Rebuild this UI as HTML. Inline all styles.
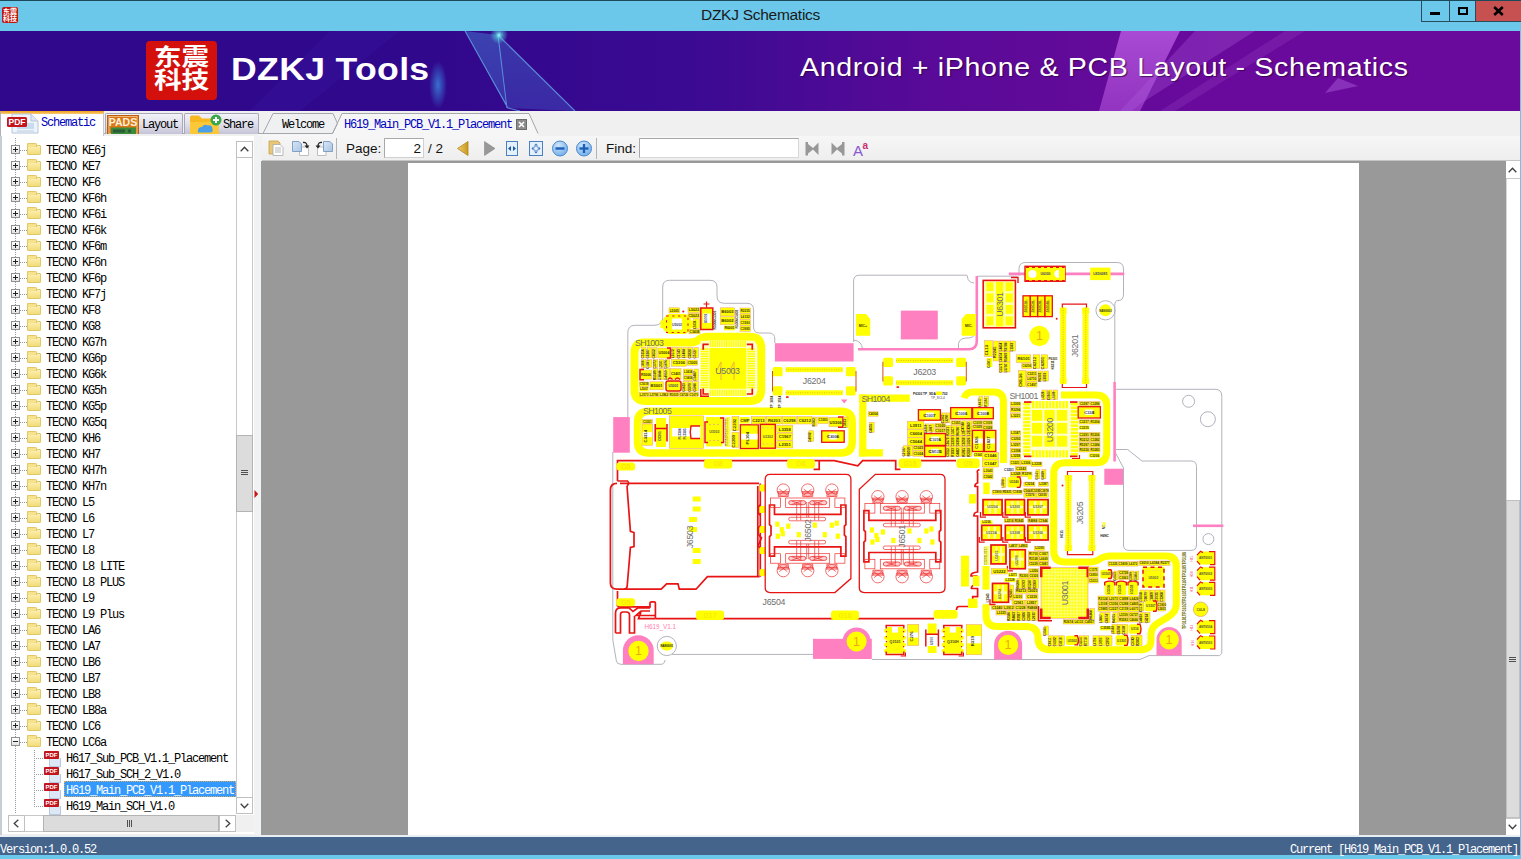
<!DOCTYPE html>
<html lang="en"><head><meta charset="utf-8"><title>DZKJ Schematics</title>
<style>
*{box-sizing:border-box;margin:0;padding:0}
html,body{width:1521px;height:859px;overflow:hidden;background:#f0f0f0}
body{font-family:"Liberation Sans",sans-serif;font-size:12px;color:#000}
#app{position:absolute;left:0;top:0;width:1521px;height:859px;overflow:hidden;background:#f0f0f0}
.abs{position:absolute}
/* title bar */
#titlebar{position:absolute;left:0;top:0;width:1521px;height:31px;background:#6bc8ea;border-top:1px solid #1d4a5a}
#titlebar .ttl{position:absolute;left:0;width:1521px;top:5px;text-align:center;font-size:15.5px;color:#1a1a1a;letter-spacing:-0.28px}
#appicon{position:absolute;left:2px;top:6px;width:16px;height:16px;background:#c0140c;border-radius:2px;color:#fff;font-family:"Liberation Sans","Noto Sans CJK SC",sans-serif;font-size:7px;line-height:7px;font-weight:bold;text-align:center;padding-top:1px;overflow:hidden}
#wctl{position:absolute;left:1421px;top:0;width:100px;border-right:none !important;height:21px;border:1px solid #2b4a5a;border-top:none;display:flex}
#wctl div{height:20px;position:relative}
#wctl .mn{width:28px;border-right:1px solid #2b4a5a}
#wctl .mx{width:27px;border-right:1px solid #2b4a5a}
#wctl .cl{width:45px;background:#c75050}
/* banner */
#banner{position:absolute;left:0;top:31px;width:1521px;height:80px;overflow:hidden;background:linear-gradient(90deg,#30088c 0%,#30088c 28%,#3a0a92 45%,#5a0a98 62%,#6a0a9c 80%,#6a0a9c 100%)}
/* tabs */
#tabrow{position:absolute;left:0;top:111px;width:1521px;height:25px;background:#f0f0f0}
.mono{font-family:"Liberation Mono",monospace;font-size:12px;letter-spacing:-1.2px;white-space:pre}
/* tree */
#tree{position:absolute;left:2px;top:0;width:235px;height:859px;pointer-events:none}
#treebg{position:absolute;left:2px;top:136px;width:252px;height:698px;background:#fff}
.row{position:absolute;left:0;height:16px;width:236px;white-space:nowrap}
.row .lbl{position:absolute;left:44px;top:1px;height:16px;line-height:16px;font-family:"Liberation Mono",monospace;font-size:12px;letter-spacing:-1.2px;white-space:pre;color:#000}
.row .lbl.f{left:62px;padding:0 1px 0 2px}
.row .lbl.sel{background:#3399ff;color:#fff;width:172px;top:-1px;height:16px;line-height:20px;outline:1px dotted #d8a860;outline-offset:-1px}
.pm{position:absolute;left:9px;top:3px;width:9px;height:9px;border:1px solid #919191;background:linear-gradient(#fff,#e4e4e4)}
.pm i{position:absolute;left:1px;top:3px;width:5px;height:1px;background:#222}
.pm i.pl:after{content:"";position:absolute;left:2px;top:-2px;width:1px;height:5px;background:#222}
.fold{position:absolute;left:25px;top:3px;width:14px;height:10px;background:linear-gradient(#fbf0b0,#f3dc78);border:1px solid #e0c868;border-radius:1px}
.fold:before{content:"";position:absolute;left:-1px;top:-3px;width:8px;height:3px;background:#f6e28c;border:1px solid #e0c868;border-bottom:none;border-radius:1px 2px 0 0}
.vline{position:absolute;width:1px;background-image:linear-gradient(#999 50%,transparent 50%);background-size:1px 2px}
#viewer{position:absolute;left:261px;top:161px;width:1245px;height:674px;background:#999;overflow:hidden}
#page{position:absolute;left:147px;top:2px;width:951px;height:672px;background:#fff}
.pdfi{position:absolute;left:42px;top:0;width:18px;height:16px}
.pdfi b{position:absolute;left:0;top:1px;width:15px;height:8px;background:#c4141c;color:#fff;font:bold 6px/8px "Liberation Sans",sans-serif;text-align:center;border-radius:1px}
.pdfi:before{content:"";position:absolute;left:5px;top:8px;width:10px;height:8px;background:#dce8f6;border:1px solid #b8c8e0;border-top:none}
.row .hl{position:absolute;top:8px;height:1px;background-image:linear-gradient(90deg,#999 50%,transparent 50%);background-size:2px 1px}

</style></head>
<body>
<div id="app">
<div id="titlebar">
<div id="appicon">东震<br>科技</div>
<div class="ttl">DZKJ Schematics</div>
<div id="wctl"><div class="mn"><span class="abs" style="left:8px;top:11px;width:10px;height:3px;background:#000"></span></div><div class="mx"><span class="abs" style="left:8px;top:6px;width:10px;height:8px;border:2px solid #000;border-top-width:2px"></span></div><div class="cl"><svg class="abs" style="left:17px;top:5px" width="11" height="10" viewBox="0 0 11 10"><path d="M1.2 1 L9.8 9 M9.8 1 L1.2 9" stroke="#000" stroke-width="2.6" fill="none"/></svg></div></div>
</div>
<div class="abs" style="left:1519.5px;top:31px;width:1.5px;height:828px;background:#6bc8ea;z-index:9"></div>

<div id="banner">
<svg class="abs" style="left:0;top:0" width="1521" height="80" viewBox="0 31 1521 80">
<defs>
<linearGradient id="sh1" x1="0" y1="0" x2="0" y2="1"><stop offset="0" stop-color="#4aa0e8" stop-opacity=".38"/><stop offset="1" stop-color="#4a80e0" stop-opacity=".34"/></linearGradient>
<linearGradient id="sh2" x1="0" y1="0" x2="0" y2="1"><stop offset="0" stop-color="#c060e8" stop-opacity=".75"/><stop offset="1" stop-color="#b050d8" stop-opacity=".6"/></linearGradient>
<radialGradient id="glow"><stop offset="0" stop-color="#9ff" stop-opacity="1"/><stop offset=".4" stop-color="#5cd" stop-opacity=".6"/><stop offset="1" stop-color="#5cd" stop-opacity="0"/></radialGradient>
<radialGradient id="glow2"><stop offset="0" stop-color="#3a8ae0" stop-opacity=".8"/><stop offset="1" stop-color="#3a8ae0" stop-opacity="0"/></radialGradient>
</defs>
<polygon points="330,31 400,31 300,111 250,111" fill="#3a20b0" opacity=".22"/>
<polygon points="465,31 498,35 507,108 " fill="url(#sh1)"/>
<polygon points="498,35 575,111 508,108" fill="url(#sh1)" opacity=".8"/>
<path d="M465 31 L508 108 L520 111 M498 35 L507 108 M498 35 L575 111" stroke="#6ab8f0" stroke-width="1.1" fill="none" opacity=".7"/>
<ellipse cx="438" cy="85" rx="9" ry="24" fill="url(#glow2)"/>
<circle cx="499" cy="35" r="9" fill="url(#glow)"/>
<polygon points="1121,31 1180,31 1140,111 1099,111" fill="url(#sh2)"/>
<polygon points="1195,31 1255,31 1140,104 1132,111 1120,111" fill="#b060e0" opacity=".3"/>
<polygon points="1285,31 1305,31 1175,111 1160,111" fill="#b060e0" opacity=".18"/>
<polygon points="1325,93 1358,86 1338,78" fill="#b060e0" opacity=".45"/>
</svg>
<div class="abs" style="left:146px;top:10px;width:71px;height:59px;background:#d4100c;border-radius:4px"></div>
<div class="abs" style="left:146px;top:15px;width:71px;color:#fff;font-family:'Liberation Sans','Noto Sans CJK SC',sans-serif;font-weight:bold;font-size:23px;line-height:23px;text-align:center;transform:scaleX(1.2);transform-origin:35.5px 0">东震<br>科技</div>
<div class="abs" id="dzkj" style="left:231px;top:20px;font-size:31.5px;font-weight:bold;color:#fff;line-height:36px;white-space:nowrap;letter-spacing:.3px;transform:scaleX(1.13);transform-origin:0 0">DZKJ Tools</div>
<div class="abs" id="slog" style="left:800px;top:21px;font-size:26px;color:#fff;line-height:30px;white-space:nowrap;letter-spacing:.6px;transform:scaleX(1.1);transform-origin:0 0;text-shadow:1px 1px 1px rgba(40,0,60,.7)">Android + iPhone &amp; PCB Layout - Schematics</div>
</div>

<div id="tabrow">
<div class="abs" style="left:0;top:22px;width:264px;height:1px;background:#a8a8b4"></div>
<!-- Schematic (active) -->
<div class="abs" style="left:0;top:0;width:104px;height:25px;background:#fff;border-left:1px solid #b0b0b8;border-right:1px solid #c8c8d0"></div>
<div class="abs" style="left:1px;top:0;width:103px;height:3px;background:linear-gradient(#f0a020,#f8c870)"></div>
<svg class="abs" style="left:5px;top:2px" width="36" height="22" viewBox="0 0 36 22">
<path d="M7 1 H26 L33 8 V20 H7 Z" fill="#eef4fb" stroke="#b8c4d8" stroke-width="1"/>
<path d="M26 1 V8 H33" fill="#dde6f2" stroke="#b8c4d8" stroke-width="1"/>
<rect x="12" y="10" width="17" height="6" fill="#c8dcf0"/><rect x="12" y="17" width="17" height="2" fill="#d4e0f0"/>
<rect x="2" y="4" width="20" height="10" rx="1.5" fill="#c4141c"/>
<text x="12" y="12.3" font-family="Liberation Sans,sans-serif" font-weight="bold" font-size="8.5" fill="#fff" text-anchor="middle">PDF</text>
</svg>
<div class="abs mono" style="left:41px;top:5px;color:#0000c0;line-height:14px">Schematic</div>
<!-- Layout -->
<div class="abs" style="left:105px;top:2px;width:78px;height:21px;background:linear-gradient(#f2f2f8,#e0e0ec 50%,#c4c4d8);border:1px solid #a8a8b8;border-bottom:none;border-radius:2px 2px 0 0"></div>
<svg class="abs" style="left:107px;top:4px" width="33" height="19" viewBox="0 0 33 19">
<rect x=".5" y=".5" width="31" height="18.5" fill="#d87818" stroke="#b86010"/>
<rect x="2" y="1.5" width="28" height="17" fill="none" stroke="#f8c890" stroke-width=".8"/>
<rect x="4" y="12.5" width="25" height="6.5" fill="#3a8a3a"/><rect x="6" y="14.5" width="12" height="3" fill="#2a5a3a"/><rect x="21" y="14.5" width="3" height="3" fill="#2a5a3a"/>
<text x="16" y="11" font-family="Liberation Sans,sans-serif" font-weight="bold" font-size="10.5" fill="#fff0d8" text-anchor="middle">PADS</text>
</svg>
<div class="abs mono" style="left:142px;top:7px;line-height:14px">Layout</div>
<!-- Share -->
<div class="abs" style="left:184px;top:2px;width:75px;height:21px;background:linear-gradient(#f2f2f8,#e0e0ec 50%,#c4c4d8);border:1px solid #a8a8b8;border-bottom:none;border-radius:2px 2px 0 0"></div>
<svg class="abs" style="left:189px;top:3px" width="34" height="20" viewBox="0 0 34 20">
<path d="M1 3 Q1 1.5 2.5 1.5 H10 L13 4.5 H28 Q29.5 4.500 29.500 6 V20 H1 Z" fill="#f8b820"/>
<path d="M1 8 H29.500 V20 H1 Z" fill="#fcc838"/>
<path d="M9 18.500 Q8 13 13 13 Q15 9.500 19 11.500 Q23 10.500 23.500 15 Q24.500 18.500 21 18.500 Z" fill="#4aa0e8"/>
<circle cx="27" cy="6" r="5.500" fill="#3aa848"/><path d="M27 3 V9 M24 6 H30" stroke="#fff" stroke-width="2"/>
</svg>
<div class="abs mono" style="left:223px;top:7px;line-height:14px">Share</div>
<!-- right tabs -->
<svg class="abs" style="left:258px;top:0" width="300" height="25" viewBox="258 111 300 25">
<polygon points="342,113.500 529,113.500 538,133.500 538,136 258,136 258,133.500 332.500,133.500" fill="#f6f6f6"/>
<polygon points="263,133.500 273,113.500 333,113.500 337.500,123.500 332.500,133.500" fill="#eef0f2" stroke="#a4a8ac" stroke-width="1"/>
<path d="M332.500 133.500 L342 113.500 H529 L538 133.500" fill="none" stroke="#a4a8ac" stroke-width="1"/>
<path d="M258 133.500 H263" stroke="#a4a8ac"/>
<rect x="516.500" y="119.500" width="10" height="10" fill="#8c8c8c" stroke="#6c6c6c"/>
<path d="M519 122 L524 127 M524 122 L519 127" stroke="#fff" stroke-width="1.500"/>
</svg>
<div class="abs mono" style="left:282px;top:7px;line-height:14px">Welcome</div>
<div class="abs mono" style="left:344px;top:7px;line-height:14px;color:#0000c0">H619_Main_PCB_V1.1_Placement</div>
</div>

<div id="treebg"></div>
<div class="abs" style="left:0;top:136px;width:2px;height:699px;background:#c8ccd4"></div>
<div class="abs" style="left:254px;top:136px;width:7px;height:699px;background:#f0f2f4"></div>
<!-- vertical scrollbar -->
<div class="abs" style="left:236px;top:141px;width:17px;height:673px;background:#fff;border-left:1px solid #c8c8c8;border-right:1px solid #c8c8c8"></div>
<div class="abs" style="left:236px;top:141px;width:17px;height:17px;background:#fff;border:1px solid #c0c0c0"></div>
<svg class="abs" style="left:240px;top:146px" width="9" height="6"><path d="M.7 5.300 L4.500 1.200 L8.300 5.300" fill="none" stroke="#404040" stroke-width="1.300"/></svg>
<div class="abs" style="left:236px;top:797px;width:17px;height:17px;background:#fff;border:1px solid #c0c0c0"></div>
<svg class="abs" style="left:240px;top:803px" width="9" height="6"><path d="M.7 .7 L4.500 4.800 L8.300 .7" fill="none" stroke="#404040" stroke-width="1.300"/></svg>
<div class="abs" style="left:236px;top:435px;width:17px;height:77px;background:#dcdcdc;border:1px solid #b4b4b4"></div>
<div class="abs" style="left:241px;top:470px;width:7px;height:1px;background:#505050;box-shadow:0 2px 0 #505050,0 4px 0 #505050"></div>
<!-- horizontal scrollbar -->
<div class="abs" style="left:8px;top:815px;width:228px;height:17px;background:#fff;border:1px solid #c8c8c8"></div>
<div class="abs" style="left:8px;top:815px;width:17px;height:17px;background:#fff;border:1px solid #c0c0c0"></div>
<svg class="abs" style="left:13px;top:819px" width="6" height="9"><path d="M5.300 .7 L1.200 4.500 L5.300 8.300" fill="none" stroke="#404040" stroke-width="1.300"/></svg>
<div class="abs" style="left:219px;top:815px;width:17px;height:17px;background:#fff;border:1px solid #c0c0c0"></div>
<svg class="abs" style="left:225px;top:819px" width="6" height="9"><path d="M.7 .7 L4.800 4.500 L.7 8.300" fill="none" stroke="#404040" stroke-width="1.300"/></svg>
<div class="abs" style="left:43px;top:815px;width:176px;height:17px;background:#dcdcdc;border:1px solid #b4b4b4"></div>
<div class="abs" style="left:127px;top:820px;width:1px;height:7px;background:#505050;box-shadow:2px 0 0 #505050,4px 0 0 #505050"></div>
<div class="abs" style="left:236px;top:815px;width:18px;height:17px;background:#f0f0f0"></div>
<!-- splitter arrow -->
<svg class="abs" style="left:254px;top:489px" width="5" height="10"><path d="M.500 1 L4.200 5 L.500 9 Z" fill="#c81414"/></svg>

<div id="tree">
<div class="vline" style="left:13px;top:138px;height:676px"></div>
<div class="vline" style="left:32px;top:750px;height:57px"></div>
<div class="row" style="top:142px"><span class="hl" style="left:18px;width:7px"></span><span class="pm"><i class=pl></i></span><span class="fold"></span><span class="lbl">TECNO KE6j</span></div>
<div class="row" style="top:158px"><span class="hl" style="left:18px;width:7px"></span><span class="pm"><i class=pl></i></span><span class="fold"></span><span class="lbl">TECNO KE7</span></div>
<div class="row" style="top:174px"><span class="hl" style="left:18px;width:7px"></span><span class="pm"><i class=pl></i></span><span class="fold"></span><span class="lbl">TECNO KF6</span></div>
<div class="row" style="top:190px"><span class="hl" style="left:18px;width:7px"></span><span class="pm"><i class=pl></i></span><span class="fold"></span><span class="lbl">TECNO KF6h</span></div>
<div class="row" style="top:206px"><span class="hl" style="left:18px;width:7px"></span><span class="pm"><i class=pl></i></span><span class="fold"></span><span class="lbl">TECNO KF6i</span></div>
<div class="row" style="top:222px"><span class="hl" style="left:18px;width:7px"></span><span class="pm"><i class=pl></i></span><span class="fold"></span><span class="lbl">TECNO KF6k</span></div>
<div class="row" style="top:238px"><span class="hl" style="left:18px;width:7px"></span><span class="pm"><i class=pl></i></span><span class="fold"></span><span class="lbl">TECNO KF6m</span></div>
<div class="row" style="top:254px"><span class="hl" style="left:18px;width:7px"></span><span class="pm"><i class=pl></i></span><span class="fold"></span><span class="lbl">TECNO KF6n</span></div>
<div class="row" style="top:270px"><span class="hl" style="left:18px;width:7px"></span><span class="pm"><i class=pl></i></span><span class="fold"></span><span class="lbl">TECNO KF6p</span></div>
<div class="row" style="top:286px"><span class="hl" style="left:18px;width:7px"></span><span class="pm"><i class=pl></i></span><span class="fold"></span><span class="lbl">TECNO KF7j</span></div>
<div class="row" style="top:302px"><span class="hl" style="left:18px;width:7px"></span><span class="pm"><i class=pl></i></span><span class="fold"></span><span class="lbl">TECNO KF8</span></div>
<div class="row" style="top:318px"><span class="hl" style="left:18px;width:7px"></span><span class="pm"><i class=pl></i></span><span class="fold"></span><span class="lbl">TECNO KG8</span></div>
<div class="row" style="top:334px"><span class="hl" style="left:18px;width:7px"></span><span class="pm"><i class=pl></i></span><span class="fold"></span><span class="lbl">TECNO KG7h</span></div>
<div class="row" style="top:350px"><span class="hl" style="left:18px;width:7px"></span><span class="pm"><i class=pl></i></span><span class="fold"></span><span class="lbl">TECNO KG6p</span></div>
<div class="row" style="top:366px"><span class="hl" style="left:18px;width:7px"></span><span class="pm"><i class=pl></i></span><span class="fold"></span><span class="lbl">TECNO KG6k</span></div>
<div class="row" style="top:382px"><span class="hl" style="left:18px;width:7px"></span><span class="pm"><i class=pl></i></span><span class="fold"></span><span class="lbl">TECNO KG5h</span></div>
<div class="row" style="top:398px"><span class="hl" style="left:18px;width:7px"></span><span class="pm"><i class=pl></i></span><span class="fold"></span><span class="lbl">TECNO KG5p</span></div>
<div class="row" style="top:414px"><span class="hl" style="left:18px;width:7px"></span><span class="pm"><i class=pl></i></span><span class="fold"></span><span class="lbl">TECNO KG5q</span></div>
<div class="row" style="top:430px"><span class="hl" style="left:18px;width:7px"></span><span class="pm"><i class=pl></i></span><span class="fold"></span><span class="lbl">TECNO KH6</span></div>
<div class="row" style="top:446px"><span class="hl" style="left:18px;width:7px"></span><span class="pm"><i class=pl></i></span><span class="fold"></span><span class="lbl">TECNO KH7</span></div>
<div class="row" style="top:462px"><span class="hl" style="left:18px;width:7px"></span><span class="pm"><i class=pl></i></span><span class="fold"></span><span class="lbl">TECNO KH7h</span></div>
<div class="row" style="top:478px"><span class="hl" style="left:18px;width:7px"></span><span class="pm"><i class=pl></i></span><span class="fold"></span><span class="lbl">TECNO KH7n</span></div>
<div class="row" style="top:494px"><span class="hl" style="left:18px;width:7px"></span><span class="pm"><i class=pl></i></span><span class="fold"></span><span class="lbl">TECNO L5</span></div>
<div class="row" style="top:510px"><span class="hl" style="left:18px;width:7px"></span><span class="pm"><i class=pl></i></span><span class="fold"></span><span class="lbl">TECNO L6</span></div>
<div class="row" style="top:526px"><span class="hl" style="left:18px;width:7px"></span><span class="pm"><i class=pl></i></span><span class="fold"></span><span class="lbl">TECNO L7</span></div>
<div class="row" style="top:542px"><span class="hl" style="left:18px;width:7px"></span><span class="pm"><i class=pl></i></span><span class="fold"></span><span class="lbl">TECNO L8</span></div>
<div class="row" style="top:558px"><span class="hl" style="left:18px;width:7px"></span><span class="pm"><i class=pl></i></span><span class="fold"></span><span class="lbl">TECNO L8 LITE</span></div>
<div class="row" style="top:574px"><span class="hl" style="left:18px;width:7px"></span><span class="pm"><i class=pl></i></span><span class="fold"></span><span class="lbl">TECNO L8 PLUS</span></div>
<div class="row" style="top:590px"><span class="hl" style="left:18px;width:7px"></span><span class="pm"><i class=pl></i></span><span class="fold"></span><span class="lbl">TECNO L9</span></div>
<div class="row" style="top:606px"><span class="hl" style="left:18px;width:7px"></span><span class="pm"><i class=pl></i></span><span class="fold"></span><span class="lbl">TECNO L9 Plus</span></div>
<div class="row" style="top:622px"><span class="hl" style="left:18px;width:7px"></span><span class="pm"><i class=pl></i></span><span class="fold"></span><span class="lbl">TECNO LA6</span></div>
<div class="row" style="top:638px"><span class="hl" style="left:18px;width:7px"></span><span class="pm"><i class=pl></i></span><span class="fold"></span><span class="lbl">TECNO LA7</span></div>
<div class="row" style="top:654px"><span class="hl" style="left:18px;width:7px"></span><span class="pm"><i class=pl></i></span><span class="fold"></span><span class="lbl">TECNO LB6</span></div>
<div class="row" style="top:670px"><span class="hl" style="left:18px;width:7px"></span><span class="pm"><i class=pl></i></span><span class="fold"></span><span class="lbl">TECNO LB7</span></div>
<div class="row" style="top:686px"><span class="hl" style="left:18px;width:7px"></span><span class="pm"><i class=pl></i></span><span class="fold"></span><span class="lbl">TECNO LB8</span></div>
<div class="row" style="top:702px"><span class="hl" style="left:18px;width:7px"></span><span class="pm"><i class=pl></i></span><span class="fold"></span><span class="lbl">TECNO LB8a</span></div>
<div class="row" style="top:718px"><span class="hl" style="left:18px;width:7px"></span><span class="pm"><i class=pl></i></span><span class="fold"></span><span class="lbl">TECNO LC6</span></div>
<div class="row" style="top:734px"><span class="hl" style="left:18px;width:7px"></span><span class="pm"><i class=mi></i></span><span class="fold"></span><span class="lbl">TECNO LC6a</span></div>
<div class="row" style="top:750px"><span class="hl" style="left:32px;width:11px"></span><span class="pdfi"><b>PDF</b></span><span class="lbl f">H617_Sub_PCB_V1.1_Placement</span></div>
<div class="row" style="top:766px"><span class="hl" style="left:32px;width:11px"></span><span class="pdfi"><b>PDF</b></span><span class="lbl f">H617_Sub_SCH_2_V1.0</span></div>
<div class="row" style="top:782px"><span class="hl" style="left:32px;width:11px"></span><span class="pdfi"><b>PDF</b></span><span class="lbl f sel">H619_Main_PCB_V1.1_Placement</span></div>
<div class="row" style="top:798px"><span class="hl" style="left:32px;width:11px"></span><span class="pdfi"><b>PDF</b></span><span class="lbl f">H619_Main_SCH_V1.0</span></div>
</div>
<div id="toolbar" class="abs" style="left:262px;top:136px;width:1259px;height:25px;background:linear-gradient(#f6f6f6,#eeeeee)">
<div class="abs" style="left:0;top:24px;width:1258px;height:1px;background:#c4c4c4"></div>
<svg class="abs" style="left:0;top:0" width="620" height="24" viewBox="262 136 620 24">
<defs>
<linearGradient id="pg1" x1="0" y1="0" x2="1" y2="1"><stop offset="0" stop-color="#d8e6f6"/><stop offset="1" stop-color="#a8c4e4"/></linearGradient>
<linearGradient id="gold" x1="0" y1="0" x2="1" y2="0"><stop offset="0" stop-color="#f0d070"/><stop offset="1" stop-color="#c89820"/></linearGradient>
<radialGradient id="bl" cx=".4" cy=".3" r=".8"><stop offset="0" stop-color="#cfe6fb"/><stop offset="1" stop-color="#6aa8e8"/></radialGradient>
</defs>
<!-- icon1 -->
<path d="M269 141 H278 L280 143 V154 H269 Z" fill="#e8c878" stroke="#c8a050" stroke-width=".8"/>
<path d="M273 144.500 H280 L283 147.500 V155.500 H273 Z" fill="#fff" stroke="#a8a8a8" stroke-width=".8"/>
<path d="M275 148 H281 M275 150 H281 M275 152 H281" stroke="#a0a8b0" stroke-width=".8"/>
<!-- icon2 -->
<path d="M299.500 147 H308.500 V155.500 H299.500 Z" fill="#fff" stroke="#b8b8b8" stroke-width=".9"/>
<path d="M292.500 141.500 H299 L301.500 144 V151.500 H292.500 Z" fill="url(#pg1)" stroke="#7898c0" stroke-width=".9"/>
<path d="M303 142.500 Q307 142 307 146" fill="none" stroke="#222" stroke-width="1.300"/><path d="M304.500 145.500 H309.500 L307 148.500 Z" fill="#222"/>
<!-- icon3 -->
<path d="M317.500 147 H326 V155.500 H317.500 Z" fill="#fff" stroke="#b8b8b8" stroke-width=".9"/>
<path d="M323.500 141.500 H330 L332.500 144 V151.500 H323.500 Z" fill="url(#pg1)" stroke="#7898c0" stroke-width=".9"/>
<path d="M322 142.500 Q318 142 318 146" fill="none" stroke="#222" stroke-width="1.300"/><path d="M315.500 145.500 H320.500 L318 148.500 Z" fill="#222"/>
<path d="M336.500 138 V159" stroke="#b4b4b4" stroke-width="1"/>
<!-- page box -->
<rect x="384.500" y="138.500" width="39" height="19" fill="#fff" stroke="#d0d0d0" stroke-width="1"/>
<path d="M384.500 157.500 V138.500 H423.500" fill="none" stroke="#a8a8a8" stroke-width="1"/>
<!-- arrows -->
<path d="M468 141.500 V155.500 L457.500 148.500 Z" fill="url(#gold)" stroke="#b08818" stroke-width=".8"/>
<path d="M484.500 141.500 V155.500 L495 148.500 Z" fill="#989898" stroke="#888" stroke-width=".6"/>
<!-- fit width -->
<rect x="506.500" y="141.500" width="11" height="14" fill="#e4f0fc" stroke="#4a80c0" stroke-width="1"/>
<path d="M508 148.500 L511 146 V151 Z M516 148.500 L513 146 V151 Z" fill="#1a58a8"/>
<!-- fit page -->
<rect x="529.500" y="141.500" width="13" height="14" fill="#e4f0fc" stroke="#4a80c0" stroke-width="1"/>
<path d="M536 143.500 L538 145.500 H534 Z M536 153.500 L538 151.500 H534 Z M531.500 148.500 L533.500 146.500 V150.500 Z M540.500 148.500 L538.500 146.500 V150.500 Z" fill="#3a70b8"/>
<circle cx="536" cy="148.500" r="2.300" fill="none" stroke="#5a88c8" stroke-width=".8"/>
<!-- zoom out/in -->
<circle cx="560" cy="148.500" r="7.500" fill="url(#bl)" stroke="#4a88d0" stroke-width="1"/>
<rect x="555.500" y="147.300" width="9" height="2.400" fill="#1a60b8"/>
<circle cx="584" cy="148.500" r="7.500" fill="url(#bl)" stroke="#4a88d0" stroke-width="1"/>
<rect x="579.500" y="147.300" width="9" height="2.400" fill="#1a60b8"/><rect x="582.800" y="144" width="2.400" height="9" fill="#1a60b8"/>
<path d="M596.500 138 V159" stroke="#b4b4b4" stroke-width="1"/>
<!-- find box -->
<rect x="639.500" y="138.500" width="159" height="19" fill="#fff" stroke="#d8d8d8" stroke-width="1"/>
<path d="M639.500 157.500 V138.500 H798.500" fill="none" stroke="#a8a8a8" stroke-width="1"/>
<!-- find prev/next -->
<path d="M805.500 142 H808 V144 L813 148 L818.500 142.500 V155 L813 149.500 L808 153.500 V155.500 H805.500 Z" fill="#989898"/>
<path d="M844.500 142 H842 V144 L837 148 L831.500 142.500 V155 L837 149.500 L842 153.500 V155.500 H844.500 Z" fill="#989898"/>
<!-- Aa -->
<text x="853" y="156" font-family="Liberation Sans,sans-serif" font-size="15" fill="#8a58d0">A</text>
<text x="862.500" y="148.500" font-family="Liberation Sans,sans-serif" font-size="10" font-weight="bold" fill="#c83070">a</text>
</svg>
<div class="abs" style="left:84px;top:4px;font-size:13.500px;line-height:17px;color:#111">Page:</div>
<div class="abs" style="left:140px;top:4px;width:19px;text-align:right;font-size:13.500px;line-height:17px;color:#111">2</div>
<div class="abs" style="left:166px;top:4px;font-size:13.500px;line-height:17px;color:#111;white-space:pre">/ 2</div>
<div class="abs" style="left:344px;top:4px;font-size:13.500px;line-height:17px;color:#111">Find:</div>
</div>

<div id="viewer">
<div id="page">
<svg style="position:absolute;left:0;top:0" width="951" height="672" viewBox="408 163 951 672" font-family="Liberation Sans,sans-serif">
<defs><pattern id="bga" x="1042.500" y="569" width="3.140" height="3.200" patternUnits="userSpaceOnUse"><rect width="3.140" height="3.200" fill="#ffffa0"/><rect x=".4" y=".4" width="2.300" height="2.400" fill="#ffff00"/></pattern></defs>
<path d="M612.8 452 V640 L616.400 661 Q617 664.300 621 664.300 H661 Q664.500 664.300 665 660" fill="none" stroke="#b2b2bc" stroke-width="1"/>
<path d="M627.800 418 V333 Q627.800 325.300 635 325.300 H654 Q662.700 325.300 662.700 317 V287 Q662.700 280.300 669.500 280.300 H710 Q717 280.300 717 287 V296 Q717 303.300 724.500 303.300 H747 Q753.600 303.300 753.600 310 V327 Q753.600 333 759.500 333 H769 Q774.800 333 774.800 339 V343" fill="none" stroke="#b2b2bc" stroke-width="1"/>
<path d="M672 654.400 H813" fill="none" stroke="#b2b2bc" stroke-width="1"/>
<path d="M872 659.500 H1140 L1149 655.600 H1219.500 L1221.800 653.500 V396 Q1221.800 389.300 1215 389.300 H1116" fill="none" stroke="#b2b2bc" stroke-width="1"/>
<path d="M1019 276 V269 Q1019 262.500 1025.500 262.500 H1117 Q1123.500 262.500 1123.500 269 V294 Q1123.500 300.600 1118 300.600 Q1114.800 300.600 1114.800 305 V382" fill="none" stroke="#b2b2bc" stroke-width="1"/>
<path d="M977.500 276.200 H1017.500" fill="none" stroke="#b2b2bc" stroke-width="1"/>
<path d="M853.600 342 V281 Q853.600 275.200 859.500 275.200 H966 Q967.500 275.200 967.500 277 Q968 282.500 974 283 " fill="none" stroke="#b2b2bc" stroke-width="1"/>
<path d="M853.600 340 Q862 341 862.500 349 " fill="none" stroke="#b2b2bc" stroke-width="1"/>
<path d="M958.500 348 Q957 338.500 966 338 Q974 338.500 975.500 333" fill="none" stroke="#b2b2bc" stroke-width="1"/>
<path d="M1116 449.500 H1127.600 L1142 461 H1191 Q1196.500 461 1196.500 466.500 V545 Q1196.500 550.400 1191 550.400 H1129 Q1123.500 550.400 1123.500 545 V468 L1115 452" fill="none" stroke="#b2b2bc" stroke-width="1"/>
<circle cx="1188.6" cy="401.3" r="6" fill="none" stroke="#b2b2bc" stroke-width="1"/>
<circle cx="1207.9" cy="419.2" r="7.5" fill="none" stroke="#b2b2bc" stroke-width="1"/>
<circle cx="1208.4" cy="539.1" r="5.5" fill="none" stroke="#b2b2bc" stroke-width="1"/>
<circle cx="1105.5" cy="310.3" r="9.6" fill="none" stroke="#b2b2bc" stroke-width="1"/>
<circle cx="666.8" cy="646" r="9.6" fill="none" stroke="#b2b2bc" stroke-width="1"/>
<rect x="774.9" y="343.2" width="78.7" height="18.3" fill="#ff80c0"/>
<rect x="613.2" y="417.1" width="16.6" height="35.6" fill="#ff80c0"/>
<rect x="900.8" y="310.6" width="37" height="28.8" fill="#ff80c0"/>
<rect x="1104.3" y="468.7" width="18.7" height="16.1" fill="#ff80c0"/>
<rect x="813" y="638.8" width="58.8" height="20.1" fill="#ff80c0"/>
<path d="M858 349.200 H969 Q976.800 349.200 976.800 341 V276" fill="none" stroke="#ff80c0" stroke-width="2.6"/>
<path d="M1008.800 273.900 H1124.300" fill="none" stroke="#ff80c0" stroke-width="2.6"/>
<path d="M1114.600 382 V461.500" fill="none" stroke="#ff80c0" stroke-width="2.6"/>
<path d="M1193 525.800 H1223.400" fill="none" stroke="#ff80c0" stroke-width="2.6"/>
<path d="M841 399.500 H847.500 L844.200 403.500 Z" fill="#ff80c0" stroke="none" stroke-width="1.2"/>
<path d="M622.9 664.3 V650.5 A15.4 15.4 0 0 1 653.7 650.5 V664.3 Z" fill="#ff80c0" stroke="none" stroke-width="1.2"/>
<path d="M842.6 658.9 V641.5 A14 14 0 0 1 870.6 641.5 V658.9 Z" fill="#ff80c0" stroke="none" stroke-width="1.2"/>
<path d="M994.1 659.5 V644.7 A14 14 0 0 1 1022.1 644.7 V659.5 Z" fill="#ff80c0" stroke="none" stroke-width="1.2"/>
<path d="M1156.5 655.6 V639.6 A12.6 12.6 0 0 1 1181.7 639.6 V655.6 Z" fill="#ff80c0" stroke="none" stroke-width="1.2"/>
<path d="M644 342.500 H690 Q696 342.500 699 339.500 Q702 336.700 708 336.700 H750 Q761.200 336.700 761.200 348 V390 Q761.200 401 750 401 H646 Q634.500 401 634.500 390 V353 Q634.500 342.500 644 342.500 Z" fill="none" stroke="#ffff00" stroke-width="8" stroke-linejoin="round" stroke-linecap="butt"/>
<path d="M649 411.200 H841 Q852.200 411.200 852.200 422 V442 Q852.200 453 841 453 H649 Q637.600 453 637.600 442 V422 Q637.600 411.200 649 411.200 Z" fill="none" stroke="#ffff00" stroke-width="7.5" stroke-linejoin="round"/>
<rect x="859.2" y="394.5" width="50.5" height="7.3" fill="#ffff00"/>
<rect x="859.2" y="394.5" width="7.2" height="62" fill="#ffff00"/>
<rect x="859.2" y="449.2" width="23.7" height="7.3" fill="#ffff00"/>
<path d="M964 398 Q966 392 973 392 H994 Q1003.500 392 1003.500 402 V463" fill="none" stroke="#ffff00" stroke-width="7" stroke-linejoin="round"/>
<path d="M1061 395 H1096 Q1106.700 395 1106.700 405 V452 Q1106.700 462.800 1096 462.800 H1065 Q1053.700 462.800 1053.700 474 V551 Q1053.700 562 1065 562 H1089 Q1096 562 1100 559 Q1104 556 1111 556 H1166 Q1176.300 556 1176.300 566 V604 Q1176.300 612 1168 617 L1158 623 Q1151 627 1151 635 V640 Q1151 649.700 1141 649.700 H1050 Q1038 649.700 1038 638 Q1038 626.400 1026 626.400 H997 Q986 626.400 986 615 V604.300" fill="none" stroke="#ffff00" stroke-width="7" stroke-linejoin="round"/>
<path d="M986 589.600 V566" fill="none" stroke="#ffff00" stroke-width="7" stroke-linejoin="round"/>
<rect x="772.8" y="367" width="9.8" height="9.3" fill="#ffff00" rx="1.5"/>
<rect x="845.9" y="367" width="9.8" height="9.3" fill="#ffff00" rx="1.5"/>
<rect x="772.8" y="386.2" width="9.8" height="9.3" fill="#ffff00" rx="1.5"/>
<rect x="845.9" y="386.2" width="9.8" height="9.3" fill="#ffff00" rx="1.5"/>
<rect x="785.6" y="367.3" width="57.3" height="4.8" fill="#ffff00" fill-opacity=".85"/>
<rect x="785.6" y="390.4" width="57.3" height="4.8" fill="#ffff00" fill-opacity=".85"/>
<rect x="786" y="367.3" width="1.7" height="4.8" fill="#ffff00"/>
<rect x="786" y="390.4" width="1.7" height="4.8" fill="#ffff00"/>
<rect x="788.3" y="367.3" width="1.7" height="4.8" fill="#ffff00"/>
<rect x="788.3" y="390.4" width="1.7" height="4.8" fill="#ffff00"/>
<rect x="790.7" y="367.3" width="1.7" height="4.8" fill="#ffff00"/>
<rect x="790.7" y="390.4" width="1.7" height="4.8" fill="#ffff00"/>
<rect x="793.1" y="367.3" width="1.7" height="4.8" fill="#ffff00"/>
<rect x="793.1" y="390.4" width="1.7" height="4.8" fill="#ffff00"/>
<rect x="795.5" y="367.3" width="1.7" height="4.8" fill="#ffff00"/>
<rect x="795.5" y="390.4" width="1.7" height="4.8" fill="#ffff00"/>
<rect x="797.9" y="367.3" width="1.7" height="4.8" fill="#ffff00"/>
<rect x="797.9" y="390.4" width="1.7" height="4.8" fill="#ffff00"/>
<rect x="800.3" y="367.3" width="1.7" height="4.8" fill="#ffff00"/>
<rect x="800.3" y="390.4" width="1.7" height="4.8" fill="#ffff00"/>
<rect x="802.7" y="367.3" width="1.7" height="4.8" fill="#ffff00"/>
<rect x="802.7" y="390.4" width="1.7" height="4.8" fill="#ffff00"/>
<rect x="805.1" y="367.3" width="1.7" height="4.8" fill="#ffff00"/>
<rect x="805.1" y="390.4" width="1.7" height="4.8" fill="#ffff00"/>
<rect x="807.4" y="367.3" width="1.7" height="4.8" fill="#ffff00"/>
<rect x="807.4" y="390.4" width="1.7" height="4.8" fill="#ffff00"/>
<rect x="809.8" y="367.3" width="1.7" height="4.8" fill="#ffff00"/>
<rect x="809.8" y="390.4" width="1.7" height="4.8" fill="#ffff00"/>
<rect x="812.2" y="367.3" width="1.7" height="4.8" fill="#ffff00"/>
<rect x="812.2" y="390.4" width="1.7" height="4.8" fill="#ffff00"/>
<rect x="814.6" y="367.3" width="1.7" height="4.8" fill="#ffff00"/>
<rect x="814.6" y="390.4" width="1.7" height="4.8" fill="#ffff00"/>
<rect x="817" y="367.3" width="1.7" height="4.8" fill="#ffff00"/>
<rect x="817" y="390.4" width="1.7" height="4.8" fill="#ffff00"/>
<rect x="819.4" y="367.3" width="1.7" height="4.8" fill="#ffff00"/>
<rect x="819.4" y="390.4" width="1.7" height="4.8" fill="#ffff00"/>
<rect x="821.8" y="367.3" width="1.7" height="4.8" fill="#ffff00"/>
<rect x="821.8" y="390.4" width="1.7" height="4.8" fill="#ffff00"/>
<rect x="824.2" y="367.3" width="1.7" height="4.8" fill="#ffff00"/>
<rect x="824.2" y="390.4" width="1.7" height="4.8" fill="#ffff00"/>
<rect x="826.5" y="367.3" width="1.7" height="4.8" fill="#ffff00"/>
<rect x="826.5" y="390.4" width="1.7" height="4.8" fill="#ffff00"/>
<rect x="828.9" y="367.3" width="1.7" height="4.8" fill="#ffff00"/>
<rect x="828.9" y="390.4" width="1.7" height="4.8" fill="#ffff00"/>
<rect x="831.3" y="367.3" width="1.7" height="4.8" fill="#ffff00"/>
<rect x="831.3" y="390.4" width="1.7" height="4.8" fill="#ffff00"/>
<rect x="833.7" y="367.3" width="1.7" height="4.8" fill="#ffff00"/>
<rect x="833.7" y="390.4" width="1.7" height="4.8" fill="#ffff00"/>
<rect x="836.1" y="367.3" width="1.7" height="4.8" fill="#ffff00"/>
<rect x="836.1" y="390.4" width="1.7" height="4.8" fill="#ffff00"/>
<rect x="838.5" y="367.3" width="1.7" height="4.8" fill="#ffff00"/>
<rect x="838.5" y="390.4" width="1.7" height="4.8" fill="#ffff00"/>
<rect x="840.9" y="367.3" width="1.7" height="4.8" fill="#ffff00"/>
<rect x="840.9" y="390.4" width="1.7" height="4.8" fill="#ffff00"/>
<path d="M785.6 369.7 H842.9 M785.6 392.8 H842.9" fill="none" stroke="#d8a000" stroke-width="0.6" stroke-dasharray="1 1.400"/>
<path d="M772.5 371 V391.5 M856 371 V391.5" fill="none" stroke="#d05020" stroke-width="1"/>
<text x="814.2" y="384.4" font-size="8.8" fill="#6e6e6e" text-anchor="middle" letter-spacing="-.25">J6204</text>
<rect x="883.2" y="357.8" width="9.8" height="9.3" fill="#ffff00" rx="1.5"/>
<rect x="956.2" y="357.8" width="9.8" height="9.3" fill="#ffff00" rx="1.5"/>
<rect x="883.2" y="376.2" width="9.8" height="9.3" fill="#ffff00" rx="1.5"/>
<rect x="956.2" y="376.2" width="9.8" height="9.3" fill="#ffff00" rx="1.5"/>
<rect x="896" y="358.1" width="57.2" height="4.8" fill="#ffff00" fill-opacity=".85"/>
<rect x="896" y="380.4" width="57.2" height="4.8" fill="#ffff00" fill-opacity=".85"/>
<rect x="896.4" y="358.1" width="1.8" height="4.8" fill="#ffff00"/>
<rect x="896.4" y="380.4" width="1.8" height="4.8" fill="#ffff00"/>
<rect x="899" y="358.1" width="1.8" height="4.8" fill="#ffff00"/>
<rect x="899" y="380.4" width="1.8" height="4.8" fill="#ffff00"/>
<rect x="901.6" y="358.1" width="1.8" height="4.8" fill="#ffff00"/>
<rect x="901.6" y="380.4" width="1.8" height="4.8" fill="#ffff00"/>
<rect x="904.2" y="358.1" width="1.8" height="4.8" fill="#ffff00"/>
<rect x="904.2" y="380.4" width="1.8" height="4.8" fill="#ffff00"/>
<rect x="906.8" y="358.1" width="1.8" height="4.8" fill="#ffff00"/>
<rect x="906.8" y="380.4" width="1.8" height="4.8" fill="#ffff00"/>
<rect x="909.4" y="358.1" width="1.8" height="4.8" fill="#ffff00"/>
<rect x="909.4" y="380.4" width="1.8" height="4.8" fill="#ffff00"/>
<rect x="912" y="358.1" width="1.8" height="4.8" fill="#ffff00"/>
<rect x="912" y="380.4" width="1.8" height="4.8" fill="#ffff00"/>
<rect x="914.6" y="358.1" width="1.8" height="4.8" fill="#ffff00"/>
<rect x="914.6" y="380.4" width="1.8" height="4.8" fill="#ffff00"/>
<rect x="917.2" y="358.1" width="1.8" height="4.8" fill="#ffff00"/>
<rect x="917.2" y="380.4" width="1.8" height="4.8" fill="#ffff00"/>
<rect x="919.8" y="358.1" width="1.8" height="4.8" fill="#ffff00"/>
<rect x="919.8" y="380.4" width="1.8" height="4.8" fill="#ffff00"/>
<rect x="922.4" y="358.1" width="1.8" height="4.8" fill="#ffff00"/>
<rect x="922.4" y="380.4" width="1.8" height="4.8" fill="#ffff00"/>
<rect x="925" y="358.1" width="1.8" height="4.8" fill="#ffff00"/>
<rect x="925" y="380.4" width="1.8" height="4.8" fill="#ffff00"/>
<rect x="927.6" y="358.1" width="1.8" height="4.8" fill="#ffff00"/>
<rect x="927.6" y="380.4" width="1.8" height="4.8" fill="#ffff00"/>
<rect x="930.2" y="358.1" width="1.8" height="4.8" fill="#ffff00"/>
<rect x="930.2" y="380.4" width="1.8" height="4.8" fill="#ffff00"/>
<rect x="932.8" y="358.1" width="1.8" height="4.8" fill="#ffff00"/>
<rect x="932.8" y="380.4" width="1.8" height="4.8" fill="#ffff00"/>
<rect x="935.4" y="358.1" width="1.8" height="4.8" fill="#ffff00"/>
<rect x="935.4" y="380.4" width="1.8" height="4.8" fill="#ffff00"/>
<rect x="938" y="358.1" width="1.8" height="4.8" fill="#ffff00"/>
<rect x="938" y="380.4" width="1.8" height="4.8" fill="#ffff00"/>
<rect x="940.6" y="358.1" width="1.8" height="4.8" fill="#ffff00"/>
<rect x="940.6" y="380.4" width="1.8" height="4.8" fill="#ffff00"/>
<rect x="943.2" y="358.1" width="1.8" height="4.8" fill="#ffff00"/>
<rect x="943.2" y="380.4" width="1.8" height="4.8" fill="#ffff00"/>
<rect x="945.8" y="358.1" width="1.8" height="4.8" fill="#ffff00"/>
<rect x="945.8" y="380.4" width="1.8" height="4.8" fill="#ffff00"/>
<rect x="948.4" y="358.1" width="1.8" height="4.8" fill="#ffff00"/>
<rect x="948.4" y="380.4" width="1.8" height="4.8" fill="#ffff00"/>
<rect x="951" y="358.1" width="1.8" height="4.8" fill="#ffff00"/>
<rect x="951" y="380.4" width="1.8" height="4.8" fill="#ffff00"/>
<path d="M896 360.5 H953.2 M896 382.8 H953.2" fill="none" stroke="#d8a000" stroke-width="0.6" stroke-dasharray="1 1.400"/>
<path d="M882.9 361.8 V381.5 M966.3 361.8 V381.5" fill="none" stroke="#d05020" stroke-width="1"/>
<text x="924.6" y="374.8" font-size="8.8" fill="#6e6e6e" text-anchor="middle" letter-spacing="-.25">J6203</text>
<path d="M1062.3 312.2 V304.2 H1086.5 V312.2 M1062.3 379.5 V387.5 H1086.5 V379.5" fill="none" stroke="#e81414" stroke-width="1.2"/>
<path d="M1062.3 312.2 V379.5 M1086.5 312.2 V379.5" fill="none" stroke="#e89078" stroke-width="0.8"/>
<rect x="1060.3" y="307.7" width="5.8" height="76.3" fill="#ffff00" fill-opacity=".85"/>
<rect x="1059.7" y="307.7" width="7" height="6.5" fill="#ffff00" rx="1"/>
<rect x="1059.7" y="377.5" width="7" height="6.5" fill="#ffff00" rx="1"/>
<rect x="1082.7" y="307.7" width="5.8" height="76.3" fill="#ffff00" fill-opacity=".85"/>
<rect x="1082.1" y="307.7" width="7" height="6.5" fill="#ffff00" rx="1"/>
<rect x="1082.1" y="377.5" width="7" height="6.5" fill="#ffff00" rx="1"/>
<rect x="1060.3" y="315" width="5.8" height="1.5" fill="#ffff00"/>
<rect x="1082.7" y="315" width="5.8" height="1.5" fill="#ffff00"/>
<rect x="1060.3" y="317.1" width="5.8" height="1.5" fill="#ffff00"/>
<rect x="1082.7" y="317.1" width="5.8" height="1.5" fill="#ffff00"/>
<rect x="1060.3" y="319.2" width="5.8" height="1.5" fill="#ffff00"/>
<rect x="1082.7" y="319.2" width="5.8" height="1.5" fill="#ffff00"/>
<rect x="1060.3" y="321.2" width="5.8" height="1.5" fill="#ffff00"/>
<rect x="1082.7" y="321.2" width="5.8" height="1.5" fill="#ffff00"/>
<rect x="1060.3" y="323.3" width="5.8" height="1.5" fill="#ffff00"/>
<rect x="1082.7" y="323.3" width="5.8" height="1.5" fill="#ffff00"/>
<rect x="1060.3" y="325.4" width="5.8" height="1.5" fill="#ffff00"/>
<rect x="1082.7" y="325.4" width="5.8" height="1.5" fill="#ffff00"/>
<rect x="1060.3" y="327.5" width="5.8" height="1.5" fill="#ffff00"/>
<rect x="1082.7" y="327.5" width="5.8" height="1.5" fill="#ffff00"/>
<rect x="1060.3" y="329.5" width="5.8" height="1.5" fill="#ffff00"/>
<rect x="1082.7" y="329.5" width="5.8" height="1.5" fill="#ffff00"/>
<rect x="1060.3" y="331.6" width="5.8" height="1.5" fill="#ffff00"/>
<rect x="1082.7" y="331.6" width="5.8" height="1.5" fill="#ffff00"/>
<rect x="1060.3" y="333.7" width="5.8" height="1.5" fill="#ffff00"/>
<rect x="1082.7" y="333.7" width="5.8" height="1.5" fill="#ffff00"/>
<rect x="1060.3" y="335.8" width="5.8" height="1.5" fill="#ffff00"/>
<rect x="1082.7" y="335.8" width="5.8" height="1.5" fill="#ffff00"/>
<rect x="1060.3" y="337.9" width="5.8" height="1.5" fill="#ffff00"/>
<rect x="1082.7" y="337.9" width="5.8" height="1.5" fill="#ffff00"/>
<rect x="1060.3" y="339.9" width="5.8" height="1.5" fill="#ffff00"/>
<rect x="1082.7" y="339.9" width="5.8" height="1.5" fill="#ffff00"/>
<rect x="1060.3" y="342" width="5.8" height="1.5" fill="#ffff00"/>
<rect x="1082.7" y="342" width="5.8" height="1.5" fill="#ffff00"/>
<rect x="1060.3" y="344.1" width="5.8" height="1.5" fill="#ffff00"/>
<rect x="1082.7" y="344.1" width="5.8" height="1.5" fill="#ffff00"/>
<rect x="1060.3" y="346.2" width="5.8" height="1.5" fill="#ffff00"/>
<rect x="1082.7" y="346.2" width="5.8" height="1.5" fill="#ffff00"/>
<rect x="1060.3" y="348.2" width="5.8" height="1.5" fill="#ffff00"/>
<rect x="1082.7" y="348.2" width="5.8" height="1.5" fill="#ffff00"/>
<rect x="1060.3" y="350.3" width="5.8" height="1.5" fill="#ffff00"/>
<rect x="1082.7" y="350.3" width="5.8" height="1.5" fill="#ffff00"/>
<rect x="1060.3" y="352.4" width="5.8" height="1.5" fill="#ffff00"/>
<rect x="1082.7" y="352.4" width="5.8" height="1.5" fill="#ffff00"/>
<rect x="1060.3" y="354.5" width="5.8" height="1.5" fill="#ffff00"/>
<rect x="1082.7" y="354.5" width="5.8" height="1.5" fill="#ffff00"/>
<rect x="1060.3" y="356.5" width="5.8" height="1.5" fill="#ffff00"/>
<rect x="1082.7" y="356.5" width="5.8" height="1.5" fill="#ffff00"/>
<rect x="1060.3" y="358.6" width="5.8" height="1.5" fill="#ffff00"/>
<rect x="1082.7" y="358.6" width="5.8" height="1.5" fill="#ffff00"/>
<rect x="1060.3" y="360.7" width="5.8" height="1.5" fill="#ffff00"/>
<rect x="1082.7" y="360.7" width="5.8" height="1.5" fill="#ffff00"/>
<rect x="1060.3" y="362.8" width="5.8" height="1.5" fill="#ffff00"/>
<rect x="1082.7" y="362.8" width="5.8" height="1.5" fill="#ffff00"/>
<rect x="1060.3" y="364.9" width="5.8" height="1.5" fill="#ffff00"/>
<rect x="1082.7" y="364.9" width="5.8" height="1.5" fill="#ffff00"/>
<rect x="1060.3" y="366.9" width="5.8" height="1.5" fill="#ffff00"/>
<rect x="1082.7" y="366.9" width="5.8" height="1.5" fill="#ffff00"/>
<rect x="1060.3" y="369" width="5.8" height="1.5" fill="#ffff00"/>
<rect x="1082.7" y="369" width="5.8" height="1.5" fill="#ffff00"/>
<rect x="1060.3" y="371.1" width="5.8" height="1.5" fill="#ffff00"/>
<rect x="1082.7" y="371.1" width="5.8" height="1.5" fill="#ffff00"/>
<rect x="1060.3" y="373.2" width="5.8" height="1.5" fill="#ffff00"/>
<rect x="1082.7" y="373.2" width="5.8" height="1.5" fill="#ffff00"/>
<rect x="1060.3" y="375.2" width="5.8" height="1.5" fill="#ffff00"/>
<rect x="1082.7" y="375.2" width="5.8" height="1.5" fill="#ffff00"/>
<path d="M1063.2 307.7 V384 M1085.6 307.7 V384" fill="none" stroke="#d8a000" stroke-width="0.6" stroke-dasharray="1 1.400"/>
<text x="1077.6" y="345.9" font-size="8.8" fill="#6e6e6e" text-anchor="middle" transform="rotate(-90 1077.6 345.9)" letter-spacing="-.25">J6201</text>
<path d="M1067.5 479.5 V471.5 H1092.8 V479.5 M1067.5 546.6 V554.6 H1092.8 V546.6" fill="none" stroke="#e81414" stroke-width="1.2"/>
<path d="M1067.5 479.5 V546.6 M1092.8 479.5 V546.6" fill="none" stroke="#e89078" stroke-width="0.8"/>
<rect x="1065.5" y="475" width="5.8" height="76.1" fill="#ffff00" fill-opacity=".85"/>
<rect x="1064.9" y="475" width="7" height="6.5" fill="#ffff00" rx="1"/>
<rect x="1064.9" y="544.6" width="7" height="6.5" fill="#ffff00" rx="1"/>
<rect x="1089" y="475" width="5.8" height="76.1" fill="#ffff00" fill-opacity=".85"/>
<rect x="1088.4" y="475" width="7" height="6.5" fill="#ffff00" rx="1"/>
<rect x="1088.4" y="544.6" width="7" height="6.5" fill="#ffff00" rx="1"/>
<rect x="1065.5" y="482.3" width="5.8" height="1.4" fill="#ffff00"/>
<rect x="1089" y="482.3" width="5.8" height="1.4" fill="#ffff00"/>
<rect x="1065.5" y="484.2" width="5.8" height="1.4" fill="#ffff00"/>
<rect x="1089" y="484.2" width="5.8" height="1.4" fill="#ffff00"/>
<rect x="1065.5" y="486.2" width="5.8" height="1.4" fill="#ffff00"/>
<rect x="1089" y="486.2" width="5.8" height="1.4" fill="#ffff00"/>
<rect x="1065.5" y="488.1" width="5.8" height="1.4" fill="#ffff00"/>
<rect x="1089" y="488.1" width="5.8" height="1.4" fill="#ffff00"/>
<rect x="1065.5" y="490.1" width="5.8" height="1.4" fill="#ffff00"/>
<rect x="1089" y="490.1" width="5.8" height="1.4" fill="#ffff00"/>
<rect x="1065.5" y="492" width="5.8" height="1.4" fill="#ffff00"/>
<rect x="1089" y="492" width="5.8" height="1.4" fill="#ffff00"/>
<rect x="1065.5" y="493.9" width="5.8" height="1.4" fill="#ffff00"/>
<rect x="1089" y="493.9" width="5.8" height="1.4" fill="#ffff00"/>
<rect x="1065.5" y="495.9" width="5.8" height="1.4" fill="#ffff00"/>
<rect x="1089" y="495.9" width="5.8" height="1.4" fill="#ffff00"/>
<rect x="1065.5" y="497.8" width="5.8" height="1.4" fill="#ffff00"/>
<rect x="1089" y="497.8" width="5.8" height="1.4" fill="#ffff00"/>
<rect x="1065.5" y="499.8" width="5.8" height="1.4" fill="#ffff00"/>
<rect x="1089" y="499.8" width="5.8" height="1.4" fill="#ffff00"/>
<rect x="1065.5" y="501.7" width="5.8" height="1.4" fill="#ffff00"/>
<rect x="1089" y="501.7" width="5.8" height="1.4" fill="#ffff00"/>
<rect x="1065.5" y="503.6" width="5.8" height="1.4" fill="#ffff00"/>
<rect x="1089" y="503.6" width="5.8" height="1.4" fill="#ffff00"/>
<rect x="1065.5" y="505.6" width="5.8" height="1.4" fill="#ffff00"/>
<rect x="1089" y="505.6" width="5.8" height="1.4" fill="#ffff00"/>
<rect x="1065.5" y="507.5" width="5.8" height="1.4" fill="#ffff00"/>
<rect x="1089" y="507.5" width="5.8" height="1.4" fill="#ffff00"/>
<rect x="1065.5" y="509.5" width="5.8" height="1.4" fill="#ffff00"/>
<rect x="1089" y="509.5" width="5.8" height="1.4" fill="#ffff00"/>
<rect x="1065.5" y="511.4" width="5.8" height="1.4" fill="#ffff00"/>
<rect x="1089" y="511.4" width="5.8" height="1.4" fill="#ffff00"/>
<rect x="1065.5" y="513.3" width="5.8" height="1.4" fill="#ffff00"/>
<rect x="1089" y="513.3" width="5.8" height="1.4" fill="#ffff00"/>
<rect x="1065.5" y="515.3" width="5.8" height="1.4" fill="#ffff00"/>
<rect x="1089" y="515.3" width="5.8" height="1.4" fill="#ffff00"/>
<rect x="1065.5" y="517.2" width="5.8" height="1.4" fill="#ffff00"/>
<rect x="1089" y="517.2" width="5.8" height="1.4" fill="#ffff00"/>
<rect x="1065.5" y="519.2" width="5.8" height="1.4" fill="#ffff00"/>
<rect x="1089" y="519.2" width="5.8" height="1.4" fill="#ffff00"/>
<rect x="1065.5" y="521.1" width="5.8" height="1.4" fill="#ffff00"/>
<rect x="1089" y="521.1" width="5.8" height="1.4" fill="#ffff00"/>
<rect x="1065.5" y="523" width="5.8" height="1.4" fill="#ffff00"/>
<rect x="1089" y="523" width="5.8" height="1.4" fill="#ffff00"/>
<rect x="1065.5" y="525" width="5.8" height="1.4" fill="#ffff00"/>
<rect x="1089" y="525" width="5.8" height="1.4" fill="#ffff00"/>
<rect x="1065.5" y="526.9" width="5.8" height="1.4" fill="#ffff00"/>
<rect x="1089" y="526.9" width="5.8" height="1.4" fill="#ffff00"/>
<rect x="1065.5" y="528.9" width="5.8" height="1.4" fill="#ffff00"/>
<rect x="1089" y="528.9" width="5.8" height="1.4" fill="#ffff00"/>
<rect x="1065.5" y="530.8" width="5.8" height="1.4" fill="#ffff00"/>
<rect x="1089" y="530.8" width="5.8" height="1.4" fill="#ffff00"/>
<rect x="1065.5" y="532.7" width="5.8" height="1.4" fill="#ffff00"/>
<rect x="1089" y="532.7" width="5.8" height="1.4" fill="#ffff00"/>
<rect x="1065.5" y="534.7" width="5.8" height="1.4" fill="#ffff00"/>
<rect x="1089" y="534.7" width="5.8" height="1.4" fill="#ffff00"/>
<rect x="1065.5" y="536.6" width="5.8" height="1.4" fill="#ffff00"/>
<rect x="1089" y="536.6" width="5.8" height="1.4" fill="#ffff00"/>
<rect x="1065.5" y="538.6" width="5.8" height="1.4" fill="#ffff00"/>
<rect x="1089" y="538.6" width="5.8" height="1.4" fill="#ffff00"/>
<rect x="1065.5" y="540.5" width="5.8" height="1.4" fill="#ffff00"/>
<rect x="1089" y="540.5" width="5.8" height="1.4" fill="#ffff00"/>
<rect x="1065.5" y="542.5" width="5.8" height="1.4" fill="#ffff00"/>
<rect x="1089" y="542.5" width="5.8" height="1.4" fill="#ffff00"/>
<path d="M1068.4 475 V551.1 M1091.9 475 V551.1" fill="none" stroke="#d8a000" stroke-width="0.6" stroke-dasharray="1 1.400"/>
<text x="1083.4" y="513" font-size="8.8" fill="#6e6e6e" text-anchor="middle" transform="rotate(-90 1083.4 513)" letter-spacing="-.25">J6205</text>
<rect x="786" y="396.300" width="2.600" height="1.600" fill="#e81414"/><rect x="896.500" y="386.300" width="2.600" height="1.600" fill="#e81414"/><circle cx="1056.700" cy="318.800" r="1" fill="#e81414"/><circle cx="1062.500" cy="485.500" r="1" fill="#e81414"/>
<path d="M617.500 481 V460.700 H819.200 V469.400 H813.600 M819.200 460.700 H834.200 L857.800 465.900 L862.600 460.700 H895.700 V469.400 H900.400 M921 460.700 H956 " fill="none" stroke="#e81414" stroke-width="1.7"/>
<path d="M979.500 469.500 Q976.500 470.500 977.600 473 V483 Q974.500 484 975 486.500 H977.600 V512 Q973.500 512.500 974 516 H977.600 V572 Q970.500 572.500 971 576 H977.600 M977.600 584 Q971 585 971.500 588.500 H977.600 V596.600 H972.700 V606.500 H959 Q956.500 606.500 956.500 610" fill="none" stroke="#e81414" stroke-width="1.7"/>
<path d="M655.200 618.600 H934" fill="none" stroke="#e81414" stroke-width="1.7"/>
<path d="M617.500 481 H627.500 Q630 483.400 627 486 M617 483.400 Q610.400 483.400 610.400 490 V583 Q610.400 589.200 617 589.200 H661.200 L666.600 583.800 H678 L679.300 589.200 H696 L707.400 576.700 H759.600" fill="none" stroke="#e81414" stroke-width="1.7"/>
<path d="M620 483.400 H759 M760.300 483.400 V576.700 M757.800 486 V576" fill="none" stroke="#e81414" stroke-width="1.7"/>
<path d="M627 486 L630.400 531.300 L634 532.500 V546.500 L630.400 547.500 L627.200 586 Q627 589 624 589.200" fill="none" stroke="#e81414" stroke-width="1.7"/>
<path d="M760.300 505 L758 507 V513 L760.300 515 M760.300 526 L758 528 V534 L761.500 538 L758 546 L760.300 548" fill="none" stroke="#e81414" stroke-width="1.7"/>
<path d="M617.500 591 V606.500 M617.500 606.800 H650 V603 Q650 601.800 652 601.800 H654 Q655.400 601.800 655.400 603 V618.600" fill="none" stroke="#e81414" stroke-width="1.7"/>
<path d="M615.500 633 V613 Q615.500 607.800 621 607.800 H629 L633 611.500 L638 607.800 H650 M650 611 H641 L636 615.500 H655 M655 618.600 H638.500 L641 612 M615.500 633 H620.500 V614.500 Q620.500 612 623 612 H626.500 Q629.500 612 629.500 615 V633 H634.500 V616" fill="none" stroke="#e81414" stroke-width="1.7"/>
<rect x="692.7" y="496.5" width="8" height="5" fill="#ffff00"/>
<rect x="692.7" y="506.5" width="8" height="5" fill="#ffff00"/>
<rect x="689" y="517" width="8" height="5" fill="#ffff00"/>
<rect x="689" y="527" width="8" height="5" fill="#ffff00"/>
<rect x="692.7" y="548" width="8" height="5" fill="#ffff00"/>
<rect x="692.7" y="559" width="8" height="5" fill="#ffff00"/>
<rect x="759.5" y="484.5" width="6" height="7" fill="#ffff00" rx="1.5"/>
<rect x="759.5" y="506" width="6" height="7" fill="#ffff00" rx="1.5"/>
<rect x="759.5" y="526" width="6" height="7" fill="#ffff00" rx="1.5"/>
<rect x="759.5" y="547" width="6" height="7" fill="#ffff00" rx="1.5"/>
<rect x="759.5" y="569" width="6" height="7" fill="#ffff00" rx="1.5"/>
<path d="M770.2 474.3 H845.9 Q850.9 474.3 850.9 479.3 V578.6 L834.9 592.6 H770.2 Q765.2 592.6 765.2 587.6 V479.3 Q765.2 474.3 770.2 474.3 Z" fill="none" stroke="#e81414" stroke-width="1.3"/>
<circle cx="783.3" cy="490.1" r="6.2" fill="none" stroke="#ee3030" stroke-width="0.7"/>
<rect x="778.5" y="491.8" width="9.6" height="4.6" fill="#ff9090" fill-opacity=".55"/>
<path d="M777.3 491.6 H789.3 M777.8 493.1 H788.8 M779.3 489.1 L787.3 495.1 M787.3 489.1 L779.3 495.1 M778.3 491.6 V496.6 H788.3 V491.6" fill="none" stroke="#ee3030" stroke-width="0.7"/>
<circle cx="783.3" cy="570.6" r="6.2" fill="none" stroke="#ee3030" stroke-width="0.7"/>
<rect x="778.5" y="564.3" width="9.6" height="4.6" fill="#ff9090" fill-opacity=".55"/>
<path d="M777.3 569.1 H789.3 M777.8 567.6 H788.8 M779.3 571.6 L787.3 565.6 M787.3 571.6 L779.3 565.6 M778.3 569.1 V564.1 H788.3 V569.1" fill="none" stroke="#ee3030" stroke-width="0.7"/>
<circle cx="807.7" cy="490.1" r="6.2" fill="none" stroke="#ee3030" stroke-width="0.7"/>
<rect x="802.9" y="491.8" width="9.6" height="4.6" fill="#ff9090" fill-opacity=".55"/>
<path d="M801.7 491.6 H813.7 M802.2 493.1 H813.2 M803.7 489.1 L811.7 495.1 M811.7 489.1 L803.7 495.1 M802.7 491.6 V496.6 H812.7 V491.6" fill="none" stroke="#ee3030" stroke-width="0.7"/>
<circle cx="807.7" cy="570.6" r="6.2" fill="none" stroke="#ee3030" stroke-width="0.7"/>
<rect x="802.9" y="564.3" width="9.6" height="4.6" fill="#ff9090" fill-opacity=".55"/>
<path d="M801.7 569.1 H813.7 M802.2 567.6 H813.2 M803.7 571.6 L811.7 565.6 M811.7 571.6 L803.7 565.6 M802.7 569.1 V564.1 H812.7 V569.1" fill="none" stroke="#ee3030" stroke-width="0.7"/>
<circle cx="831.9" cy="490.1" r="6.2" fill="none" stroke="#ee3030" stroke-width="0.7"/>
<rect x="827.1" y="491.8" width="9.6" height="4.6" fill="#ff9090" fill-opacity=".55"/>
<path d="M825.9 491.6 H837.9 M826.4 493.1 H837.4 M827.9 489.1 L835.9 495.1 M835.9 489.1 L827.9 495.1 M826.9 491.6 V496.6 H836.9 V491.6" fill="none" stroke="#ee3030" stroke-width="0.7"/>
<circle cx="831.9" cy="570.6" r="6.2" fill="none" stroke="#ee3030" stroke-width="0.7"/>
<rect x="827.1" y="564.3" width="9.6" height="4.6" fill="#ff9090" fill-opacity=".55"/>
<path d="M825.9 569.1 H837.9 M826.4 567.6 H837.4 M827.9 571.6 L835.9 565.6 M835.9 571.6 L827.9 565.6 M826.9 569.1 V564.1 H836.9 V569.1" fill="none" stroke="#ee3030" stroke-width="0.7"/>
<path d="M769.5 505 H774.5 V514.3 H840.9 V505 H845.9 V524.6 l-1.5 1.5 v9 l1.5 1.5 V556.2 H840.9 V546.9 H774.5 V556.2 H769.5 V536.6 l1.5 -1.5 v-9 l-1.5 -1.5 Z" fill="none" stroke="#e81414" stroke-width="1.7"/>
<rect x="770.5" y="498" width="10" height="9.5" fill="none" stroke="#ee3030" stroke-width="0.7"/>
<rect x="834.9" y="498" width="10" height="9.5" fill="none" stroke="#ee3030" stroke-width="0.7"/>
<rect x="785.7" y="498" width="44" height="9.5" fill="none" stroke="#ee3030" stroke-width="0.7"/>
<rect x="788.7" y="500.7" width="17" height="4" fill="#ffd0d0" stroke="#ee3030" stroke-width="0.8" rx="2"/>
<path d="M791.7 501 l10 3.500 M791.7 504.5 l10 -3.500" fill="none" stroke="#ee3030" stroke-width="0.7"/>
<rect x="809.7" y="500.7" width="17" height="4" fill="#ffd0d0" stroke="#ee3030" stroke-width="0.8" rx="2"/>
<path d="M812.7 501 l10 3.500 M812.7 504.5 l10 -3.500" fill="none" stroke="#ee3030" stroke-width="0.7"/>
<rect x="770.5" y="553.7" width="10" height="9.5" fill="none" stroke="#ee3030" stroke-width="0.7"/>
<rect x="834.9" y="553.7" width="10" height="9.5" fill="none" stroke="#ee3030" stroke-width="0.7"/>
<rect x="785.7" y="553.7" width="44" height="9.5" fill="none" stroke="#ee3030" stroke-width="0.7"/>
<rect x="788.7" y="556.4" width="17" height="4" fill="#ffd0d0" stroke="#ee3030" stroke-width="0.8" rx="2"/>
<path d="M791.7 556.7 l10 3.500 M791.7 560.2 l10 -3.500" fill="none" stroke="#ee3030" stroke-width="0.7"/>
<rect x="809.7" y="556.4" width="17" height="4" fill="#ffd0d0" stroke="#ee3030" stroke-width="0.8" rx="2"/>
<path d="M812.7 556.7 l10 3.500 M812.7 560.2 l10 -3.500" fill="none" stroke="#ee3030" stroke-width="0.7"/>
<rect x="788.7" y="517.3" width="37" height="3.5" fill="none" stroke="#ee3030" stroke-width="0.7" rx="1.7"/>
<rect x="788.7" y="540.4" width="37" height="3.5" fill="none" stroke="#ee3030" stroke-width="0.7" rx="1.7"/>
<path d="M796.7 502 V520.3 M800.7 502 V520.3 M814.7 502 V520.3 M818.7 502 V520.3 M806.7 502 V517.3 M808.7 502 V517.3" fill="none" stroke="#ee3030" stroke-width="0.7"/>
<path d="M796.7 559.2 V540.9 M800.7 559.2 V540.9 M814.7 559.2 V540.9 M818.7 559.2 V540.9 M806.7 559.2 V543.9 M808.7 559.2 V543.9" fill="none" stroke="#ee3030" stroke-width="0.7"/>
<rect x="775.2" y="521.6" width="4.2" height="5.2" fill="#ffff00"/>
<rect x="786.2" y="523.6" width="4.2" height="5.2" fill="#ffff00"/>
<rect x="780.7" y="531.1" width="4.2" height="5.2" fill="#ffff00"/>
<rect x="775.7" y="533.6" width="4.2" height="5.2" fill="#ffff00"/>
<rect x="796.7" y="532.1" width="4.2" height="5.2" fill="#ffff00"/>
<rect x="812.7" y="522.6" width="4.2" height="5.2" fill="#ffff00"/>
<rect x="822.7" y="532.1" width="4.2" height="5.2" fill="#ffff00"/>
<rect x="829.7" y="522.6" width="4.2" height="5.2" fill="#ffff00"/>
<rect x="834.7" y="520.6" width="4.2" height="5.2" fill="#ffff00"/>
<rect x="835.7" y="533.6" width="4.2" height="5.2" fill="#ffff00"/>
<rect x="779.7" y="527.1" width="4.2" height="5.2" fill="#ffff00"/>
<text x="810.9" y="530.6" font-size="8.8" fill="#6e6e6e" text-anchor="middle" transform="rotate(-90 810.9 530.6)" letter-spacing="-.3">J6502</text>
<path d="M875.3 474.3 H940 Q945 474.3 945 479.3 V587.6 Q945 592.6 940 592.6 H864.3 Q859.3 592.6 859.3 587.6 V489.3 Z" fill="none" stroke="#e81414" stroke-width="1.3"/>
<circle cx="877.9" cy="496.7" r="6.2" fill="none" stroke="#ee3030" stroke-width="0.7"/>
<rect x="873.1" y="498.4" width="9.6" height="4.6" fill="#ff9090" fill-opacity=".55"/>
<path d="M871.9 498.2 H883.9 M872.4 499.7 H883.4 M873.9 495.7 L881.9 501.7 M881.9 495.7 L873.9 501.7 M872.9 498.2 V503.2 H882.9 V498.2" fill="none" stroke="#ee3030" stroke-width="0.7"/>
<circle cx="877.9" cy="576.7" r="6.2" fill="none" stroke="#ee3030" stroke-width="0.7"/>
<rect x="873.1" y="570.4" width="9.6" height="4.6" fill="#ff9090" fill-opacity=".55"/>
<path d="M871.9 575.2 H883.9 M872.4 573.7 H883.4 M873.9 577.7 L881.9 571.7 M881.9 577.7 L873.9 571.7 M872.9 575.2 V570.2 H882.9 V575.2" fill="none" stroke="#ee3030" stroke-width="0.7"/>
<circle cx="902.1" cy="496.7" r="6.2" fill="none" stroke="#ee3030" stroke-width="0.7"/>
<rect x="897.3" y="498.4" width="9.6" height="4.6" fill="#ff9090" fill-opacity=".55"/>
<path d="M896.1 498.2 H908.1 M896.6 499.7 H907.6 M898.1 495.7 L906.1 501.7 M906.1 495.7 L898.1 501.7 M897.1 498.2 V503.2 H907.1 V498.2" fill="none" stroke="#ee3030" stroke-width="0.7"/>
<circle cx="902.1" cy="576.7" r="6.2" fill="none" stroke="#ee3030" stroke-width="0.7"/>
<rect x="897.3" y="570.4" width="9.6" height="4.6" fill="#ff9090" fill-opacity=".55"/>
<path d="M896.1 575.2 H908.1 M896.6 573.7 H907.6 M898.1 577.7 L906.1 571.7 M906.1 577.7 L898.1 571.7 M897.1 575.2 V570.2 H907.1 V575.2" fill="none" stroke="#ee3030" stroke-width="0.7"/>
<circle cx="926.3" cy="496.7" r="6.2" fill="none" stroke="#ee3030" stroke-width="0.7"/>
<rect x="921.5" y="498.4" width="9.6" height="4.6" fill="#ff9090" fill-opacity=".55"/>
<path d="M920.3 498.2 H932.3 M920.8 499.7 H931.8 M922.3 495.7 L930.3 501.7 M930.3 495.7 L922.3 501.7 M921.3 498.2 V503.2 H931.3 V498.2" fill="none" stroke="#ee3030" stroke-width="0.7"/>
<circle cx="926.3" cy="576.7" r="6.2" fill="none" stroke="#ee3030" stroke-width="0.7"/>
<rect x="921.5" y="570.4" width="9.6" height="4.6" fill="#ff9090" fill-opacity=".55"/>
<path d="M920.3 575.2 H932.3 M920.8 573.7 H931.8 M922.3 577.7 L930.3 571.7 M930.3 577.7 L922.3 571.7 M921.3 575.2 V570.2 H931.3 V575.2" fill="none" stroke="#ee3030" stroke-width="0.7"/>
<path d="M863.9 510.6 H868.9 V520.3 H935.8 V510.6 H940.8 V530.2 l-1.5 1.5 v9 l1.5 1.5 V561.8 H935.8 V552.5 H868.9 V561.8 H863.9 V542.2 l1.5 -1.5 v-9 l-1.5 -1.5 Z" fill="none" stroke="#e81414" stroke-width="1.7"/>
<rect x="864.9" y="503.6" width="10" height="9.5" fill="none" stroke="#ee3030" stroke-width="0.7"/>
<rect x="929.8" y="503.6" width="10" height="9.5" fill="none" stroke="#ee3030" stroke-width="0.7"/>
<rect x="880.3" y="503.6" width="44" height="9.5" fill="none" stroke="#ee3030" stroke-width="0.7"/>
<rect x="883.3" y="506.3" width="17" height="4" fill="#ffd0d0" stroke="#ee3030" stroke-width="0.8" rx="2"/>
<path d="M886.3 506.6 l10 3.500 M886.3 510.1 l10 -3.500" fill="none" stroke="#ee3030" stroke-width="0.7"/>
<rect x="904.3" y="506.3" width="17" height="4" fill="#ffd0d0" stroke="#ee3030" stroke-width="0.8" rx="2"/>
<path d="M907.3 506.6 l10 3.500 M907.3 510.1 l10 -3.500" fill="none" stroke="#ee3030" stroke-width="0.7"/>
<rect x="864.9" y="559.3" width="10" height="9.5" fill="none" stroke="#ee3030" stroke-width="0.7"/>
<rect x="929.8" y="559.3" width="10" height="9.5" fill="none" stroke="#ee3030" stroke-width="0.7"/>
<rect x="880.3" y="559.3" width="44" height="9.5" fill="none" stroke="#ee3030" stroke-width="0.7"/>
<rect x="883.3" y="562" width="17" height="4" fill="#ffd0d0" stroke="#ee3030" stroke-width="0.8" rx="2"/>
<path d="M886.3 562.3 l10 3.500 M886.3 565.8 l10 -3.500" fill="none" stroke="#ee3030" stroke-width="0.7"/>
<rect x="904.3" y="562" width="17" height="4" fill="#ffd0d0" stroke="#ee3030" stroke-width="0.8" rx="2"/>
<path d="M907.3 562.3 l10 3.500 M907.3 565.8 l10 -3.500" fill="none" stroke="#ee3030" stroke-width="0.7"/>
<rect x="883.3" y="523.3" width="37" height="3.5" fill="none" stroke="#ee3030" stroke-width="0.7" rx="1.7"/>
<rect x="883.3" y="546" width="37" height="3.5" fill="none" stroke="#ee3030" stroke-width="0.7" rx="1.7"/>
<path d="M891.3 507.6 V526.3 M895.3 507.6 V526.3 M909.3 507.6 V526.3 M913.3 507.6 V526.3 M901.3 507.6 V523.3 M903.3 507.6 V523.3" fill="none" stroke="#ee3030" stroke-width="0.7"/>
<path d="M891.3 564.8 V546.5 M895.3 564.8 V546.5 M909.3 564.8 V546.5 M913.3 564.8 V546.5 M901.3 564.8 V549.5 M903.3 564.8 V549.5" fill="none" stroke="#ee3030" stroke-width="0.7"/>
<rect x="869.8" y="527.4" width="4.2" height="5.2" fill="#ffff00"/>
<rect x="880.8" y="529.4" width="4.2" height="5.2" fill="#ffff00"/>
<rect x="875.3" y="536.9" width="4.2" height="5.2" fill="#ffff00"/>
<rect x="870.3" y="539.4" width="4.2" height="5.2" fill="#ffff00"/>
<rect x="891.3" y="537.9" width="4.2" height="5.2" fill="#ffff00"/>
<rect x="907.3" y="528.4" width="4.2" height="5.2" fill="#ffff00"/>
<rect x="917.3" y="537.9" width="4.2" height="5.2" fill="#ffff00"/>
<rect x="924.3" y="528.4" width="4.2" height="5.2" fill="#ffff00"/>
<rect x="929.3" y="526.4" width="4.2" height="5.2" fill="#ffff00"/>
<rect x="930.3" y="539.4" width="4.2" height="5.2" fill="#ffff00"/>
<rect x="874.3" y="532.9" width="4.2" height="5.2" fill="#ffff00"/>
<text x="905.5" y="536.4" font-size="8.8" fill="#6e6e6e" text-anchor="middle" transform="rotate(-90 905.5 536.4)" letter-spacing="-.3">J6501</text>
<rect x="669" y="307.8" width="10.4" height="5.2" fill="#ffff00" stroke="#eea070" stroke-width="0.5"/>
<text x="674.2" y="311.6" font-size="3.2" fill="#3a3200" text-anchor="middle" font-weight="bold">L5005</text>
<circle cx="683.3" cy="311.5" r="1.1" fill="#e81414"/>
<path d="M668 314 H686 L691 319 V329 L686 334 H668 L663 329 V319 Z" fill="#ffff00" stroke="none" stroke-width="1.2"/>
<rect x="660.5" y="320.5" width="33" height="7.5" fill="#ffff00"/>
<rect x="672" y="318.5" width="10" height="11" fill="#fff"/>
<path d="M666.500 316 H688 V332.500 H666.500 Z" fill="none" stroke="#e81414" stroke-width="1.1" stroke-dasharray="2.200 3.600"/>
<text x="677" y="325.6" font-size="3.4" fill="#446" text-anchor="middle" font-weight="bold">U5002</text>
<rect x="688" y="307.6" width="11.5" height="5" fill="#ffff00" stroke="#eea070" stroke-width="0.5"/>
<text x="693.8" y="311.4" font-size="3.6" fill="#3a3200" text-anchor="middle" font-weight="bold">L5023</text>
<rect x="688" y="313.4" width="11.5" height="4.6" fill="#ffff00" stroke="#eea070" stroke-width="0.5"/>
<text x="693.8" y="317" font-size="3.6" fill="#3a3200" text-anchor="middle" font-weight="bold">C5023</text>
<rect x="693.5" y="318.8" width="6" height="9.7" fill="#ffff00" stroke="#eea070" stroke-width="0.5"/>
<text x="696.5" y="324.7" font-size="3" fill="#3a3200" text-anchor="middle" transform="rotate(-90 696.5 324.7)" font-weight="bold">L3434</text>
<rect x="689" y="329.3" width="11" height="4.5" fill="#ffff00" stroke="#eea070" stroke-width="0.5"/>
<text x="694.5" y="332.8" font-size="3.4" fill="#3a3200" text-anchor="middle" font-weight="bold">C3438</text>
<rect x="700.8" y="308" width="12" height="21.5" fill="#ffff00" stroke="#e81414" stroke-width="1.5"/>
<rect x="703" y="313.5" width="7.6" height="9.5" fill="#fff"/>
<text x="707" y="318.5" font-size="3.3" fill="#446" text-anchor="middle" transform="rotate(-90 707 318.5)" font-weight="bold">U5001</text>
<path d="M703.500 304 H709.500 M706.500 301.500 V307.500" fill="none" stroke="#e81414" stroke-width="1.2"/>
<text x="716.3" y="320" font-size="3.2" fill="#3a3200" text-anchor="middle" transform="rotate(-90 716.3 320)" font-weight="bold">R5006C5301</text>
<rect x="720.4" y="307.8" width="14" height="8.2" fill="#ffff00" stroke="#eea070" stroke-width="0.5"/>
<text x="727.4" y="313.4" font-size="4.2" fill="#3a3200" text-anchor="middle" font-weight="bold">B6003</text>
<rect x="720.4" y="316.8" width="14" height="7.8" fill="#ffff00" stroke="#eea070" stroke-width="0.5"/>
<text x="727.4" y="322.2" font-size="4.2" fill="#3a3200" text-anchor="middle" font-weight="bold">B6002</text>
<rect x="724" y="325.6" width="11" height="4.7" fill="#ffff00"/>
<text x="729.5" y="329.2" font-size="3.4" fill="#3a3200" text-anchor="middle" font-weight="bold">R6001</text>
<text x="737.6" y="319" font-size="3.2" fill="#3a3200" text-anchor="middle" transform="rotate(-90 737.6 319)" font-weight="bold">R5006C5003</text>
<rect x="740" y="308" width="10.4" height="5.4" fill="#ffff00" stroke="#eea070" stroke-width="0.5"/>
<text x="745.2" y="311.8" font-size="3.2" fill="#3a3200" text-anchor="middle" font-weight="bold">R2235</text>
<rect x="740" y="314" width="10.4" height="5.4" fill="#ffff00" stroke="#eea070" stroke-width="0.5"/>
<text x="745.2" y="317.8" font-size="3.2" fill="#3a3200" text-anchor="middle" font-weight="bold">L6332</text>
<rect x="740" y="319.9" width="10.4" height="5.4" fill="#ffff00" stroke="#eea070" stroke-width="0.5"/>
<text x="745.2" y="323.8" font-size="3.2" fill="#3a3200" text-anchor="middle" font-weight="bold">C1593</text>
<rect x="740" y="325.9" width="10.4" height="5.4" fill="#ffff00" stroke="#eea070" stroke-width="0.5"/>
<text x="745.2" y="329.8" font-size="3.2" fill="#3a3200" text-anchor="middle" font-weight="bold">C3995</text>
<rect x="641.6" y="347.6" width="4.4" height="10.2" fill="#ffff00" stroke="#eea070" stroke-width="0.5"/>
<text x="643.8" y="353.8" font-size="3.2" fill="#3a3200" text-anchor="middle" transform="rotate(-90 643.8 353.8)" font-weight="bold">C5156</text>
<rect x="647.3" y="347.6" width="4.3" height="10.2" fill="#ffff00" stroke="#eea070" stroke-width="0.5"/>
<text x="649.5" y="353.8" font-size="3.2" fill="#3a3200" text-anchor="middle" transform="rotate(-90 649.5 353.8)" font-weight="bold">C1307</text>
<rect x="652.8" y="347.6" width="4.2" height="10.2" fill="#ffff00" stroke="#eea070" stroke-width="0.5"/>
<text x="654.9" y="353.8" font-size="3.2" fill="#3a3200" text-anchor="middle" transform="rotate(-90 654.9 353.8)" font-weight="bold">C4552</text>
<rect x="658" y="348" width="12" height="10" fill="#ffff00" stroke="#eea070" stroke-width="0.5"/>
<text x="664" y="354.3" font-size="3.7" fill="#3a3200" text-anchor="middle" font-weight="bold">U5004</text>
<path d="M667 348 H670.500 V358 H667" fill="none" stroke="#e81414" stroke-width="1.5"/>
<rect x="672" y="347.6" width="4.4" height="10.2" fill="#ffff00" stroke="#eea070" stroke-width="0.5"/>
<text x="674.2" y="353.8" font-size="3.2" fill="#3a3200" text-anchor="middle" transform="rotate(-90 674.2 353.8)" font-weight="bold">L1572</text>
<rect x="677.5" y="347.6" width="4.4" height="10.2" fill="#ffff00" stroke="#eea070" stroke-width="0.5"/>
<text x="679.7" y="353.8" font-size="3.2" fill="#3a3200" text-anchor="middle" transform="rotate(-90 679.7 353.8)" font-weight="bold">C1743</text>
<rect x="683" y="347.6" width="4.3" height="10.2" fill="#ffff00" stroke="#eea070" stroke-width="0.5"/>
<text x="685.1" y="353.8" font-size="3.2" fill="#3a3200" text-anchor="middle" transform="rotate(-90 685.1 353.8)" font-weight="bold">L1484</text>
<rect x="688.5" y="347.6" width="4.3" height="10.2" fill="#ffff00" stroke="#eea070" stroke-width="0.5"/>
<text x="690.6" y="353.8" font-size="3.2" fill="#3a3200" text-anchor="middle" transform="rotate(-90 690.6 353.8)" font-weight="bold">C2828</text>
<rect x="694" y="347.6" width="4.3" height="10.2" fill="#ffff00" stroke="#eea070" stroke-width="0.5"/>
<text x="696.1" y="353.8" font-size="3.2" fill="#3a3200" text-anchor="middle" transform="rotate(-90 696.1 353.8)" font-weight="bold">C5727</text>
<rect x="641.6" y="359.7" width="4.4" height="7.6" fill="#ffff00" stroke="#eea070" stroke-width="0.5"/>
<text x="643.8" y="364.5" font-size="2.9" fill="#3a3200" text-anchor="middle" transform="rotate(-90 643.8 364.5)" font-weight="bold">L1406</text>
<rect x="647.2" y="359.7" width="4.3" height="7.6" fill="#ffff00" stroke="#eea070" stroke-width="0.5"/>
<text x="649.4" y="364.5" font-size="2.9" fill="#3a3200" text-anchor="middle" transform="rotate(-90 649.4 364.5)" font-weight="bold">C1381</text>
<rect x="653.4" y="359.7" width="4.4" height="7.6" fill="#ffff00" stroke="#eea070" stroke-width="0.5"/>
<text x="655.6" y="364.5" font-size="2.9" fill="#3a3200" text-anchor="middle" transform="rotate(-90 655.6 364.5)" font-weight="bold">C3372</text>
<rect x="659.3" y="359.7" width="4.4" height="7.6" fill="#ffff00" stroke="#eea070" stroke-width="0.5"/>
<text x="661.5" y="364.5" font-size="2.9" fill="#3a3200" text-anchor="middle" transform="rotate(-90 661.5 364.5)" font-weight="bold">L2181</text>
<rect x="665.2" y="359.7" width="4.4" height="7.6" fill="#ffff00" stroke="#eea070" stroke-width="0.5"/>
<text x="667.4" y="364.5" font-size="2.9" fill="#3a3200" text-anchor="middle" transform="rotate(-90 667.4 364.5)" font-weight="bold">C5676</text>
<rect x="671.5" y="359.2" width="14.8" height="7" fill="#ffff00" stroke="#eea070" stroke-width="0.5"/>
<text x="678.9" y="364.2" font-size="4.2" fill="#3a3200" text-anchor="middle" font-weight="bold">C5306</text>
<rect x="687.3" y="360" width="10.2" height="5.2" fill="#ffff00" stroke="#eea070" stroke-width="0.5"/>
<text x="692.4" y="363.7" font-size="3.2" fill="#3a3200" text-anchor="middle" font-weight="bold">C5005</text>
<rect x="640.5" y="370" width="11" height="9.2" fill="#ffff00" stroke="#eea070" stroke-width="0.5"/>
<text x="646" y="375.8" font-size="3.4" fill="#3a3200" text-anchor="middle" font-weight="bold">R5006</text>
<path d="M644 369.500 H640 V379.700 H644" fill="none" stroke="#e81414" stroke-width="1.5"/>
<rect x="653.4" y="368.7" width="4.4" height="10.8" fill="#ffff00" stroke="#eea070" stroke-width="0.5"/>
<text x="655.6" y="375.3" font-size="3.3" fill="#3a3200" text-anchor="middle" transform="rotate(-90 655.6 375.3)" font-weight="bold">R5589</text>
<rect x="659.3" y="368.7" width="4.4" height="10.8" fill="#ffff00" stroke="#eea070" stroke-width="0.5"/>
<text x="661.5" y="375.3" font-size="3.3" fill="#3a3200" text-anchor="middle" transform="rotate(-90 661.5 375.3)" font-weight="bold">C1844</text>
<rect x="665.2" y="368.7" width="4.4" height="10.8" fill="#ffff00" stroke="#eea070" stroke-width="0.5"/>
<text x="667.4" y="375.3" font-size="3.3" fill="#3a3200" text-anchor="middle" transform="rotate(-90 667.4 375.3)" font-weight="bold">C4050</text>
<rect x="670.6" y="368.7" width="10.4" height="10.5" fill="#ffff00" stroke="#eea070" stroke-width="0.5"/>
<text x="675.8" y="375.1" font-size="3.3" fill="#3a3200" text-anchor="middle" font-weight="bold">C3401</text>
<rect x="683.6" y="369" width="9" height="6" fill="#ffff00" stroke="#eea070" stroke-width="0.5"/>
<text x="688.1" y="373" font-size="2.9" fill="#3a3200" text-anchor="middle" font-weight="bold">L3434</text>
<rect x="683.6" y="375.8" width="9" height="4.8" fill="#ffff00" stroke="#eea070" stroke-width="0.5"/>
<text x="688.1" y="379.2" font-size="2.9" fill="#3a3200" text-anchor="middle" font-weight="bold">C3406</text>
<rect x="694" y="369" width="4.3" height="11.6" fill="#ffff00" stroke="#eea070" stroke-width="0.5"/>
<text x="696.1" y="376" font-size="3.4" fill="#3a3200" text-anchor="middle" transform="rotate(-90 696.1 376)" font-weight="bold">C5487</text>
<rect x="639.5" y="382" width="9.2" height="4.7" fill="#ffff00" stroke="#eea070" stroke-width="0.5"/>
<text x="644.1" y="385.4" font-size="2.9" fill="#3a3200" text-anchor="middle" font-weight="bold">C5019</text>
<rect x="639.5" y="387.3" width="9.2" height="3.9" fill="#ffff00"/>
<text x="644.1" y="390.3" font-size="2.9" fill="#3a3200" text-anchor="middle" font-weight="bold">L5007</text>
<rect x="650" y="381.8" width="13.2" height="8" fill="#ffff00" stroke="#eea070" stroke-width="0.5"/>
<text x="656.6" y="387.3" font-size="4.1" fill="#3a3200" text-anchor="middle" font-weight="bold">B5001</text>
<rect x="666" y="381" width="15" height="10" fill="#ffff00" stroke="#e81414" stroke-width="1.4" rx="2"/>
<path d="M668 379.500 Q670 376.500 672.500 379.500 M675 379.500 Q677.500 376.500 680 379.500" fill="none" stroke="#e81414" stroke-width="1.3"/>
<text x="673.5" y="387.2" font-size="3.4" fill="#446" text-anchor="middle" font-weight="bold">U5001</text>
<rect x="683" y="381.5" width="4.3" height="9.5" fill="#ffff00" stroke="#eea070" stroke-width="0.5"/>
<text x="685.1" y="387.3" font-size="2.9" fill="#3a3200" text-anchor="middle" transform="rotate(-90 685.1 387.3)" font-weight="bold">C5623</text>
<rect x="688.5" y="381.5" width="4.3" height="9.5" fill="#ffff00" stroke="#eea070" stroke-width="0.5"/>
<text x="690.6" y="387.3" font-size="2.9" fill="#3a3200" text-anchor="middle" transform="rotate(-90 690.6 387.3)" font-weight="bold">C6070</text>
<rect x="694" y="381.5" width="4.3" height="9.5" fill="#ffff00" stroke="#eea070" stroke-width="0.5"/>
<text x="696.1" y="387.3" font-size="2.9" fill="#3a3200" text-anchor="middle" transform="rotate(-90 696.1 387.3)" font-weight="bold">C5066</text>
<rect x="639.5" y="392.4" width="9.4" height="4" fill="#ffff00" stroke="#eea070" stroke-width="0.5"/>
<text x="644.2" y="395.5" font-size="2.9" fill="#3a3200" text-anchor="middle" font-weight="bold">L3573</text>
<rect x="649.4" y="392.4" width="9.4" height="4" fill="#ffff00" stroke="#eea070" stroke-width="0.5"/>
<text x="654.1" y="395.5" font-size="2.9" fill="#3a3200" text-anchor="middle" font-weight="bold">L5796</text>
<rect x="659.3" y="392.4" width="9.4" height="4" fill="#ffff00" stroke="#eea070" stroke-width="0.5"/>
<text x="664" y="395.5" font-size="2.9" fill="#3a3200" text-anchor="middle" font-weight="bold">L3962</text>
<rect x="669.2" y="392.4" width="9.4" height="4" fill="#ffff00" stroke="#eea070" stroke-width="0.5"/>
<text x="674" y="395.5" font-size="2.9" fill="#3a3200" text-anchor="middle" font-weight="bold">R3035</text>
<rect x="679.2" y="392.4" width="9.4" height="4" fill="#ffff00" stroke="#eea070" stroke-width="0.5"/>
<text x="683.9" y="395.5" font-size="2.9" fill="#3a3200" text-anchor="middle" font-weight="bold">C6726</text>
<rect x="689.1" y="392.4" width="9.4" height="4" fill="#ffff00" stroke="#eea070" stroke-width="0.5"/>
<text x="693.8" y="395.5" font-size="2.9" fill="#3a3200" text-anchor="middle" font-weight="bold">C1670</text>
<rect x="700.5" y="340.8" width="54.7" height="55.2" fill="#ffffc0"/>
<rect x="709.8" y="340.8" width="1.5" height="6.2" fill="#ffff00"/>
<rect x="709.8" y="389.7" width="1.5" height="6.3" fill="#ffff00"/>
<rect x="712.1" y="340.8" width="1.5" height="6.2" fill="#ffff00"/>
<rect x="712.1" y="389.7" width="1.5" height="6.3" fill="#ffff00"/>
<rect x="714.4" y="340.8" width="1.5" height="6.2" fill="#ffff00"/>
<rect x="714.4" y="389.7" width="1.5" height="6.3" fill="#ffff00"/>
<rect x="716.7" y="340.8" width="1.5" height="6.2" fill="#ffff00"/>
<rect x="716.7" y="389.7" width="1.5" height="6.3" fill="#ffff00"/>
<rect x="719" y="340.8" width="1.5" height="6.2" fill="#ffff00"/>
<rect x="719" y="389.7" width="1.5" height="6.3" fill="#ffff00"/>
<rect x="721.3" y="340.8" width="1.5" height="6.2" fill="#ffff00"/>
<rect x="721.3" y="389.7" width="1.5" height="6.3" fill="#ffff00"/>
<rect x="723.7" y="340.8" width="1.5" height="6.2" fill="#ffff00"/>
<rect x="723.7" y="389.7" width="1.5" height="6.3" fill="#ffff00"/>
<rect x="726" y="340.8" width="1.5" height="6.2" fill="#ffff00"/>
<rect x="726" y="389.7" width="1.5" height="6.3" fill="#ffff00"/>
<rect x="728.3" y="340.8" width="1.5" height="6.2" fill="#ffff00"/>
<rect x="728.3" y="389.7" width="1.5" height="6.3" fill="#ffff00"/>
<rect x="730.6" y="340.8" width="1.5" height="6.2" fill="#ffff00"/>
<rect x="730.6" y="389.7" width="1.5" height="6.3" fill="#ffff00"/>
<rect x="732.9" y="340.8" width="1.5" height="6.2" fill="#ffff00"/>
<rect x="732.9" y="389.7" width="1.5" height="6.3" fill="#ffff00"/>
<rect x="735.2" y="340.8" width="1.5" height="6.2" fill="#ffff00"/>
<rect x="735.2" y="389.7" width="1.5" height="6.3" fill="#ffff00"/>
<rect x="737.5" y="340.8" width="1.5" height="6.2" fill="#ffff00"/>
<rect x="737.5" y="389.7" width="1.5" height="6.3" fill="#ffff00"/>
<rect x="739.8" y="340.8" width="1.5" height="6.2" fill="#ffff00"/>
<rect x="739.8" y="389.7" width="1.5" height="6.3" fill="#ffff00"/>
<rect x="742.1" y="340.8" width="1.5" height="6.2" fill="#ffff00"/>
<rect x="742.1" y="389.7" width="1.5" height="6.3" fill="#ffff00"/>
<rect x="744.4" y="340.8" width="1.5" height="6.2" fill="#ffff00"/>
<rect x="744.4" y="389.7" width="1.5" height="6.3" fill="#ffff00"/>
<rect x="700.5" y="348.4" width="7.9" height="1.5" fill="#ffff00"/>
<rect x="747.3" y="348.4" width="7.9" height="1.5" fill="#ffff00"/>
<rect x="700.5" y="350.8" width="7.9" height="1.5" fill="#ffff00"/>
<rect x="747.3" y="350.8" width="7.9" height="1.5" fill="#ffff00"/>
<rect x="700.5" y="353.2" width="7.9" height="1.5" fill="#ffff00"/>
<rect x="747.3" y="353.2" width="7.9" height="1.5" fill="#ffff00"/>
<rect x="700.5" y="355.6" width="7.9" height="1.5" fill="#ffff00"/>
<rect x="747.3" y="355.6" width="7.9" height="1.5" fill="#ffff00"/>
<rect x="700.5" y="358" width="7.9" height="1.5" fill="#ffff00"/>
<rect x="747.3" y="358" width="7.9" height="1.5" fill="#ffff00"/>
<rect x="700.5" y="360.4" width="7.9" height="1.5" fill="#ffff00"/>
<rect x="747.3" y="360.4" width="7.9" height="1.5" fill="#ffff00"/>
<rect x="700.5" y="362.8" width="7.9" height="1.5" fill="#ffff00"/>
<rect x="747.3" y="362.8" width="7.9" height="1.5" fill="#ffff00"/>
<rect x="700.5" y="365.2" width="7.9" height="1.5" fill="#ffff00"/>
<rect x="747.3" y="365.2" width="7.9" height="1.5" fill="#ffff00"/>
<rect x="700.5" y="367.6" width="7.9" height="1.5" fill="#ffff00"/>
<rect x="747.3" y="367.6" width="7.9" height="1.5" fill="#ffff00"/>
<rect x="700.5" y="370" width="7.9" height="1.5" fill="#ffff00"/>
<rect x="747.3" y="370" width="7.9" height="1.5" fill="#ffff00"/>
<rect x="700.5" y="372.4" width="7.9" height="1.5" fill="#ffff00"/>
<rect x="747.3" y="372.4" width="7.9" height="1.5" fill="#ffff00"/>
<rect x="700.5" y="374.8" width="7.9" height="1.5" fill="#ffff00"/>
<rect x="747.3" y="374.8" width="7.9" height="1.5" fill="#ffff00"/>
<rect x="700.5" y="377.2" width="7.9" height="1.5" fill="#ffff00"/>
<rect x="747.3" y="377.2" width="7.9" height="1.5" fill="#ffff00"/>
<rect x="700.5" y="379.6" width="7.9" height="1.5" fill="#ffff00"/>
<rect x="747.3" y="379.6" width="7.9" height="1.5" fill="#ffff00"/>
<rect x="700.5" y="381.9" width="7.9" height="1.5" fill="#ffff00"/>
<rect x="747.3" y="381.9" width="7.9" height="1.5" fill="#ffff00"/>
<rect x="700.5" y="384.3" width="7.9" height="1.5" fill="#ffff00"/>
<rect x="747.3" y="384.3" width="7.9" height="1.5" fill="#ffff00"/>
<rect x="700.5" y="386.7" width="7.9" height="1.5" fill="#ffff00"/>
<rect x="747.3" y="386.7" width="7.9" height="1.5" fill="#ffff00"/>
<rect x="709.4" y="348" width="36.9" height="40.7" fill="#ffff00"/>
<path d="M703.2 349.8 V344.3 H708.7 M746.8 344.3 H752.3 V349.8 M703.2 388.5 V394 H708.7 M746.8 394 H752.3 V388.5 " fill="none" stroke="#e81414" stroke-width="1.7"/>
<path d="M700.800 389 V396.300 H709" fill="none" stroke="#e81414" stroke-width="1.5"/>
<path d="M721 380 V362 L717 370 M734 380 V362 L730 370" fill="none" stroke="#f0b040" stroke-width="1"/>
<text x="727.5" y="373.5" font-size="8.8" fill="#6e6e6e" text-anchor="middle" letter-spacing="-.3">U5003</text>
<rect x="642" y="419.6" width="10.6" height="3.7" fill="#ffff00" stroke="#eea070" stroke-width="0.5"/>
<text x="647.3" y="422.5" font-size="2.9" fill="#3a3200" text-anchor="middle" font-weight="bold">C3301</text>
<rect x="642" y="424" width="10.6" height="21.3" fill="#ffff00" stroke="#eea070" stroke-width="0.5"/>
<rect x="642.8" y="432.1" width="9" height="5.1" fill="#fff"/>
<text x="647.3" y="436.2" font-size="4.2" fill="#3a3200" text-anchor="middle" transform="rotate(-90 647.3 436.2)" font-weight="bold">C3314</text>
<rect x="656" y="418" width="10" height="29" fill="#ffff00"/>
<path d="M655.200 424 V441.500 M667 424 V441.500 M655.200 428.500 H667" fill="none" stroke="#e81414" stroke-width="1.6"/>
<text x="661" y="436" font-size="3.3" fill="#446" text-anchor="middle" transform="rotate(-90 661 436)" font-weight="bold">D3301</text>
<rect x="669.4" y="415.9" width="34.2" height="32.6" fill="#ffff00" stroke="#eea070" stroke-width="0.5"/>
<rect x="672" y="428" width="19" height="8.4" fill="#fff"/>
<rect x="690.5" y="426" width="10" height="12.5" fill="#fff"/>
<path d="M700 426 H691 Q689.500 432 691 438.500 H700" fill="none" stroke="#e81414" stroke-width="1.4"/>
<text x="680.5" y="434" font-size="3.2" fill="#446" text-anchor="middle" transform="rotate(-90 680.5 434)" font-weight="bold">PL3304</text>
<text x="686" y="434" font-size="3.2" fill="#446" text-anchor="middle" transform="rotate(-90 686 434)" font-weight="bold">PL3303</text>
<rect x="706" y="417" width="16.5" height="29.4" fill="#ffff00"/>
<path d="M708 422 H705 V442.500 H708 M720 418 H723.500 V442.500 H721" fill="none" stroke="#e81414" stroke-width="1.5"/>
<path d="M709 424.500 H720 M709 440.500 H720" fill="none" stroke="#e0a0a0" stroke-width="0.7" stroke-dasharray="2 2"/>
<text x="714.3" y="433.4" font-size="3.5" fill="#664" text-anchor="middle" font-weight="bold">U3302</text>
<text x="728.2" y="432" font-size="3.2" fill="#3a3200" text-anchor="middle" transform="rotate(-90 728.2 432)" font-weight="bold">R3316R3301C3315</text>
<rect x="725.7" y="417" width="4.8" height="30" fill="#ffff00" fill-opacity=".7"/>
<rect x="732" y="416.4" width="6.9" height="14.2" fill="#ffff00" stroke="#eea070" stroke-width="0.5"/>
<text x="735.5" y="425" font-size="4.2" fill="#3a3200" text-anchor="middle" transform="rotate(-90 735.5 425)" font-weight="bold">C2202</text>
<rect x="732" y="432.2" width="6.9" height="15.2" fill="#ffff00" stroke="#eea070" stroke-width="0.5"/>
<text x="735.5" y="441.3" font-size="4.2" fill="#3a3200" text-anchor="middle" transform="rotate(-90 735.5 441.3)" font-weight="bold">C2209</text>
<rect x="740.4" y="424.8" width="17.9" height="23.7" fill="#ffff00" stroke="#e81414" stroke-width="1.3"/>
<rect x="741.2" y="433.8" width="16.3" height="5.7" fill="#fff"/>
<text x="749.3" y="438.2" font-size="4.2" fill="#3a3200" text-anchor="middle" transform="rotate(-90 749.3 438.2)" font-weight="bold">PL104</text>
<rect x="740" y="417" width="9.5" height="6.6" fill="#ffff00"/>
<text x="744.8" y="421.8" font-size="4.2" fill="#3a3200" text-anchor="middle" font-weight="bold">CMP</text>
<rect x="751.3" y="416.6" width="14.2" height="7.4" fill="#ffff00" stroke="#eea070" stroke-width="0.5"/>
<text x="758.4" y="421.8" font-size="4.2" fill="#3a3200" text-anchor="middle" font-weight="bold">C2213</text>
<rect x="766.6" y="416.6" width="15" height="7.4" fill="#ffff00" stroke="#eea070" stroke-width="0.5"/>
<text x="774.1" y="421.8" font-size="4.2" fill="#3a3200" text-anchor="middle" font-weight="bold">R6203</text>
<rect x="782.5" y="416.6" width="14" height="7.4" fill="#ffff00" stroke="#eea070" stroke-width="0.5"/>
<text x="789.5" y="421.8" font-size="4.2" fill="#3a3200" text-anchor="middle" font-weight="bold">C6298</text>
<rect x="797.5" y="416.6" width="14.5" height="7.4" fill="#ffff00" stroke="#eea070" stroke-width="0.5"/>
<text x="804.8" y="421.8" font-size="4.2" fill="#3a3200" text-anchor="middle" font-weight="bold">C6212</text>
<rect x="813" y="417" width="4" height="9" fill="#ffff00" stroke="#eea070" stroke-width="0.5"/>
<text x="815" y="422.5" font-size="2.9" fill="#3a3200" text-anchor="middle" transform="rotate(-90 815 422.5)" font-weight="bold">R5302</text>
<rect x="818" y="417" width="10" height="6.5" fill="#ffff00" stroke="#eea070" stroke-width="0.5"/>
<text x="823" y="421.4" font-size="3.1" fill="#3a3200" text-anchor="middle" font-weight="bold">C3303</text>
<rect x="829" y="417.4" width="13.4" height="9.4" fill="#ffff00" stroke="#eea070" stroke-width="0.5"/>
<text x="835.7" y="423.6" font-size="4.2" fill="#3a3200" text-anchor="middle" font-weight="bold">U3306</text>
<path d="M838 417 H843 V427.200 H838" fill="none" stroke="#e81414" stroke-width="1.5"/>
<rect x="843.6" y="417" width="4.4" height="10.4" fill="#ffff00" stroke="#eea070" stroke-width="0.5"/>
<text x="845.8" y="423.4" font-size="3.2" fill="#3a3200" text-anchor="middle" transform="rotate(-90 845.8 423.4)" font-weight="bold">L3813</text>
<rect x="760.3" y="424.4" width="15" height="23.8" fill="#ffff00" stroke="#e81414" stroke-width="1.4"/>
<path d="M762.500 428 H773 M762.500 444 H773" fill="none" stroke="#f0b0a0" stroke-width="0.7" stroke-dasharray="2 2"/>
<text x="767.8" y="437.6" font-size="3.4" fill="#664" text-anchor="middle" font-weight="bold">U2202</text>
<rect x="776.8" y="425.4" width="16" height="7.1" fill="#ffff00" stroke="#eea070" stroke-width="0.5"/>
<text x="784.8" y="430.5" font-size="4.2" fill="#3a3200" text-anchor="middle" font-weight="bold">L3358</text>
<rect x="776.8" y="433.1" width="16" height="7.1" fill="#ffff00" stroke="#eea070" stroke-width="0.5"/>
<text x="784.8" y="438.2" font-size="4.2" fill="#3a3200" text-anchor="middle" font-weight="bold">C1967</text>
<rect x="776.8" y="440.9" width="16" height="7.1" fill="#ffff00" stroke="#eea070" stroke-width="0.5"/>
<text x="784.8" y="445.9" font-size="4.2" fill="#3a3200" text-anchor="middle" font-weight="bold">L2351</text>
<rect x="808.9" y="430.8" width="4.5" height="10.7" fill="#ffff00" stroke="#eea070" stroke-width="0.5"/>
<text x="811.1" y="437.3" font-size="3.3" fill="#3a3200" text-anchor="middle" transform="rotate(-90 811.1 437.3)" font-weight="bold">C4002</text>
<rect x="821.7" y="430.8" width="22.5" height="11.5" fill="#ffff00" stroke="#e81414" stroke-width="1.3"/>
<text x="833" y="438.1" font-size="4.2" fill="#3a3200" text-anchor="middle" font-weight="bold">C4006</text>
<rect x="829" y="433.5" width="8" height="6" fill="#fff"/>
<text x="833" y="438" font-size="3.4" fill="#446" text-anchor="middle" font-weight="bold">C4006</text>
<text x="772.5" y="402" font-size="3.1" fill="#3a3200" text-anchor="middle" transform="rotate(-90 772.5 402)" font-weight="bold">TP_3894</text>
<text x="780.5" y="402" font-size="3.1" fill="#3a3200" text-anchor="middle" transform="rotate(-90 780.5 402)" font-weight="bold">TP_3914</text>
<path d="M856 314 H866 L870.200 319 V335.700 H856 Z" fill="#ffff00" stroke="none" stroke-width="1.2"/>
<text x="862.8" y="327" font-size="3.4" fill="#3a3200" text-anchor="middle" font-weight="bold">MIC+</text>
<path d="M975.800 314 H966 L961.700 319 V335.700 H975.800 Z" fill="#ffff00" stroke="none" stroke-width="1.2"/>
<text x="968.8" y="327" font-size="3.4" fill="#3a3200" text-anchor="middle" font-weight="bold">MIC-</text>
<rect x="983.2" y="280.4" width="32.2" height="47.4" fill="#ffffb0" stroke="#e81414" stroke-width="1.6"/>
<rect x="996" y="282" width="7.2" height="44.4" fill="#ffff00"/>
<rect x="986.5" y="282.3" width="7" height="8.8" fill="#ffff00"/>
<rect x="1005.5" y="282.3" width="7.3" height="8.8" fill="#ffff00"/>
<rect x="986.5" y="293.5" width="7" height="8.8" fill="#ffff00"/>
<rect x="1005.5" y="293.5" width="7.3" height="8.8" fill="#ffff00"/>
<rect x="986.5" y="305" width="7" height="8.8" fill="#ffff00"/>
<rect x="1005.5" y="305" width="7.3" height="8.8" fill="#ffff00"/>
<rect x="986.5" y="316.5" width="7" height="8.8" fill="#ffff00"/>
<rect x="1005.5" y="316.5" width="7.3" height="8.8" fill="#ffff00"/>
<path d="M1011 277.500 H1018 V283" fill="none" stroke="#e81414" stroke-width="1.4"/>
<text x="1002.5" y="304.5" font-size="8.8" fill="#6e6e6e" text-anchor="middle" transform="rotate(-90 1002.5 304.5)" letter-spacing="-.3">U6301</text>
<rect x="1025" y="266.3" width="40" height="15" fill="#ffff00" stroke="#e81414" stroke-width="1.4"/>
<circle cx="1032.5" cy="273.9" r="4" fill="#fff"/>
<circle cx="1058.5" cy="273.9" r="4.2" fill="#fff"/>
<rect x="1059" y="268" width="6" height="12" fill="#ffff00"/>
<path d="M1026 267.500 H1064 M1026 280.500 H1064" fill="none" stroke="#e81414" stroke-width="1.2" stroke-dasharray="3 3"/>
<text x="1045.5" y="275.3" font-size="3.4" fill="#446" text-anchor="middle" font-weight="bold">U6300</text>
<rect x="1090.2" y="267.6" width="20.3" height="12.5" fill="#ffff00"/>
<text x="1100.3" y="275.2" font-size="3.3" fill="#446" text-anchor="middle" font-weight="bold">LED6095</text>
<rect x="1023" y="295.8" width="7.3" height="20.8" fill="#ffff00" stroke="#e81414" stroke-width="1.3"/>
<text x="1026.7" y="306.5" font-size="3.1" fill="#553" text-anchor="middle" transform="rotate(-90 1026.7 306.5)" font-weight="bold">D6301A</text>
<rect x="1025.6" y="299.5" width="2.2" height="13.5" fill="#c8b000" fill-opacity=".55"/>
<rect x="1030.3" y="295.8" width="7.3" height="20.8" fill="#ffff00" stroke="#e81414" stroke-width="1.3"/>
<text x="1034" y="306.5" font-size="3.1" fill="#553" text-anchor="middle" transform="rotate(-90 1034 306.5)" font-weight="bold">D6302A</text>
<rect x="1032.9" y="299.5" width="2.2" height="13.5" fill="#c8b000" fill-opacity=".55"/>
<rect x="1037.7" y="295.8" width="7.3" height="20.8" fill="#ffff00" stroke="#e81414" stroke-width="1.3"/>
<text x="1041.4" y="306.5" font-size="3.1" fill="#553" text-anchor="middle" transform="rotate(-90 1041.4 306.5)" font-weight="bold">D6303A</text>
<rect x="1040.3" y="299.5" width="2.2" height="13.5" fill="#c8b000" fill-opacity=".55"/>
<rect x="1045" y="295.8" width="7.3" height="20.8" fill="#ffff00" stroke="#e81414" stroke-width="1.3"/>
<text x="1048.8" y="306.5" font-size="3.1" fill="#553" text-anchor="middle" transform="rotate(-90 1048.8 306.5)" font-weight="bold">D6304A</text>
<rect x="1047.6" y="299.5" width="2.2" height="13.5" fill="#c8b000" fill-opacity=".55"/>
<circle cx="1105.5" cy="310.3" r="6" fill="#ffff00"/>
<text x="1105.5" y="311.5" font-size="2.9" fill="#332" text-anchor="middle" font-weight="bold">NAN0002</text>
<circle cx="1039.4" cy="336" r="10.2" fill="#ffff00"/>
<text x="1039.4" y="340.3" font-size="12.5" fill="#f0a818" text-anchor="middle">1</text>
<rect x="984.7" y="340.7" width="7.6" height="15.7" fill="#ffff00" stroke="#eea070" stroke-width="0.5"/>
<text x="988.5" y="350.1" font-size="4.2" fill="#3a3200" text-anchor="middle" transform="rotate(-90 988.5 350.1)" font-weight="bold">CL13</text>
<rect x="986.8" y="358" width="5.5" height="9" fill="#ffff00"/>
<text x="989.5" y="363.5" font-size="2.9" fill="#3a3200" text-anchor="middle" transform="rotate(-90 989.5 363.5)" font-weight="bold">C4301</text>
<rect x="993.5" y="341" width="5.1" height="20" fill="#ffff00" stroke="#eea070" stroke-width="0.5"/>
<text x="996" y="352.4" font-size="4" fill="#3a3200" text-anchor="middle" transform="rotate(-90 996 352.4)" font-weight="bold">R2245</text>
<rect x="999.4" y="341" width="4.8" height="10" fill="#ffff00" stroke="#eea070" stroke-width="0.5"/>
<text x="1001.8" y="347.1" font-size="3.1" fill="#3a3200" text-anchor="middle" transform="rotate(-90 1001.8 347.1)" font-weight="bold">L4454</text>
<rect x="999.4" y="351.5" width="4.8" height="10" fill="#ffff00" stroke="#eea070" stroke-width="0.5"/>
<text x="1001.8" y="357.6" font-size="3.1" fill="#3a3200" text-anchor="middle" transform="rotate(-90 1001.8 357.6)" font-weight="bold">C6474</text>
<rect x="999.4" y="362" width="4.8" height="10" fill="#ffff00" stroke="#eea070" stroke-width="0.5"/>
<text x="1001.8" y="368.1" font-size="3.1" fill="#3a3200" text-anchor="middle" transform="rotate(-90 1001.8 368.1)" font-weight="bold">C5571</text>
<rect x="1005" y="341" width="5" height="10" fill="#ffff00" stroke="#eea070" stroke-width="0.5"/>
<text x="1007.5" y="347.1" font-size="3.1" fill="#3a3200" text-anchor="middle" transform="rotate(-90 1007.5 347.1)" font-weight="bold">R3786</text>
<rect x="1005" y="351.5" width="5" height="10" fill="#ffff00" stroke="#eea070" stroke-width="0.5"/>
<text x="1007.5" y="357.6" font-size="3.1" fill="#3a3200" text-anchor="middle" transform="rotate(-90 1007.5 357.6)" font-weight="bold">R5869</text>
<rect x="1005" y="362" width="5" height="10" fill="#ffff00" stroke="#eea070" stroke-width="0.5"/>
<text x="1007.5" y="368.1" font-size="3.1" fill="#3a3200" text-anchor="middle" transform="rotate(-90 1007.5 368.1)" font-weight="bold">L5750</text>
<rect x="1010.6" y="341" width="4.9" height="10" fill="#ffff00" stroke="#eea070" stroke-width="0.5"/>
<text x="1013" y="347.1" font-size="3.1" fill="#3a3200" text-anchor="middle" transform="rotate(-90 1013 347.1)" font-weight="bold">L1563</text>
<rect x="1016.6" y="354.8" width="14.2" height="7.9" fill="#ffff00" stroke="#eea070" stroke-width="0.5"/>
<text x="1023.7" y="360.3" font-size="4.2" fill="#3a3200" text-anchor="middle" font-weight="bold">R6101</text>
<rect x="1021.8" y="363.5" width="9.8" height="5" fill="#ffff00" stroke="#eea070" stroke-width="0.5"/>
<text x="1026.7" y="367.1" font-size="3" fill="#3a3200" text-anchor="middle" font-weight="bold">C6206</text>
<rect x="1033.2" y="354.8" width="6.6" height="13.7" fill="#ffff00" stroke="#eea070" stroke-width="0.5"/>
<text x="1036.5" y="363.2" font-size="4.2" fill="#3a3200" text-anchor="middle" transform="rotate(-90 1036.5 363.2)" font-weight="bold">C6212</text>
<rect x="1041.3" y="354.8" width="6.3" height="13.7" fill="#ffff00" stroke="#eea070" stroke-width="0.5"/>
<text x="1044.4" y="363.2" font-size="4.2" fill="#3a3200" text-anchor="middle" transform="rotate(-90 1044.4 363.2)" font-weight="bold">C6201</text>
<text x="1053" y="359.5" font-size="3.2" fill="#3a3200" text-anchor="middle" font-weight="bold">P6301</text>
<text x="1053.5" y="365" font-size="3.2" fill="#3a3200" text-anchor="middle" transform="rotate(-90 1053.5 365)" font-weight="bold">K6311</text>
<rect x="1018.7" y="370.5" width="6.9" height="16.2" fill="#ffff00" stroke="#eea070" stroke-width="0.5"/>
<text x="1022.1" y="380.1" font-size="4.2" fill="#3a3200" text-anchor="middle" transform="rotate(-90 1022.1 380.1)" font-weight="bold">CKL36</text>
<rect x="1026.6" y="371" width="10.4" height="5" fill="#ffff00" stroke="#eea070" stroke-width="0.5"/>
<text x="1031.8" y="374.7" font-size="3.2" fill="#3a3200" text-anchor="middle" font-weight="bold">C3211</text>
<rect x="1026.6" y="376.5" width="10.4" height="5" fill="#ffff00" stroke="#eea070" stroke-width="0.5"/>
<text x="1031.8" y="380.2" font-size="3.2" fill="#3a3200" text-anchor="middle" font-weight="bold">L6710</text>
<rect x="1026.6" y="382" width="10.4" height="5" fill="#ffff00" stroke="#eea070" stroke-width="0.5"/>
<text x="1031.8" y="385.7" font-size="3.2" fill="#3a3200" text-anchor="middle" font-weight="bold">C1497</text>
<rect x="1038.5" y="371" width="4.5" height="10" fill="#ffff00" stroke="#eea070" stroke-width="0.5"/>
<text x="1040.8" y="377.1" font-size="3.1" fill="#3a3200" text-anchor="middle" transform="rotate(-90 1040.8 377.1)" font-weight="bold">R6301</text>
<rect x="1044" y="371" width="4.3" height="10" fill="#ffff00" stroke="#eea070" stroke-width="0.5"/>
<text x="1046.2" y="377.1" font-size="3.1" fill="#3a3200" text-anchor="middle" transform="rotate(-90 1046.2 377.1)" font-weight="bold">L3331</text>
<text x="913" y="394.6" font-size="3.2" fill="#222" text-anchor="start" font-weight="bold">P6303 TP_SDA4  P6702</text>
<text x="931" y="399" font-size="3.2" fill="#444" text-anchor="start">TP_SCL4</text>
<rect x="936" y="391.5" width="6" height="3.5" fill="#ffff00"/>
<rect x="868.2" y="411.8" width="9.9" height="4.4" fill="#ffff00" stroke="#eea070" stroke-width="0.5"/>
<text x="873.2" y="415.1" font-size="3.1" fill="#3a3200" text-anchor="middle" font-weight="bold">C4004</text>
<rect x="869.7" y="422.3" width="4.4" height="10" fill="#ffff00" stroke="#eea070" stroke-width="0.5"/>
<text x="871.9" y="428.4" font-size="3.1" fill="#3a3200" text-anchor="middle" transform="rotate(-90 871.9 428.4)" font-weight="bold">C4005</text>
<rect x="918.4" y="409.7" width="22" height="10.5" fill="#ffff00" stroke="#e81414" stroke-width="1.3"/>
<text x="929.4" y="416.5" font-size="4.2" fill="#3a3200" text-anchor="middle" font-weight="bold">C1007</text>
<rect x="926" y="412.5" width="8" height="5" fill="#fff"/>
<text x="929.5" y="416.6" font-size="3.6" fill="#446" text-anchor="middle" font-weight="bold">C1007</text>
<rect x="950.7" y="407.6" width="21.1" height="11.1" fill="#ffff00" stroke="#e81414" stroke-width="1.3"/>
<text x="961.2" y="414.7" font-size="4.2" fill="#3a3200" text-anchor="middle" font-weight="bold">C1006</text>
<rect x="958" y="410.5" width="8" height="5" fill="#fff"/>
<text x="961.5" y="414.7" font-size="3.6" fill="#446" text-anchor="middle" font-weight="bold">C1006</text>
<rect x="972.6" y="407.6" width="20.7" height="11.1" fill="#ffff00" stroke="#e81414" stroke-width="1.3"/>
<text x="983" y="414.7" font-size="4.2" fill="#3a3200" text-anchor="middle" font-weight="bold">C1008</text>
<rect x="979" y="410.5" width="8" height="5" fill="#fff"/>
<text x="983" y="414.7" font-size="3.6" fill="#446" text-anchor="middle" font-weight="bold">C1008</text>
<rect x="979" y="396.6" width="3.9" height="9.6" fill="#ffff00" stroke="#eea070" stroke-width="0.5"/>
<text x="981" y="402.5" font-size="3" fill="#3a3200" text-anchor="middle" transform="rotate(-90 981 402.5)" font-weight="bold">L6477</text>
<rect x="984.6" y="396.6" width="4" height="9.6" fill="#ffff00" stroke="#eea070" stroke-width="0.5"/>
<text x="986.6" y="402.5" font-size="3" fill="#3a3200" text-anchor="middle" transform="rotate(-90 986.6 402.5)" font-weight="bold">R1184</text>
<rect x="907.6" y="421.3" width="16.3" height="7.7" fill="#ffff00" stroke="#eea070" stroke-width="0.5"/>
<text x="915.8" y="426.7" font-size="4.2" fill="#3a3200" text-anchor="middle" font-weight="bold">L3911</text>
<rect x="907.6" y="429.5" width="16.3" height="7.7" fill="#ffff00" stroke="#eea070" stroke-width="0.5"/>
<text x="915.8" y="434.9" font-size="4.2" fill="#3a3200" text-anchor="middle" font-weight="bold">C6004</text>
<rect x="907.6" y="437.8" width="16.3" height="7.7" fill="#ffff00" stroke="#eea070" stroke-width="0.5"/>
<text x="915.8" y="443.1" font-size="4.2" fill="#3a3200" text-anchor="middle" font-weight="bold">C5044</text>
<rect x="903.2" y="445.8" width="4.4" height="10" fill="#ffff00" stroke="#eea070" stroke-width="0.5"/>
<text x="905.4" y="451.9" font-size="3.1" fill="#3a3200" text-anchor="middle" transform="rotate(-90 905.4 451.9)" font-weight="bold">C2787</text>
<rect x="908.4" y="445.8" width="4" height="10" fill="#ffff00" stroke="#eea070" stroke-width="0.5"/>
<text x="910.4" y="451.9" font-size="3.1" fill="#3a3200" text-anchor="middle" transform="rotate(-90 910.4 451.9)" font-weight="bold">R2059</text>
<rect x="913" y="446" width="10.6" height="4.5" fill="#ffff00" stroke="#eea070" stroke-width="0.5"/>
<text x="918.3" y="449.4" font-size="3.3" fill="#3a3200" text-anchor="middle" font-weight="bold">C1023</text>
<rect x="913" y="451" width="10.6" height="5.2" fill="#ffff00" stroke="#eea070" stroke-width="0.5"/>
<text x="918.3" y="454.8" font-size="3.3" fill="#3a3200" text-anchor="middle" font-weight="bold">C1024</text>
<rect x="925.5" y="423.9" width="3.5" height="8.1" fill="#ffff00" stroke="#eea070" stroke-width="0.5"/>
<text x="927.2" y="429" font-size="2.9" fill="#3a3200" text-anchor="middle" transform="rotate(-90 927.2 429)" font-weight="bold">C4259</text>
<rect x="930" y="423.9" width="4" height="8.1" fill="#ffff00" stroke="#eea070" stroke-width="0.5"/>
<text x="932" y="429" font-size="2.9" fill="#3a3200" text-anchor="middle" transform="rotate(-90 932 429)" font-weight="bold">L5067</text>
<rect x="935" y="423.4" width="10.5" height="4.2" fill="#ffff00" stroke="#eea070" stroke-width="0.5"/>
<text x="940.2" y="426.7" font-size="3.3" fill="#3a3200" text-anchor="middle" font-weight="bold">C1020</text>
<rect x="935" y="428.3" width="10.5" height="4.3" fill="#ffff00" stroke="#eea070" stroke-width="0.5"/>
<text x="940.2" y="431.6" font-size="3.3" fill="#3a3200" text-anchor="middle" font-weight="bold">C1017</text>
<rect x="924.6" y="433.6" width="20.9" height="11.8" fill="#ffff00" stroke="#e81414" stroke-width="1.3"/>
<text x="935" y="441" font-size="4.2" fill="#3a3200" text-anchor="middle" font-weight="bold">C1016</text>
<rect x="931" y="436.5" width="8" height="5" fill="#fff"/>
<text x="935" y="440.8" font-size="3.6" fill="#446" text-anchor="middle" font-weight="bold">C1016</text>
<rect x="924.6" y="446" width="20.9" height="10.6" fill="#ffff00" stroke="#e81414" stroke-width="1.3"/>
<text x="935" y="452.8" font-size="4.2" fill="#3a3200" text-anchor="middle" font-weight="bold">CM135</text>
<rect x="931" y="448.8" width="8" height="5" fill="#fff"/>
<text x="935" y="453" font-size="3.6" fill="#446" text-anchor="middle" font-weight="bold">CM135</text>
<rect x="941.8" y="412.9" width="3.6" height="10" fill="#ffff00" stroke="#eea070" stroke-width="0.5"/>
<text x="943.6" y="418.9" font-size="2.9" fill="#3a3200" text-anchor="middle" transform="rotate(-90 943.6 418.9)" font-weight="bold">C2362</text>
<rect x="946.5" y="412.9" width="3.3" height="10" fill="#ffff00" stroke="#eea070" stroke-width="0.5"/>
<text x="948.1" y="418.9" font-size="2.9" fill="#3a3200" text-anchor="middle" transform="rotate(-90 948.1 418.9)" font-weight="bold">L4290</text>
<rect x="951" y="420.8" width="10" height="4" fill="#ffff00" stroke="#eea070" stroke-width="0.5"/>
<text x="956" y="423.9" font-size="3.1" fill="#3a3200" text-anchor="middle" font-weight="bold">C1001</text>
<rect x="946.5" y="425.5" width="4.6" height="9.9" fill="#ffff00" stroke="#eea070" stroke-width="0.5"/>
<text x="948.8" y="431.5" font-size="3.1" fill="#3a3200" text-anchor="middle" transform="rotate(-90 948.8 431.5)" font-weight="bold">R2121</text>
<rect x="951.7" y="425.5" width="4.6" height="9.9" fill="#ffff00" stroke="#eea070" stroke-width="0.5"/>
<text x="954" y="431.5" font-size="3.1" fill="#3a3200" text-anchor="middle" transform="rotate(-90 954 431.5)" font-weight="bold">L5507</text>
<rect x="956.9" y="425.5" width="4.6" height="9.9" fill="#ffff00" stroke="#eea070" stroke-width="0.5"/>
<text x="959.2" y="431.5" font-size="3.1" fill="#3a3200" text-anchor="middle" transform="rotate(-90 959.2 431.5)" font-weight="bold">R6786</text>
<rect x="962.2" y="425.5" width="4.6" height="9.9" fill="#ffff00" stroke="#eea070" stroke-width="0.5"/>
<text x="964.5" y="431.5" font-size="3.1" fill="#3a3200" text-anchor="middle" transform="rotate(-90 964.5 431.5)" font-weight="bold">L3939</text>
<rect x="967.4" y="425.5" width="4.6" height="9.9" fill="#ffff00" stroke="#eea070" stroke-width="0.5"/>
<text x="969.7" y="431.5" font-size="3.1" fill="#3a3200" text-anchor="middle" transform="rotate(-90 969.7 431.5)" font-weight="bold">L2890</text>
<rect x="946.5" y="436" width="4.6" height="9.9" fill="#ffff00" stroke="#eea070" stroke-width="0.5"/>
<text x="948.8" y="442" font-size="3.1" fill="#3a3200" text-anchor="middle" transform="rotate(-90 948.8 442)" font-weight="bold">C1679</text>
<rect x="951.7" y="436" width="4.6" height="9.9" fill="#ffff00" stroke="#eea070" stroke-width="0.5"/>
<text x="954" y="442" font-size="3.1" fill="#3a3200" text-anchor="middle" transform="rotate(-90 954 442)" font-weight="bold">C2239</text>
<rect x="956.9" y="436" width="4.6" height="9.9" fill="#ffff00" stroke="#eea070" stroke-width="0.5"/>
<text x="959.2" y="442" font-size="3.1" fill="#3a3200" text-anchor="middle" transform="rotate(-90 959.2 442)" font-weight="bold">C6394</text>
<rect x="962.2" y="436" width="4.6" height="9.9" fill="#ffff00" stroke="#eea070" stroke-width="0.5"/>
<text x="964.5" y="442" font-size="3.1" fill="#3a3200" text-anchor="middle" transform="rotate(-90 964.5 442)" font-weight="bold">C1098</text>
<rect x="967.4" y="436" width="4.6" height="9.9" fill="#ffff00" stroke="#eea070" stroke-width="0.5"/>
<text x="969.7" y="442" font-size="3.1" fill="#3a3200" text-anchor="middle" transform="rotate(-90 969.7 442)" font-weight="bold">L5826</text>
<rect x="946.5" y="446.4" width="4.6" height="9.9" fill="#ffff00" stroke="#eea070" stroke-width="0.5"/>
<text x="948.8" y="452.5" font-size="3.1" fill="#3a3200" text-anchor="middle" transform="rotate(-90 948.8 452.5)" font-weight="bold">C3152</text>
<rect x="951.7" y="446.4" width="4.6" height="9.9" fill="#ffff00" stroke="#eea070" stroke-width="0.5"/>
<text x="954" y="452.5" font-size="3.1" fill="#3a3200" text-anchor="middle" transform="rotate(-90 954 452.5)" font-weight="bold">R1033</text>
<rect x="956.9" y="446.4" width="4.6" height="9.9" fill="#ffff00" stroke="#eea070" stroke-width="0.5"/>
<text x="959.2" y="452.5" font-size="3.1" fill="#3a3200" text-anchor="middle" transform="rotate(-90 959.2 452.5)" font-weight="bold">C4432</text>
<rect x="962.2" y="446.4" width="4.6" height="9.9" fill="#ffff00" stroke="#eea070" stroke-width="0.5"/>
<text x="964.5" y="452.5" font-size="3.1" fill="#3a3200" text-anchor="middle" transform="rotate(-90 964.5 452.5)" font-weight="bold">R5995</text>
<rect x="967.4" y="446.4" width="4.6" height="9.9" fill="#ffff00" stroke="#eea070" stroke-width="0.5"/>
<text x="969.7" y="452.5" font-size="3.1" fill="#3a3200" text-anchor="middle" transform="rotate(-90 969.7 452.5)" font-weight="bold">R2028</text>
<rect x="962" y="420.8" width="4.5" height="10.2" fill="#ffff00" stroke="#eea070" stroke-width="0.5"/>
<text x="964.2" y="427" font-size="3.2" fill="#3a3200" text-anchor="middle" transform="rotate(-90 964.2 427)" font-weight="bold">C4740</text>
<rect x="967.4" y="420.8" width="4.4" height="10.2" fill="#ffff00" stroke="#eea070" stroke-width="0.5"/>
<text x="969.6" y="427" font-size="3.2" fill="#3a3200" text-anchor="middle" transform="rotate(-90 969.6 427)" font-weight="bold">L4260</text>
<rect x="972.8" y="420.8" width="9" height="3.8" fill="#ffff00" stroke="#eea070" stroke-width="0.5"/>
<text x="977.3" y="423.7" font-size="2.9" fill="#3a3200" text-anchor="middle" font-weight="bold">C1019</text>
<rect x="982.5" y="420.8" width="10.1" height="3.8" fill="#ffff00" stroke="#eea070" stroke-width="0.5"/>
<text x="987.5" y="423.8" font-size="3" fill="#3a3200" text-anchor="middle" font-weight="bold">C1018</text>
<rect x="972.8" y="425.3" width="9" height="4.2" fill="#ffff00" stroke="#eea070" stroke-width="0.5"/>
<text x="977.3" y="428.4" font-size="2.9" fill="#3a3200" text-anchor="middle" font-weight="bold">C1029</text>
<rect x="982.5" y="425.3" width="10.1" height="4.2" fill="#ffff00" stroke="#eea070" stroke-width="0.5"/>
<text x="987.5" y="428.5" font-size="3.1" fill="#3a3200" text-anchor="middle" font-weight="bold">C1028</text>
<rect x="972.4" y="430.4" width="11.1" height="21.1" fill="#ffff00" stroke="#e81414" stroke-width="1.3"/>
<rect x="973.2" y="438.4" width="9.5" height="5.1" fill="#fff"/>
<text x="978" y="442.5" font-size="4.2" fill="#3a3200" text-anchor="middle" transform="rotate(-90 978 442.5)" font-weight="bold">C1026</text>
<rect x="984.4" y="430.4" width="11.4" height="21.1" fill="#ffff00" stroke="#e81414" stroke-width="1.3"/>
<rect x="985.2" y="438.4" width="9.8" height="5.1" fill="#fff"/>
<text x="990.1" y="442.5" font-size="4.2" fill="#3a3200" text-anchor="middle" transform="rotate(-90 990.1 442.5)" font-weight="bold">C1027</text>
<rect x="974" y="452.2" width="8" height="4.8" fill="#ffff00"/>
<text x="978" y="455.6" font-size="2.9" fill="#3a3200" text-anchor="middle" font-weight="bold">C1041</text>
<rect x="982.3" y="452.3" width="16.3" height="6.9" fill="#ffff00" stroke="#eea070" stroke-width="0.5"/>
<text x="990.5" y="457.3" font-size="4.2" fill="#3a3200" text-anchor="middle" font-weight="bold">C1046</text>
<rect x="982.3" y="459.9" width="16.3" height="7.1" fill="#ffff00" stroke="#eea070" stroke-width="0.5"/>
<text x="990.5" y="465" font-size="4.2" fill="#3a3200" text-anchor="middle" font-weight="bold">C1047</text>
<rect x="983" y="468" width="10" height="5.3" fill="#ffff00" stroke="#eea070" stroke-width="0.5"/>
<text x="988" y="471.8" font-size="3.1" fill="#3a3200" text-anchor="middle" font-weight="bold">L3043</text>
<rect x="983" y="474" width="10" height="5" fill="#ffff00" stroke="#eea070" stroke-width="0.5"/>
<text x="988" y="477.6" font-size="3.1" fill="#3a3200" text-anchor="middle" font-weight="bold">C3042</text>
<rect x="616.4" y="462.4" width="18.7" height="8" fill="#ffff00" rx="3"/>
<text x="625.8" y="469" font-size="7" fill="#f6e200" text-anchor="middle">G5</text>
<rect x="704" y="459" width="28.2" height="9.4" fill="#ffff00" rx="3"/>
<text x="718.1" y="466.3" font-size="7" fill="#f6e200" text-anchor="middle">G8</text>
<rect x="898.7" y="458.6" width="22.6" height="9.4" fill="#ffff00" rx="3"/>
<text x="910" y="465.9" font-size="7" fill="#f6e200" text-anchor="middle">G15</text>
<rect x="956.5" y="458.6" width="23.2" height="9.4" fill="#ffff00" rx="3"/>
<text x="968.1" y="465.9" font-size="7" fill="#f6e200" text-anchor="middle">G5</text>
<rect x="787" y="459" width="28" height="9.4" fill="#ffff00" rx="3"/>
<text x="801" y="466.3" font-size="7" fill="#f6e200" text-anchor="middle">G6</text>
<rect x="616.4" y="598.2" width="18.7" height="8" fill="#ffff00" rx="3"/>
<text x="625.8" y="604.8" font-size="7" fill="#f6e200" text-anchor="middle">G5</text>
<rect x="696" y="610.6" width="28.1" height="9.4" fill="#ffff00" rx="3"/>
<text x="710" y="617.9" font-size="7" fill="#f6e200" text-anchor="middle">G17</text>
<rect x="831" y="610.6" width="28" height="9.4" fill="#ffff00" rx="3"/>
<text x="845" y="617.9" font-size="7" fill="#f6e200" text-anchor="middle">G16</text>
<rect x="1042" y="390" width="4.4" height="9.4" fill="#ffff00" stroke="#eea070" stroke-width="0.5"/>
<text x="1044.2" y="395.7" font-size="2.9" fill="#3a3200" text-anchor="middle" transform="rotate(-90 1044.2 395.7)" font-weight="bold">L4228</text>
<rect x="1047.6" y="390" width="4.4" height="9.4" fill="#ffff00" stroke="#eea070" stroke-width="0.5"/>
<text x="1049.8" y="395.7" font-size="2.9" fill="#3a3200" text-anchor="middle" transform="rotate(-90 1049.8 395.7)" font-weight="bold">C4944</text>
<rect x="1053.2" y="390" width="4.4" height="9.4" fill="#ffff00" stroke="#eea070" stroke-width="0.5"/>
<text x="1055.4" y="395.7" font-size="2.9" fill="#3a3200" text-anchor="middle" transform="rotate(-90 1055.4 395.7)" font-weight="bold">L1509</text>
<rect x="1023.2" y="401" width="54.8" height="56.4" fill="#ffffd0"/>
<rect x="1032" y="401" width="2.4" height="7.3" fill="#ffff00"/>
<rect x="1032" y="450.2" width="2.4" height="7.2" fill="#ffff00"/>
<rect x="1035.4" y="401" width="2.4" height="7.3" fill="#ffff00"/>
<rect x="1035.4" y="450.2" width="2.4" height="7.2" fill="#ffff00"/>
<rect x="1038.7" y="401" width="2.4" height="7.3" fill="#ffff00"/>
<rect x="1038.7" y="450.2" width="2.4" height="7.2" fill="#ffff00"/>
<rect x="1042.1" y="401" width="2.4" height="7.3" fill="#ffff00"/>
<rect x="1042.1" y="450.2" width="2.4" height="7.2" fill="#ffff00"/>
<rect x="1045.5" y="401" width="2.4" height="7.3" fill="#ffff00"/>
<rect x="1045.5" y="450.2" width="2.4" height="7.2" fill="#ffff00"/>
<rect x="1048.8" y="401" width="2.4" height="7.3" fill="#ffff00"/>
<rect x="1048.8" y="450.2" width="2.4" height="7.2" fill="#ffff00"/>
<rect x="1052.2" y="401" width="2.4" height="7.3" fill="#ffff00"/>
<rect x="1052.2" y="450.2" width="2.4" height="7.2" fill="#ffff00"/>
<rect x="1055.5" y="401" width="2.4" height="7.3" fill="#ffff00"/>
<rect x="1055.5" y="450.2" width="2.4" height="7.2" fill="#ffff00"/>
<rect x="1058.9" y="401" width="2.4" height="7.3" fill="#ffff00"/>
<rect x="1058.9" y="450.2" width="2.4" height="7.2" fill="#ffff00"/>
<rect x="1062.3" y="401" width="2.4" height="7.3" fill="#ffff00"/>
<rect x="1062.3" y="450.2" width="2.4" height="7.2" fill="#ffff00"/>
<rect x="1065.6" y="401" width="2.4" height="7.3" fill="#ffff00"/>
<rect x="1065.6" y="450.2" width="2.4" height="7.2" fill="#ffff00"/>
<rect x="1023.2" y="403" width="7.2" height="2.5" fill="#ffff00"/>
<rect x="1070.8" y="403" width="7.2" height="2.5" fill="#ffff00"/>
<rect x="1023.2" y="406.6" width="7.2" height="2.5" fill="#ffff00"/>
<rect x="1070.8" y="406.6" width="7.2" height="2.5" fill="#ffff00"/>
<rect x="1023.2" y="410.2" width="7.2" height="2.5" fill="#ffff00"/>
<rect x="1070.8" y="410.2" width="7.2" height="2.5" fill="#ffff00"/>
<rect x="1023.2" y="413.7" width="7.2" height="2.5" fill="#ffff00"/>
<rect x="1070.8" y="413.7" width="7.2" height="2.5" fill="#ffff00"/>
<rect x="1023.2" y="417.3" width="7.2" height="2.5" fill="#ffff00"/>
<rect x="1070.8" y="417.3" width="7.2" height="2.5" fill="#ffff00"/>
<rect x="1023.2" y="420.9" width="7.2" height="2.5" fill="#ffff00"/>
<rect x="1070.8" y="420.9" width="7.2" height="2.5" fill="#ffff00"/>
<rect x="1023.2" y="424.4" width="7.2" height="2.5" fill="#ffff00"/>
<rect x="1070.8" y="424.4" width="7.2" height="2.5" fill="#ffff00"/>
<rect x="1023.2" y="428" width="7.2" height="2.5" fill="#ffff00"/>
<rect x="1070.8" y="428" width="7.2" height="2.5" fill="#ffff00"/>
<rect x="1023.2" y="431.6" width="7.2" height="2.5" fill="#ffff00"/>
<rect x="1070.8" y="431.6" width="7.2" height="2.5" fill="#ffff00"/>
<rect x="1023.2" y="435.1" width="7.2" height="2.5" fill="#ffff00"/>
<rect x="1070.8" y="435.1" width="7.2" height="2.5" fill="#ffff00"/>
<rect x="1023.2" y="438.7" width="7.2" height="2.5" fill="#ffff00"/>
<rect x="1070.8" y="438.7" width="7.2" height="2.5" fill="#ffff00"/>
<rect x="1023.2" y="442.3" width="7.2" height="2.5" fill="#ffff00"/>
<rect x="1070.8" y="442.3" width="7.2" height="2.5" fill="#ffff00"/>
<rect x="1023.2" y="445.8" width="7.2" height="2.5" fill="#ffff00"/>
<rect x="1070.8" y="445.8" width="7.2" height="2.5" fill="#ffff00"/>
<rect x="1023.2" y="449.4" width="7.2" height="2.5" fill="#ffff00"/>
<rect x="1070.8" y="449.4" width="7.2" height="2.5" fill="#ffff00"/>
<rect x="1023.2" y="453" width="7.2" height="2.5" fill="#ffff00"/>
<rect x="1070.8" y="453" width="7.2" height="2.5" fill="#ffff00"/>
<rect x="1032" y="410" width="10.4" height="10.8" fill="#ffff00"/>
<rect x="1032" y="422.9" width="10.4" height="10.8" fill="#ffff00"/>
<rect x="1032" y="435.8" width="10.4" height="10.8" fill="#ffff00"/>
<rect x="1044.4" y="410" width="10.4" height="10.8" fill="#ffff00"/>
<rect x="1044.4" y="422.9" width="10.4" height="10.8" fill="#ffff00"/>
<rect x="1044.4" y="435.8" width="10.4" height="10.8" fill="#ffff00"/>
<rect x="1056.8" y="410" width="10.4" height="10.8" fill="#ffff00"/>
<rect x="1056.8" y="422.9" width="10.4" height="10.8" fill="#ffff00"/>
<rect x="1056.8" y="435.8" width="10.4" height="10.8" fill="#ffff00"/>
<rect x="1024" y="401.2" width="7.5" height="1.7" fill="#e81414"/>
<rect x="1070" y="401.2" width="7.5" height="1.7" fill="#e81414"/>
<rect x="1024" y="455.5" width="7.5" height="1.7" fill="#e81414"/>
<rect x="1070" y="455.5" width="7.5" height="1.7" fill="#e81414"/>
<path d="M1072 458.500 H1079.500 V455" fill="none" stroke="#e81414" stroke-width="1.2"/>
<text x="1053.3" y="430" font-size="8.8" fill="#6e6e6e" text-anchor="middle" transform="rotate(-90 1053.3 430)" letter-spacing="-.3">U3200</text>
<rect x="1010.5" y="402" width="10.2" height="4.6" fill="#ffff00" stroke="#eea070" stroke-width="0.5"/>
<text x="1015.6" y="405.4" font-size="3.2" fill="#3a3200" text-anchor="middle" font-weight="bold">L3309</text>
<rect x="1010.5" y="407.6" width="10.2" height="4.6" fill="#ffff00" stroke="#eea070" stroke-width="0.5"/>
<text x="1015.6" y="411" font-size="3.2" fill="#3a3200" text-anchor="middle" font-weight="bold">R3296</text>
<rect x="1010.5" y="413.4" width="10.2" height="4.6" fill="#ffff00" stroke="#eea070" stroke-width="0.5"/>
<text x="1015.6" y="416.8" font-size="3.2" fill="#3a3200" text-anchor="middle" font-weight="bold">L3221</text>
<rect x="1010.5" y="430.9" width="10.2" height="4.6" fill="#ffff00" stroke="#eea070" stroke-width="0.5"/>
<text x="1015.6" y="434.3" font-size="3.2" fill="#3a3200" text-anchor="middle" font-weight="bold">L3347</text>
<rect x="1010.5" y="436.6" width="10.2" height="4.6" fill="#ffff00" stroke="#eea070" stroke-width="0.5"/>
<text x="1015.6" y="440" font-size="3.2" fill="#3a3200" text-anchor="middle" font-weight="bold">C3292</text>
<rect x="1010.5" y="442.4" width="10.2" height="4.6" fill="#ffff00" stroke="#eea070" stroke-width="0.5"/>
<text x="1015.6" y="445.8" font-size="3.2" fill="#3a3200" text-anchor="middle" font-weight="bold">L3297</text>
<rect x="1010.5" y="448.3" width="10.2" height="4.6" fill="#ffff00" stroke="#eea070" stroke-width="0.5"/>
<text x="1015.6" y="451.7" font-size="3.2" fill="#3a3200" text-anchor="middle" font-weight="bold">C3398</text>
<rect x="1010.5" y="454" width="10.2" height="4.6" fill="#ffff00" stroke="#eea070" stroke-width="0.5"/>
<text x="1015.6" y="457.4" font-size="3.2" fill="#3a3200" text-anchor="middle" font-weight="bold">L3258</text>
<rect x="1010" y="460" width="10" height="5" fill="#ffff00" stroke="#eea070" stroke-width="0.5"/>
<text x="1015" y="463.6" font-size="3.1" fill="#3a3200" text-anchor="middle" font-weight="bold">C3221</text>
<rect x="1020.6" y="460" width="10.4" height="5" fill="#ffff00" stroke="#eea070" stroke-width="0.5"/>
<text x="1025.8" y="463.7" font-size="3.2" fill="#3a3200" text-anchor="middle" font-weight="bold">L3306</text>
<rect x="1031.5" y="462" width="10.5" height="4.5" fill="#ffff00" stroke="#eea070" stroke-width="0.5"/>
<text x="1036.8" y="465.4" font-size="3.3" fill="#3a3200" text-anchor="middle" font-weight="bold">L3238</text>
<text x="1004" y="470.6" font-size="3.3" fill="#224" text-anchor="start" font-weight="bold">C3201</text>
<rect x="1015.5" y="466.5" width="11" height="4.5" fill="#ffff00" stroke="#eea070" stroke-width="0.5"/>
<text x="1021" y="470" font-size="3.4" fill="#3a3200" text-anchor="middle" font-weight="bold">C3243</text>
<rect x="1010.5" y="472" width="10.5" height="4.5" fill="#ffff00" stroke="#eea070" stroke-width="0.5"/>
<text x="1015.8" y="475.4" font-size="3.3" fill="#3a3200" text-anchor="middle" font-weight="bold">L3249</text>
<rect x="1021.6" y="472" width="10.4" height="4.5" fill="#ffff00" stroke="#eea070" stroke-width="0.5"/>
<text x="1026.8" y="475.4" font-size="3.2" fill="#3a3200" text-anchor="middle" font-weight="bold">R3296</text>
<rect x="1079" y="401.6" width="10.3" height="4" fill="#ffff00" stroke="#eea070" stroke-width="0.5"/>
<text x="1084.2" y="404.7" font-size="3.1" fill="#3a3200" text-anchor="middle" font-weight="bold">C3297</text>
<rect x="1090" y="401.6" width="10" height="4" fill="#ffff00" stroke="#eea070" stroke-width="0.5"/>
<text x="1095" y="404.7" font-size="3.1" fill="#3a3200" text-anchor="middle" font-weight="bold">C3296</text>
<rect x="1078.2" y="406.7" width="22.2" height="11.3" fill="#ffff00" stroke="#e81414" stroke-width="1.3"/>
<text x="1089.3" y="413.9" font-size="4.2" fill="#3a3200" text-anchor="middle" font-weight="bold">C324</text>
<rect x="1085" y="409.5" width="8" height="5.5" fill="#fff"/>
<text x="1089" y="414" font-size="3.6" fill="#446" text-anchor="middle" font-weight="bold">C324</text>
<rect x="1079" y="419.8" width="10.3" height="4.2" fill="#ffff00" stroke="#eea070" stroke-width="0.5"/>
<text x="1084.2" y="423" font-size="3.2" fill="#3a3200" text-anchor="middle" font-weight="bold">C3217</text>
<rect x="1090" y="419.8" width="10" height="4.2" fill="#ffff00" stroke="#eea070" stroke-width="0.5"/>
<text x="1095" y="423" font-size="3.1" fill="#3a3200" text-anchor="middle" font-weight="bold">R3204</text>
<rect x="1079" y="432.5" width="10.3" height="4.2" fill="#ffff00" stroke="#eea070" stroke-width="0.5"/>
<text x="1084.2" y="435.7" font-size="3.2" fill="#3a3200" text-anchor="middle" font-weight="bold">C3291</text>
<rect x="1090" y="432.5" width="10" height="4.2" fill="#ffff00" stroke="#eea070" stroke-width="0.5"/>
<text x="1095" y="435.7" font-size="3.1" fill="#3a3200" text-anchor="middle" font-weight="bold">R3206</text>
<rect x="1079" y="437.6" width="10.3" height="4.2" fill="#ffff00" stroke="#eea070" stroke-width="0.5"/>
<text x="1084.2" y="440.8" font-size="3.2" fill="#3a3200" text-anchor="middle" font-weight="bold">R3212</text>
<rect x="1090" y="437.6" width="10" height="4.2" fill="#ffff00" stroke="#eea070" stroke-width="0.5"/>
<text x="1095" y="440.8" font-size="3.1" fill="#3a3200" text-anchor="middle" font-weight="bold">C3282</text>
<rect x="1079" y="442.7" width="10.3" height="4.2" fill="#ffff00" stroke="#eea070" stroke-width="0.5"/>
<text x="1084.2" y="445.9" font-size="3.2" fill="#3a3200" text-anchor="middle" font-weight="bold">R5297</text>
<rect x="1090" y="442.7" width="10" height="4.2" fill="#ffff00" stroke="#eea070" stroke-width="0.5"/>
<text x="1095" y="445.9" font-size="3.1" fill="#3a3200" text-anchor="middle" font-weight="bold">C3284</text>
<rect x="1079" y="447.8" width="10.3" height="4.2" fill="#ffff00" stroke="#eea070" stroke-width="0.5"/>
<text x="1084.2" y="451" font-size="3.2" fill="#3a3200" text-anchor="middle" font-weight="bold">R3230</text>
<rect x="1090" y="447.8" width="10" height="4.2" fill="#ffff00" stroke="#eea070" stroke-width="0.5"/>
<text x="1095" y="451" font-size="3.1" fill="#3a3200" text-anchor="middle" font-weight="bold">R3283</text>
<rect x="1079" y="425.5" width="10.3" height="4.1" fill="#ffff00"/>
<text x="1084.2" y="428.7" font-size="3.2" fill="#3a3200" text-anchor="middle" font-weight="bold">C3215</text>
<rect x="1089" y="453.3" width="11" height="4.1" fill="#ffff00"/>
<text x="1094.5" y="456.5" font-size="3.2" fill="#3a3200" text-anchor="middle" font-weight="bold">C3206</text>
<rect x="983.3" y="482.5" width="6.4" height="11.6" fill="#ffff00"/>
<rect x="1002.1" y="477.6" width="3.7" height="9.8" fill="#ffff00" stroke="#eea070" stroke-width="0.5"/>
<text x="1004" y="483.5" font-size="2.9" fill="#3a3200" text-anchor="middle" transform="rotate(-90 1004 483.5)" font-weight="bold">L3508</text>
<rect x="1007.4" y="477" width="13.4" height="10.4" fill="#ffff00" rx="2"/>
<path d="M1016.8 477 H1019.8 Q1021.8 482.2 1019.8 487.4 H1016.8" fill="none" stroke="#e81414" stroke-width="1.4"/>
<text x="1014.1" y="483.4" font-size="3.2" fill="#553" text-anchor="middle" font-weight="bold">U3240</text>
<rect x="1027.8" y="474.6" width="4" height="4.8" fill="#ffff00"/>
<rect x="1036.1" y="469.7" width="3.7" height="9.1" fill="#ffff00" stroke="#eea070" stroke-width="0.5"/>
<text x="1037.9" y="475.3" font-size="2.9" fill="#3a3200" text-anchor="middle" transform="rotate(-90 1037.9 475.3)" font-weight="bold">C1551</text>
<rect x="1042" y="469.7" width="3.9" height="9.1" fill="#ffff00" stroke="#eea070" stroke-width="0.5"/>
<text x="1044" y="475.3" font-size="2.9" fill="#3a3200" text-anchor="middle" transform="rotate(-90 1044 475.3)" font-weight="bold">C4609</text>
<rect x="1023.9" y="482.1" width="11" height="4.1" fill="#ffff00" stroke="#eea070" stroke-width="0.5"/>
<text x="1029.4" y="485.3" font-size="3.2" fill="#3a3200" text-anchor="middle" font-weight="bold">C3234</text>
<rect x="1038.6" y="482.1" width="9.7" height="4.1" fill="#ffff00" stroke="#eea070" stroke-width="0.5"/>
<text x="1043.4" y="485.2" font-size="3" fill="#3a3200" text-anchor="middle" font-weight="bold">L3387</text>
<rect x="992.1" y="490.2" width="9.6" height="4" fill="#ffff00" stroke="#eea070" stroke-width="0.5"/>
<text x="996.9" y="493.3" font-size="3" fill="#3a3200" text-anchor="middle" font-weight="bold">C1900</text>
<rect x="1002.3" y="490.2" width="9.6" height="4" fill="#ffff00" stroke="#eea070" stroke-width="0.5"/>
<text x="1007.1" y="493.3" font-size="3" fill="#3a3200" text-anchor="middle" font-weight="bold">R5921</text>
<rect x="1012.5" y="490.2" width="9.6" height="4" fill="#ffff00" stroke="#eea070" stroke-width="0.5"/>
<text x="1017.3" y="493.3" font-size="3" fill="#3a3200" text-anchor="middle" font-weight="bold">C1838</text>
<rect x="1023.9" y="488.6" width="7.8" height="4.1" fill="#ffff00" stroke="#eea070" stroke-width="0.5"/>
<text x="1027.8" y="491.7" font-size="2.9" fill="#3a3200" text-anchor="middle" font-weight="bold">C5643</text>
<rect x="1032.2" y="488.6" width="7.8" height="4.1" fill="#ffff00" stroke="#eea070" stroke-width="0.5"/>
<text x="1036.1" y="491.7" font-size="2.9" fill="#3a3200" text-anchor="middle" font-weight="bold">C5395</text>
<rect x="1040.5" y="488.6" width="7.8" height="4.1" fill="#ffff00" stroke="#eea070" stroke-width="0.5"/>
<text x="1044.4" y="491.7" font-size="2.9" fill="#3a3200" text-anchor="middle" font-weight="bold">C3978</text>
<rect x="1023.9" y="493.4" width="11.9" height="3.9" fill="#ffff00" stroke="#eea070" stroke-width="0.5"/>
<text x="1029.9" y="496.4" font-size="3" fill="#3a3200" text-anchor="middle" font-weight="bold">C1576</text>
<rect x="1036.3" y="493.4" width="12" height="3.9" fill="#ffff00" stroke="#eea070" stroke-width="0.5"/>
<text x="1042.3" y="496.4" font-size="3" fill="#3a3200" text-anchor="middle" font-weight="bold">C6030</text>
<rect x="983" y="499.6" width="19.1" height="15.3" fill="#ffff00" stroke="#e81414" stroke-width="1.7"/>
<rect x="988.7" y="501.1" width="2.3" height="12.3" fill="#ffffa8"/>
<rect x="994.5" y="501.1" width="2.3" height="12.3" fill="#ffffa8"/>
<rect x="984.5" y="506" width="16.1" height="2.4" fill="#ffffa8"/>
<path d="M980.5 511.9 V517.1 H986" fill="none" stroke="#e81414" stroke-width="1.3"/>
<text x="992.5" y="508.4" font-size="3.5" fill="#664" text-anchor="middle" font-weight="bold">U3204</text>
<rect x="1005.3" y="499.6" width="19.2" height="15.3" fill="#ffff00" stroke="#e81414" stroke-width="1.7"/>
<rect x="1011.1" y="501.1" width="2.3" height="12.3" fill="#ffffa8"/>
<rect x="1016.8" y="501.1" width="2.3" height="12.3" fill="#ffffa8"/>
<rect x="1006.8" y="506" width="16.2" height="2.4" fill="#ffffa8"/>
<path d="M1002.8 511.9 V517.1 H1008.3" fill="none" stroke="#e81414" stroke-width="1.3"/>
<text x="1014.9" y="508.4" font-size="3.5" fill="#664" text-anchor="middle" font-weight="bold">U3205</text>
<rect x="1027.8" y="499.6" width="20.3" height="15.3" fill="#ffff00" stroke="#e81414" stroke-width="1.7"/>
<rect x="1033.9" y="501.1" width="2.4" height="12.3" fill="#ffffa8"/>
<rect x="1040" y="501.1" width="2.4" height="12.3" fill="#ffffa8"/>
<rect x="1029.3" y="506" width="17.3" height="2.4" fill="#ffffa8"/>
<path d="M1025.3 511.9 V517.1 H1030.8" fill="none" stroke="#e81414" stroke-width="1.3"/>
<text x="1037.9" y="508.4" font-size="3.5" fill="#664" text-anchor="middle" font-weight="bold">U3207</text>
<rect x="980.5" y="520.4" width="12" height="3.8" fill="#ffff00"/>
<text x="986.5" y="523.4" font-size="3" fill="#3a3200" text-anchor="middle" font-weight="bold">L3236</text>
<rect x="1004.3" y="518.6" width="9.5" height="3.8" fill="#ffff00" stroke="#eea070" stroke-width="0.5"/>
<text x="1009.1" y="521.6" font-size="3" fill="#3a3200" text-anchor="middle" font-weight="bold">L2216</text>
<rect x="1014.3" y="518.6" width="9.5" height="3.8" fill="#ffff00" stroke="#eea070" stroke-width="0.5"/>
<text x="1019.1" y="521.6" font-size="3" fill="#3a3200" text-anchor="middle" font-weight="bold">R3845</text>
<rect x="1027.8" y="518.6" width="9.9" height="3.8" fill="#ffff00" stroke="#eea070" stroke-width="0.5"/>
<text x="1032.7" y="521.6" font-size="3" fill="#3a3200" text-anchor="middle" font-weight="bold">R4884</text>
<rect x="1038.2" y="518.6" width="9.8" height="3.8" fill="#ffff00" stroke="#eea070" stroke-width="0.5"/>
<text x="1043.1" y="521.6" font-size="3" fill="#3a3200" text-anchor="middle" font-weight="bold">C1944</text>
<rect x="981.7" y="525.3" width="19.6" height="14.7" fill="#ffff00" stroke="#e81414" stroke-width="1.7"/>
<rect x="987.6" y="526.8" width="2.4" height="11.7" fill="#ffffa8"/>
<rect x="993.5" y="526.8" width="2.4" height="11.7" fill="#ffffa8"/>
<rect x="983.2" y="531.5" width="16.6" height="2.4" fill="#ffffa8"/>
<path d="M979.2 537 V542.2 H984.7" fill="none" stroke="#e81414" stroke-width="1.3"/>
<text x="991.5" y="533.9" font-size="3.5" fill="#664" text-anchor="middle" font-weight="bold">U323A</text>
<rect x="1005.3" y="525.3" width="19.2" height="14.7" fill="#ffff00" stroke="#e81414" stroke-width="1.7"/>
<rect x="1011.1" y="526.8" width="2.3" height="11.7" fill="#ffffa8"/>
<rect x="1016.8" y="526.8" width="2.3" height="11.7" fill="#ffffa8"/>
<rect x="1006.8" y="531.5" width="16.2" height="2.4" fill="#ffffa8"/>
<path d="M1002.8 537 V542.2 H1008.3" fill="none" stroke="#e81414" stroke-width="1.3"/>
<text x="1014.9" y="533.9" font-size="3.5" fill="#664" text-anchor="middle" font-weight="bold">U3208</text>
<rect x="1027.8" y="525.3" width="20.3" height="14.7" fill="#ffff00" stroke="#e81414" stroke-width="1.7"/>
<rect x="1033.9" y="526.8" width="2.4" height="11.7" fill="#ffffa8"/>
<rect x="1040" y="526.8" width="2.4" height="11.7" fill="#ffffa8"/>
<rect x="1029.3" y="531.5" width="17.3" height="2.4" fill="#ffffa8"/>
<path d="M1025.3 537 V542.2 H1030.8" fill="none" stroke="#e81414" stroke-width="1.3"/>
<text x="1037.9" y="533.9" font-size="3.5" fill="#664" text-anchor="middle" font-weight="bold">U3206</text>
<rect x="1008.6" y="544" width="9.4" height="3.5" fill="#ffff00" stroke="#eea070" stroke-width="0.5"/>
<text x="1013.3" y="546.8" font-size="2.9" fill="#3a3200" text-anchor="middle" font-weight="bold">L4817</text>
<rect x="1018.5" y="544" width="9.3" height="3.5" fill="#ffff00" stroke="#eea070" stroke-width="0.5"/>
<text x="1023.1" y="546.8" font-size="2.9" fill="#3a3200" text-anchor="middle" font-weight="bold">L4963</text>
<rect x="1034.3" y="546.4" width="10.4" height="3.8" fill="#ffff00" stroke="#eea070" stroke-width="0.5"/>
<text x="1039.5" y="549.4" font-size="3" fill="#3a3200" text-anchor="middle" font-weight="bold">L3300</text>
<rect x="1028.5" y="551.6" width="9.7" height="4.5" fill="#ffff00" stroke="#eea070" stroke-width="0.5"/>
<text x="1033.3" y="554.9" font-size="3" fill="#3a3200" text-anchor="middle" font-weight="bold">R1703</text>
<rect x="1038.7" y="551.6" width="9.7" height="4.5" fill="#ffff00" stroke="#eea070" stroke-width="0.5"/>
<text x="1043.5" y="554.9" font-size="3" fill="#3a3200" text-anchor="middle" font-weight="bold">C1837</text>
<rect x="1028.5" y="556.6" width="9.7" height="4.5" fill="#ffff00" stroke="#eea070" stroke-width="0.5"/>
<text x="1033.3" y="559.9" font-size="3" fill="#3a3200" text-anchor="middle" font-weight="bold">R3168</text>
<rect x="1038.7" y="556.6" width="9.7" height="4.5" fill="#ffff00" stroke="#eea070" stroke-width="0.5"/>
<text x="1043.5" y="559.9" font-size="3" fill="#3a3200" text-anchor="middle" font-weight="bold">L6669</text>
<rect x="1028.5" y="561.5" width="9.7" height="4.5" fill="#ffff00" stroke="#eea070" stroke-width="0.5"/>
<text x="1033.3" y="564.8" font-size="3" fill="#3a3200" text-anchor="middle" font-weight="bold">C5229</text>
<rect x="1038.7" y="561.5" width="9.7" height="4.5" fill="#ffff00" stroke="#eea070" stroke-width="0.5"/>
<text x="1043.5" y="564.8" font-size="3" fill="#3a3200" text-anchor="middle" font-weight="bold">C2681</text>
<text x="987" y="556" font-size="3.1" fill="#3a3200" text-anchor="middle" transform="rotate(-90 987 556)" font-weight="bold">C3203L3217</text>
<rect x="984.5" y="546" width="4.6" height="19" fill="#ffff00" fill-opacity=".6"/>
<rect x="991" y="545" width="15" height="18.9" fill="#ffff00" stroke="#e81414" stroke-width="1.7"/>
<rect x="995.5" y="546.5" width="1.8" height="15.9" fill="#ffffa8"/>
<rect x="1000" y="546.5" width="1.8" height="15.9" fill="#ffffa8"/>
<rect x="992.5" y="552.9" width="12" height="3" fill="#ffffa8"/>
<text x="998.5" y="555.7" font-size="3.5" fill="#664" text-anchor="middle" transform="rotate(-90 998.5 555.7)" font-weight="bold">U3203</text>
<rect x="1009.9" y="549.7" width="15.4" height="19" fill="#ffff00" stroke="#e81414" stroke-width="1.7"/>
<rect x="1014.5" y="551.2" width="1.8" height="16" fill="#ffffa8"/>
<rect x="1019.1" y="551.2" width="1.8" height="16" fill="#ffffa8"/>
<rect x="1011.4" y="557.7" width="12.4" height="3" fill="#ffffa8"/>
<path d="M1007.4 565.7 V570.9 H1012.9" fill="none" stroke="#e81414" stroke-width="1.3"/>
<text x="1017.6" y="560.4" font-size="3.5" fill="#664" text-anchor="middle" transform="rotate(-90 1017.6 560.4)" font-weight="bold">U3209</text>
<rect x="991.5" y="568.5" width="15.9" height="5.5" fill="#ffff00" stroke="#eea070" stroke-width="0.5"/>
<text x="999.5" y="572.8" font-size="4.2" fill="#3a3200" text-anchor="middle" font-weight="bold">U3222</text>
<rect x="1008.5" y="572.8" width="8.5" height="4.2" fill="#ffff00"/>
<text x="1012.8" y="575.9" font-size="2.9" fill="#3a3200" text-anchor="middle" font-weight="bold">L3271</text>
<rect x="1028.8" y="568.7" width="9.7" height="4.3" fill="#ffff00" stroke="#eea070" stroke-width="0.5"/>
<text x="1033.7" y="571.9" font-size="3" fill="#3a3200" text-anchor="middle" font-weight="bold">L3256</text>
<rect x="1019" y="573.6" width="9.5" height="4.4" fill="#ffff00" stroke="#eea070" stroke-width="0.5"/>
<text x="1023.8" y="576.9" font-size="2.9" fill="#3a3200" text-anchor="middle" font-weight="bold">R2200</text>
<rect x="1029" y="573.6" width="9.5" height="4.4" fill="#ffff00" stroke="#eea070" stroke-width="0.5"/>
<text x="1033.8" y="576.9" font-size="2.9" fill="#3a3200" text-anchor="middle" font-weight="bold">C5326</text>
<rect x="1004.5" y="578.2" width="11" height="4" fill="#ffff00"/>
<text x="1010" y="581.3" font-size="3.1" fill="#3a3200" text-anchor="middle" font-weight="bold">L3328</text>
<rect x="1017" y="578.6" width="4.9" height="9.7" fill="#ffff00" stroke="#eea070" stroke-width="0.5"/>
<text x="1019.4" y="584.5" font-size="3" fill="#3a3200" text-anchor="middle" transform="rotate(-90 1019.4 584.5)" font-weight="bold">R6266</text>
<rect x="1022.5" y="578.6" width="4.8" height="9.7" fill="#ffff00" stroke="#eea070" stroke-width="0.5"/>
<text x="1025" y="584.5" font-size="3" fill="#3a3200" text-anchor="middle" transform="rotate(-90 1025 584.5)" font-weight="bold">C6703</text>
<rect x="1028.1" y="578.6" width="4.8" height="9.7" fill="#ffff00" stroke="#eea070" stroke-width="0.5"/>
<text x="1030.5" y="584.5" font-size="3" fill="#3a3200" text-anchor="middle" transform="rotate(-90 1030.5 584.5)" font-weight="bold">R5246</text>
<rect x="1033.7" y="578.6" width="4.8" height="9.7" fill="#ffff00" stroke="#eea070" stroke-width="0.5"/>
<text x="1036.1" y="584.5" font-size="3" fill="#3a3200" text-anchor="middle" transform="rotate(-90 1036.1 584.5)" font-weight="bold">R2368</text>
<rect x="992.5" y="583.4" width="16" height="18.9" fill="#ffff00" stroke="#e81414" stroke-width="1.7"/>
<rect x="997.3" y="584.9" width="1.9" height="15.9" fill="#ffffa8"/>
<rect x="1002.1" y="584.9" width="1.9" height="15.9" fill="#ffffa8"/>
<rect x="994" y="591.3" width="13" height="3" fill="#ffffa8"/>
<path d="M990 599.3 V604.5 H995.5" fill="none" stroke="#e81414" stroke-width="1.3"/>
<text x="1000.5" y="594" font-size="3.5" fill="#664" text-anchor="middle" transform="rotate(-90 1000.5 594)" font-weight="bold">U3204</text>
<text x="988.5" y="598" font-size="3.2" fill="#3a3200" text-anchor="middle" transform="rotate(-90 988.5 598)" font-weight="bold">L3343</text>
<rect x="1010" y="585" width="3.4" height="15" fill="#ffff00" stroke="#eea070" stroke-width="0.5"/>
<text x="1011.7" y="593.5" font-size="2.9" fill="#3a3200" text-anchor="middle" transform="rotate(-90 1011.7 593.5)" font-weight="bold">R2825</text>
<rect x="1015.5" y="589" width="10.9" height="4.3" fill="#ffff00" stroke="#eea070" stroke-width="0.5"/>
<text x="1021" y="592.4" font-size="3.4" fill="#3a3200" text-anchor="middle" font-weight="bold">R6213</text>
<rect x="1026.9" y="589" width="10.9" height="4.3" fill="#ffff00" stroke="#eea070" stroke-width="0.5"/>
<text x="1032.4" y="592.4" font-size="3.4" fill="#3a3200" text-anchor="middle" font-weight="bold">C6023</text>
<rect x="1012.7" y="594.6" width="9.8" height="4.4" fill="#ffff00" stroke="#eea070" stroke-width="0.5"/>
<text x="1017.6" y="597.9" font-size="3" fill="#3a3200" text-anchor="middle" font-weight="bold">L3230</text>
<rect x="1026" y="594.6" width="12" height="4.4" fill="#ffff00" stroke="#eea070" stroke-width="0.5"/>
<text x="1032" y="598" font-size="3.4" fill="#3a3200" text-anchor="middle" font-weight="bold">C3229</text>
<rect x="1012" y="600.2" width="12.8" height="4.3" fill="#ffff00" stroke="#eea070" stroke-width="0.5"/>
<text x="1018.4" y="603.6" font-size="3.4" fill="#3a3200" text-anchor="middle" font-weight="bold">C2961</text>
<rect x="1025.2" y="600.2" width="12.8" height="4.3" fill="#ffff00" stroke="#eea070" stroke-width="0.5"/>
<text x="1031.6" y="603.6" font-size="3.4" fill="#3a3200" text-anchor="middle" font-weight="bold">L2857</text>
<rect x="991.5" y="605.3" width="11.2" height="4.3" fill="#ffff00" stroke="#eea070" stroke-width="0.5"/>
<text x="997.1" y="608.7" font-size="3.4" fill="#3a3200" text-anchor="middle" font-weight="bold">C5240</text>
<rect x="1003.2" y="605.3" width="11.2" height="4.3" fill="#ffff00" stroke="#eea070" stroke-width="0.5"/>
<text x="1008.8" y="608.7" font-size="3.4" fill="#3a3200" text-anchor="middle" font-weight="bold">L3912</text>
<rect x="1014.9" y="605.3" width="11.2" height="4.3" fill="#ffff00" stroke="#eea070" stroke-width="0.5"/>
<text x="1020.5" y="608.7" font-size="3.4" fill="#3a3200" text-anchor="middle" font-weight="bold">C1228</text>
<rect x="1026.6" y="605.3" width="11.2" height="4.3" fill="#ffff00" stroke="#eea070" stroke-width="0.5"/>
<text x="1032.2" y="608.7" font-size="3.4" fill="#3a3200" text-anchor="middle" font-weight="bold">R4868</text>
<rect x="996" y="610.6" width="10.4" height="4.4" fill="#ffff00" stroke="#eea070" stroke-width="0.5"/>
<text x="1001.2" y="614" font-size="3.2" fill="#3a3200" text-anchor="middle" font-weight="bold">L3225</text>
<rect x="1007.8" y="610.3" width="4.3" height="10.1" fill="#ffff00" stroke="#eea070" stroke-width="0.5"/>
<text x="1010" y="616.5" font-size="3.1" fill="#3a3200" text-anchor="middle" transform="rotate(-90 1010 616.5)" font-weight="bold">R2586</text>
<rect x="1012.8" y="610.3" width="4.3" height="10.1" fill="#ffff00" stroke="#eea070" stroke-width="0.5"/>
<text x="1015" y="616.5" font-size="3.1" fill="#3a3200" text-anchor="middle" transform="rotate(-90 1015 616.5)" font-weight="bold">R4663</text>
<rect x="1017.8" y="610.3" width="4.3" height="10.1" fill="#ffff00" stroke="#eea070" stroke-width="0.5"/>
<text x="1020" y="616.5" font-size="3.1" fill="#3a3200" text-anchor="middle" transform="rotate(-90 1020 616.5)" font-weight="bold">R3987</text>
<rect x="1022.9" y="610.3" width="4.3" height="10.1" fill="#ffff00" stroke="#eea070" stroke-width="0.5"/>
<text x="1025" y="616.5" font-size="3.1" fill="#3a3200" text-anchor="middle" transform="rotate(-90 1025 616.5)" font-weight="bold">C2806</text>
<rect x="1027.9" y="610.3" width="4.3" height="10.1" fill="#ffff00" stroke="#eea070" stroke-width="0.5"/>
<text x="1030" y="616.5" font-size="3.1" fill="#3a3200" text-anchor="middle" transform="rotate(-90 1030 616.5)" font-weight="bold">C2858</text>
<rect x="1032.9" y="610.3" width="4.3" height="10.1" fill="#ffff00" stroke="#eea070" stroke-width="0.5"/>
<text x="1035" y="616.5" font-size="3.1" fill="#3a3200" text-anchor="middle" transform="rotate(-90 1035 616.5)" font-weight="bold">L2611</text>
<rect x="1041" y="567.5" width="47" height="50.8" fill="#ffff00" stroke="#f0a0b0" stroke-width="0.6"/>
<rect x="1042.500" y="569" width="44" height="48" fill="url(#bga)"/>
<path d="M1041.2 577.3 V567.8 H1050.7 M1078.3 567.8 H1087.8 V577.3 M1041.2 608.5 V618 H1050.7 M1078.3 618 H1087.8 V608.5 " fill="none" stroke="#e81414" stroke-width="2.6"/>
<path d="M1038.500 606 V620.800 H1052" fill="none" stroke="#e81414" stroke-width="1.5"/>
<text x="1067.5" y="593" font-size="8.8" fill="#6e6e6e" text-anchor="middle" transform="rotate(-90 1067.5 593)" letter-spacing="-.3">U3001</text>
<rect x="1063.3" y="619.7" width="10" height="4.3" fill="#ffff00" stroke="#eea070" stroke-width="0.5"/>
<text x="1068.3" y="623" font-size="3.1" fill="#3a3200" text-anchor="middle" font-weight="bold">R2674</text>
<rect x="1073.8" y="619.7" width="10" height="4.3" fill="#ffff00" stroke="#eea070" stroke-width="0.5"/>
<text x="1078.8" y="623" font-size="3.1" fill="#3a3200" text-anchor="middle" font-weight="bold">L6112</text>
<rect x="1084.4" y="619.7" width="10" height="4.3" fill="#ffff00" stroke="#eea070" stroke-width="0.5"/>
<text x="1089.4" y="623" font-size="3.1" fill="#3a3200" text-anchor="middle" font-weight="bold">C4927</text>
<rect x="1090.2" y="608.5" width="4.2" height="10.5" fill="#ffff00" stroke="#eea070" stroke-width="0.5"/>
<text x="1092.3" y="614.9" font-size="3.3" fill="#3a3200" text-anchor="middle" transform="rotate(-90 1092.3 614.9)" font-weight="bold">R6268</text>
<rect x="1044.1" y="626" width="4.2" height="9" fill="#ffff00" stroke="#eea070" stroke-width="0.5"/>
<text x="1046.2" y="631.5" font-size="2.9" fill="#3a3200" text-anchor="middle" transform="rotate(-90 1046.2 631.5)" font-weight="bold">C3345</text>
<rect x="1048.5" y="635.8" width="4.8" height="9.8" fill="#ffff00" stroke="#eea070" stroke-width="0.5"/>
<text x="1050.9" y="641.8" font-size="3" fill="#3a3200" text-anchor="middle" transform="rotate(-90 1050.9 641.8)" font-weight="bold">C6411</text>
<rect x="1054" y="635.8" width="4.8" height="9.8" fill="#ffff00" stroke="#eea070" stroke-width="0.5"/>
<text x="1056.4" y="641.8" font-size="3" fill="#3a3200" text-anchor="middle" transform="rotate(-90 1056.4 641.8)" font-weight="bold">C4182</text>
<rect x="1059.6" y="635.8" width="4.8" height="9.8" fill="#ffff00" stroke="#eea070" stroke-width="0.5"/>
<text x="1062" y="641.8" font-size="3" fill="#3a3200" text-anchor="middle" transform="rotate(-90 1062 641.8)" font-weight="bold">C4916</text>
<rect x="1065.8" y="635.8" width="12.6" height="9.1" fill="#ffff00" rx="2"/>
<path d="M1074.4 635.8 H1077.4 Q1079.4 640.3 1077.4 644.9 H1074.4" fill="none" stroke="#e81414" stroke-width="1.4"/>
<text x="1072.1" y="641.5" font-size="3.2" fill="#553" text-anchor="middle" font-weight="bold">U3302</text>
<rect x="1079.7" y="635.8" width="4.2" height="9.8" fill="#ffff00" stroke="#eea070" stroke-width="0.5"/>
<text x="1081.8" y="641.8" font-size="3" fill="#3a3200" text-anchor="middle" transform="rotate(-90 1081.8 641.8)" font-weight="bold">C4554</text>
<rect x="1084.6" y="635.8" width="4.2" height="9.8" fill="#ffff00" stroke="#eea070" stroke-width="0.5"/>
<text x="1086.7" y="641.8" font-size="3" fill="#3a3200" text-anchor="middle" transform="rotate(-90 1086.7 641.8)" font-weight="bold">R1710</text>
<rect x="1093" y="635.8" width="5.9" height="9.8" fill="#ffff00" stroke="#eea070" stroke-width="0.5"/>
<text x="1095.9" y="641.8" font-size="3" fill="#3a3200" text-anchor="middle" transform="rotate(-90 1095.9 641.8)" font-weight="bold">L4794</text>
<rect x="1099.6" y="635.8" width="5.9" height="9.8" fill="#ffff00" stroke="#eea070" stroke-width="0.5"/>
<text x="1102.5" y="641.8" font-size="3" fill="#3a3200" text-anchor="middle" transform="rotate(-90 1102.5 641.8)" font-weight="bold">L1695</text>
<rect x="1106.1" y="635.8" width="5.9" height="9.8" fill="#ffff00" stroke="#eea070" stroke-width="0.5"/>
<text x="1109.1" y="641.8" font-size="3" fill="#3a3200" text-anchor="middle" transform="rotate(-90 1109.1 641.8)" font-weight="bold">C2392</text>
<rect x="1108" y="561.7" width="9.7" height="4.4" fill="#ffff00" stroke="#eea070" stroke-width="0.5"/>
<text x="1112.8" y="565" font-size="3" fill="#3a3200" text-anchor="middle" font-weight="bold">C1225</text>
<rect x="1118.2" y="561.7" width="9.7" height="4.4" fill="#ffff00" stroke="#eea070" stroke-width="0.5"/>
<text x="1123" y="565" font-size="3" fill="#3a3200" text-anchor="middle" font-weight="bold">C5839</text>
<rect x="1128.3" y="561.7" width="9.7" height="4.4" fill="#ffff00" stroke="#eea070" stroke-width="0.5"/>
<text x="1133.2" y="565" font-size="3" fill="#3a3200" text-anchor="middle" font-weight="bold">L6372</text>
<rect x="1139" y="561" width="10" height="4.4" fill="#ffff00" stroke="#eea070" stroke-width="0.5"/>
<text x="1144" y="564.3" font-size="3.1" fill="#3a3200" text-anchor="middle" font-weight="bold">C6010</text>
<rect x="1149.5" y="561" width="10" height="4.4" fill="#ffff00" stroke="#eea070" stroke-width="0.5"/>
<text x="1154.5" y="564.3" font-size="3.1" fill="#3a3200" text-anchor="middle" font-weight="bold">L6384</text>
<rect x="1160" y="561" width="10" height="4.4" fill="#ffff00" stroke="#eea070" stroke-width="0.5"/>
<text x="1165" y="564.3" font-size="3.1" fill="#3a3200" text-anchor="middle" font-weight="bold">R2277</text>
<rect x="1088.6" y="567" width="9.5" height="4.8" fill="#ffff00" stroke="#eea070" stroke-width="0.5"/>
<text x="1093.3" y="570.5" font-size="2.9" fill="#3a3200" text-anchor="middle" font-weight="bold">C1175</text>
<rect x="1088.6" y="572.6" width="9.5" height="4.8" fill="#ffff00" stroke="#eea070" stroke-width="0.5"/>
<text x="1093.3" y="576.1" font-size="2.9" fill="#3a3200" text-anchor="middle" font-weight="bold">C6950</text>
<rect x="1088.6" y="578.2" width="9.5" height="4.8" fill="#ffff00" stroke="#eea070" stroke-width="0.5"/>
<text x="1093.3" y="581.7" font-size="2.9" fill="#3a3200" text-anchor="middle" font-weight="bold">C5313</text>
<rect x="1100.3" y="569.7" width="11.7" height="8.8" fill="#ffff00" rx="2"/>
<path d="M1108 569.7 H1111 Q1113 574.1 1111 578.5 H1108" fill="none" stroke="#e81414" stroke-width="1.4"/>
<text x="1106.2" y="575.3" font-size="3.2" fill="#553" text-anchor="middle" font-weight="bold">U3305</text>
<rect x="1114" y="571" width="3.5" height="9" fill="#ffff00" stroke="#eea070" stroke-width="0.5"/>
<text x="1115.8" y="576.5" font-size="2.9" fill="#3a3200" text-anchor="middle" transform="rotate(-90 1115.8 576.5)" font-weight="bold">C4553</text>
<rect x="1118.5" y="570.5" width="10" height="4.2" fill="#ffff00" stroke="#eea070" stroke-width="0.5"/>
<text x="1123.5" y="573.7" font-size="3.1" fill="#3a3200" text-anchor="middle" font-weight="bold">C2728</text>
<rect x="1118.5" y="575.3" width="10" height="4.2" fill="#ffff00" stroke="#eea070" stroke-width="0.5"/>
<text x="1123.5" y="578.5" font-size="3.1" fill="#3a3200" text-anchor="middle" font-weight="bold">C3063</text>
<rect x="1130" y="571" width="3.8" height="9" fill="#ffff00" stroke="#eea070" stroke-width="0.5"/>
<text x="1131.9" y="576.5" font-size="2.9" fill="#3a3200" text-anchor="middle" transform="rotate(-90 1131.9 576.5)" font-weight="bold">C3399</text>
<rect x="1135" y="571" width="3.8" height="9" fill="#ffff00" stroke="#eea070" stroke-width="0.5"/>
<text x="1136.9" y="576.5" font-size="2.9" fill="#3a3200" text-anchor="middle" transform="rotate(-90 1136.9 576.5)" font-weight="bold">C5804</text>
<rect x="1104.7" y="581.4" width="10.1" height="13.8" fill="#ffff00" rx="2"/>
<path d="M1104.7 585.4 V582.4 Q1109.8 579.9 1114.8 582.4 V585.4" fill="none" stroke="#e81414" stroke-width="1.4"/>
<text x="1109.8" y="589.5" font-size="3.2" fill="#553" text-anchor="middle" transform="rotate(-90 1109.8 589.5)" font-weight="bold">U3306</text>
<rect x="1116.3" y="581.4" width="10.1" height="13.8" fill="#ffff00" rx="2"/>
<path d="M1116.3 585.4 V582.4 Q1121.3 579.9 1126.4 582.4 V585.4" fill="none" stroke="#e81414" stroke-width="1.4"/>
<text x="1121.3" y="589.5" font-size="3.2" fill="#553" text-anchor="middle" transform="rotate(-90 1121.3 589.5)" font-weight="bold">U3303</text>
<rect x="1128" y="581.4" width="10.1" height="13.8" fill="#ffff00" rx="2"/>
<path d="M1128 585.4 V582.4 Q1133 579.9 1138.1 582.4 V585.4" fill="none" stroke="#e81414" stroke-width="1.4"/>
<text x="1133" y="589.5" font-size="3.2" fill="#553" text-anchor="middle" transform="rotate(-90 1133 589.5)" font-weight="bold">U3302</text>
<rect x="1098" y="596" width="9.8" height="4.7" fill="#ffff00" stroke="#eea070" stroke-width="0.5"/>
<text x="1102.9" y="599.5" font-size="3.1" fill="#3a3200" text-anchor="middle" font-weight="bold">R3124</text>
<rect x="1108.3" y="596" width="9.8" height="4.7" fill="#ffff00" stroke="#eea070" stroke-width="0.5"/>
<text x="1113.3" y="599.5" font-size="3.1" fill="#3a3200" text-anchor="middle" font-weight="bold">L2073</text>
<rect x="1118.7" y="596" width="9.9" height="4.7" fill="#ffff00" stroke="#eea070" stroke-width="0.5"/>
<text x="1123.6" y="599.5" font-size="3.1" fill="#3a3200" text-anchor="middle" font-weight="bold">C3898</text>
<rect x="1129.1" y="596" width="9.8" height="4.7" fill="#ffff00" stroke="#eea070" stroke-width="0.5"/>
<text x="1134" y="599.5" font-size="3.1" fill="#3a3200" text-anchor="middle" font-weight="bold">L6426</text>
<rect x="1098" y="601.2" width="9.8" height="4.7" fill="#ffff00" stroke="#eea070" stroke-width="0.5"/>
<text x="1102.9" y="604.7" font-size="3.1" fill="#3a3200" text-anchor="middle" font-weight="bold">L5109</text>
<rect x="1108.3" y="601.2" width="9.8" height="4.7" fill="#ffff00" stroke="#eea070" stroke-width="0.5"/>
<text x="1113.3" y="604.7" font-size="3.1" fill="#3a3200" text-anchor="middle" font-weight="bold">C5356</text>
<rect x="1118.7" y="601.2" width="9.9" height="4.7" fill="#ffff00" stroke="#eea070" stroke-width="0.5"/>
<text x="1123.6" y="604.7" font-size="3.1" fill="#3a3200" text-anchor="middle" font-weight="bold">C5288</text>
<rect x="1129.1" y="601.2" width="9.8" height="4.7" fill="#ffff00" stroke="#eea070" stroke-width="0.5"/>
<text x="1134" y="604.7" font-size="3.1" fill="#3a3200" text-anchor="middle" font-weight="bold">C4605</text>
<rect x="1098" y="606.5" width="9.8" height="4.7" fill="#ffff00" stroke="#eea070" stroke-width="0.5"/>
<text x="1102.9" y="609.9" font-size="3.1" fill="#3a3200" text-anchor="middle" font-weight="bold">C5985</text>
<rect x="1108.3" y="606.5" width="9.8" height="4.7" fill="#ffff00" stroke="#eea070" stroke-width="0.5"/>
<text x="1113.3" y="609.9" font-size="3.1" fill="#3a3200" text-anchor="middle" font-weight="bold">C2227</text>
<rect x="1118.7" y="606.5" width="9.9" height="4.7" fill="#ffff00" stroke="#eea070" stroke-width="0.5"/>
<text x="1123.6" y="609.9" font-size="3.1" fill="#3a3200" text-anchor="middle" font-weight="bold">C2159</text>
<rect x="1129.1" y="606.5" width="9.8" height="4.7" fill="#ffff00" stroke="#eea070" stroke-width="0.5"/>
<text x="1134" y="609.9" font-size="3.1" fill="#3a3200" text-anchor="middle" font-weight="bold">L6071</text>
<rect x="1142.5" y="566.8" width="21.8" height="20.7" fill="#ffff00"/>
<path d="M1143 567.300 H1164 V587 H1143 Z" fill="none" stroke="#e81414" stroke-width="1.5" stroke-dasharray="4 3.500"/>
<rect x="1146" y="570.5" width="14.5" height="13.5" fill="#ffff00" stroke="#f0c0a0" stroke-width="0.6" stroke-dasharray="1.500 1.500"/>
<text x="1153.4" y="578.6" font-size="3.4" fill="#664" text-anchor="middle" font-weight="bold">U5002</text>
<rect x="1140" y="590" width="4.4" height="11.5" fill="#ffff00" stroke="#eea070" stroke-width="0.5"/>
<text x="1142.2" y="597" font-size="3.4" fill="#3a3200" text-anchor="middle" transform="rotate(-90 1142.2 597)" font-weight="bold">C5558</text>
<rect x="1145.2" y="590" width="4.4" height="11.5" fill="#ffff00" stroke="#eea070" stroke-width="0.5"/>
<text x="1147.3" y="597" font-size="3.4" fill="#3a3200" text-anchor="middle" transform="rotate(-90 1147.3 597)" font-weight="bold">C3670</text>
<rect x="1150.3" y="590" width="4.4" height="11.5" fill="#ffff00" stroke="#eea070" stroke-width="0.5"/>
<text x="1152.5" y="597" font-size="3.4" fill="#3a3200" text-anchor="middle" transform="rotate(-90 1152.5 597)" font-weight="bold">L1869</text>
<rect x="1155.5" y="590" width="4.4" height="11.5" fill="#ffff00" stroke="#eea070" stroke-width="0.5"/>
<text x="1157.7" y="597" font-size="3.4" fill="#3a3200" text-anchor="middle" transform="rotate(-90 1157.7 597)" font-weight="bold">C3035</text>
<rect x="1160.6" y="590" width="4.4" height="11.5" fill="#ffff00" stroke="#eea070" stroke-width="0.5"/>
<text x="1162.8" y="597" font-size="3.4" fill="#3a3200" text-anchor="middle" transform="rotate(-90 1162.8 597)" font-weight="bold">C3268</text>
<rect x="1144.7" y="601" width="12.3" height="10.2" fill="#ffff00" rx="2"/>
<path d="M1153 601 H1156 Q1158 606.1 1156 611.2 H1153" fill="none" stroke="#e81414" stroke-width="1.4"/>
<text x="1150.8" y="607.3" font-size="3.2" fill="#553" text-anchor="middle" font-weight="bold">U3307</text>
<rect x="1158" y="602.5" width="7.5" height="4" fill="#ffff00" stroke="#eea070" stroke-width="0.5"/>
<text x="1161.8" y="605.5" font-size="2.9" fill="#3a3200" text-anchor="middle" font-weight="bold">C1800</text>
<rect x="1158" y="607" width="7.5" height="4" fill="#ffff00" stroke="#eea070" stroke-width="0.5"/>
<text x="1161.8" y="610" font-size="2.9" fill="#3a3200" text-anchor="middle" font-weight="bold">L5601</text>
<rect x="1139.5" y="602.5" width="4.3" height="8.5" fill="#ffff00" stroke="#eea070" stroke-width="0.5"/>
<text x="1141.7" y="607.8" font-size="2.9" fill="#3a3200" text-anchor="middle" transform="rotate(-90 1141.7 607.8)" font-weight="bold">C1519</text>
<rect x="1100" y="612.5" width="4.5" height="10" fill="#ffff00" stroke="#eea070" stroke-width="0.5"/>
<text x="1102.2" y="618.6" font-size="3.1" fill="#3a3200" text-anchor="middle" transform="rotate(-90 1102.2 618.6)" font-weight="bold">L3667</text>
<rect x="1105.5" y="612.5" width="4.5" height="10" fill="#ffff00" stroke="#eea070" stroke-width="0.5"/>
<text x="1107.8" y="618.6" font-size="3.1" fill="#3a3200" text-anchor="middle" transform="rotate(-90 1107.8 618.6)" font-weight="bold">C6674</text>
<rect x="1113" y="612.5" width="4.5" height="10" fill="#ffff00" stroke="#eea070" stroke-width="0.5"/>
<text x="1115.2" y="618.6" font-size="3.1" fill="#3a3200" text-anchor="middle" transform="rotate(-90 1115.2 618.6)" font-weight="bold">R4705</text>
<rect x="1118.5" y="612" width="9.8" height="4.8" fill="#ffff00" stroke="#eea070" stroke-width="0.5"/>
<text x="1123.4" y="615.5" font-size="3" fill="#3a3200" text-anchor="middle" font-weight="bold">L5159</text>
<rect x="1128.8" y="612" width="9.8" height="4.8" fill="#ffff00" stroke="#eea070" stroke-width="0.5"/>
<text x="1133.6" y="615.5" font-size="3" fill="#3a3200" text-anchor="middle" font-weight="bold">C6727</text>
<rect x="1118.5" y="617.2" width="9.8" height="4.8" fill="#ffff00" stroke="#eea070" stroke-width="0.5"/>
<text x="1123.4" y="620.7" font-size="3" fill="#3a3200" text-anchor="middle" font-weight="bold">R5583</text>
<rect x="1128.8" y="617.2" width="9.8" height="4.8" fill="#ffff00" stroke="#eea070" stroke-width="0.5"/>
<text x="1133.6" y="620.7" font-size="3" fill="#3a3200" text-anchor="middle" font-weight="bold">C4666</text>
<rect x="1140" y="612.5" width="4.5" height="10" fill="#ffff00" stroke="#eea070" stroke-width="0.5"/>
<text x="1142.2" y="618.6" font-size="3.1" fill="#3a3200" text-anchor="middle" transform="rotate(-90 1142.2 618.6)" font-weight="bold">C4413</text>
<rect x="1145.5" y="612.5" width="4.5" height="10" fill="#ffff00" stroke="#eea070" stroke-width="0.5"/>
<text x="1147.8" y="618.6" font-size="3.1" fill="#3a3200" text-anchor="middle" transform="rotate(-90 1147.8 618.6)" font-weight="bold">C4214</text>
<rect x="1100" y="626" width="11" height="4.3" fill="#ffff00"/>
<text x="1105.5" y="629.4" font-size="3.4" fill="#3a3200" text-anchor="middle" font-weight="bold">C3585</text>
<rect x="1112" y="624.3" width="4.7" height="9.5" fill="#ffff00" stroke="#eea070" stroke-width="0.5"/>
<text x="1114.3" y="630.1" font-size="2.9" fill="#3a3200" text-anchor="middle" transform="rotate(-90 1114.3 630.1)" font-weight="bold">L3588</text>
<rect x="1117.4" y="624.3" width="4.7" height="9.5" fill="#ffff00" stroke="#eea070" stroke-width="0.5"/>
<text x="1119.8" y="630.1" font-size="2.9" fill="#3a3200" text-anchor="middle" transform="rotate(-90 1119.8 630.1)" font-weight="bold">C6498</text>
<rect x="1122.8" y="624.3" width="4.7" height="9.5" fill="#ffff00" stroke="#eea070" stroke-width="0.5"/>
<text x="1125.2" y="630.1" font-size="2.9" fill="#3a3200" text-anchor="middle" transform="rotate(-90 1125.2 630.1)" font-weight="bold">C4508</text>
<rect x="1128.7" y="624.3" width="12.3" height="9.5" fill="#ffff00" rx="2"/>
<path d="M1137 624.3 H1140 Q1142 629 1140 633.8 H1137" fill="none" stroke="#e81414" stroke-width="1.4"/>
<text x="1134.8" y="630.2" font-size="3.2" fill="#553" text-anchor="middle" font-weight="bold">U316</text>
<rect x="1115.6" y="635.3" width="12.4" height="10.1" fill="#ffff00" rx="2"/>
<path d="M1124 635.3 H1127 Q1129 640.3 1127 645.4 H1124" fill="none" stroke="#e81414" stroke-width="1.4"/>
<text x="1121.8" y="641.5" font-size="3.2" fill="#553" text-anchor="middle" font-weight="bold">U3301</text>
<rect x="1131" y="635.3" width="5.2" height="10.1" fill="#ffff00" stroke="#eea070" stroke-width="0.5"/>
<text x="1133.6" y="641.5" font-size="3.1" fill="#3a3200" text-anchor="middle" transform="rotate(-90 1133.6 641.5)" font-weight="bold">C2742</text>
<rect x="1136.8" y="635.3" width="5.2" height="10.1" fill="#ffff00" stroke="#eea070" stroke-width="0.5"/>
<text x="1139.4" y="641.5" font-size="3.1" fill="#3a3200" text-anchor="middle" transform="rotate(-90 1139.4 641.5)" font-weight="bold">R2002</text>
<path d="M1200 551.6 H1213 Q1214.600 551.6 1214.600 553.1 V563.1 Q1214.600 564.6 1213 564.6 H1200 L1197 561.6 V554.6 Z" fill="#ffff00" stroke="none" stroke-width="1.2"/>
<path d="M1197 555.1 L1200.500 551.3 L1203 552.6 M1209 551.6 H1214.800 V564.6 H1210 M1197 561.1 L1200 564.6" fill="none" stroke="#e81414" stroke-width="1.2"/>
<text x="1205.6" y="559.3" font-size="3.1" fill="#553" text-anchor="middle" font-weight="bold">ANT6001</text>
<text x="1193.5" y="558.6" font-size="3.4" fill="#f06090" text-anchor="middle" transform="rotate(-90 1193.5 558.6)">H15</text>
<path d="M1200 567.2 H1213 Q1214.600 567.2 1214.600 568.7 V578.7 Q1214.600 580.2 1213 580.2 H1200 L1197 577.2 V570.2 Z" fill="#ffff00" stroke="none" stroke-width="1.2"/>
<path d="M1197 570.7 L1200.500 566.9 L1203 568.2 M1209 567.2 H1214.800 V580.2 H1210 M1197 576.7 L1200 580.2" fill="none" stroke="#e81414" stroke-width="1.2"/>
<text x="1205.6" y="574.9" font-size="3.1" fill="#553" text-anchor="middle" font-weight="bold">ANT6002</text>
<text x="1193.5" y="574.2" font-size="3.4" fill="#f06090" text-anchor="middle" transform="rotate(-90 1193.5 574.2)">H10</text>
<path d="M1200 582.3 H1213 Q1214.600 582.3 1214.600 583.8 V593.8 Q1214.600 595.3 1213 595.3 H1200 L1197 592.3 V585.3 Z" fill="#ffff00" stroke="none" stroke-width="1.2"/>
<path d="M1197 585.8 L1200.500 582 L1203 583.3 M1209 582.3 H1214.800 V595.3 H1210 M1197 591.8 L1200 595.3" fill="none" stroke="#e81414" stroke-width="1.2"/>
<text x="1205.6" y="590" font-size="3.1" fill="#553" text-anchor="middle" font-weight="bold">ANT6003</text>
<text x="1193.5" y="589.3" font-size="3.4" fill="#f06090" text-anchor="middle" transform="rotate(-90 1193.5 589.3)">H11</text>
<path d="M1200 620.6 H1213 Q1214.600 620.6 1214.600 622.1 V632.1 Q1214.600 633.6 1213 633.6 H1200 L1197 630.6 V623.6 Z" fill="#ffff00" stroke="none" stroke-width="1.2"/>
<path d="M1197 624.1 L1200.500 620.3 L1203 621.6 M1209 620.6 H1214.800 V633.6 H1210 M1197 630.1 L1200 633.6" fill="none" stroke="#e81414" stroke-width="1.2"/>
<text x="1205.6" y="628.3" font-size="3.1" fill="#553" text-anchor="middle" font-weight="bold">ANT6504</text>
<text x="1193.5" y="627.6" font-size="3.4" fill="#f06090" text-anchor="middle" transform="rotate(-90 1193.5 627.6)">H14</text>
<path d="M1200 636 H1213 Q1214.600 636 1214.600 637.5 V647.5 Q1214.600 649 1213 649 H1200 L1197 646 V639 Z" fill="#ffff00" stroke="none" stroke-width="1.2"/>
<path d="M1197 639.5 L1200.500 635.7 L1203 637 M1209 636 H1214.800 V649 H1210 M1197 645.5 L1200 649" fill="none" stroke="#e81414" stroke-width="1.2"/>
<text x="1205.6" y="643.7" font-size="3.1" fill="#553" text-anchor="middle" font-weight="bold">ANT6503</text>
<text x="1193.5" y="643" font-size="3.4" fill="#f06090" text-anchor="middle" transform="rotate(-90 1193.5 643)">H16</text>
<circle cx="1200.7" cy="609.3" r="7.3" fill="#ffff00" stroke="#e0a060" stroke-width="0.7"/>
<text x="1200.7" y="610.6" font-size="3.4" fill="#553" text-anchor="middle" font-weight="bold">C6L8</text>
<text x="1185.500" y="590.500" font-size="4.600" fill="#6a6a00" font-weight="bold" text-anchor="middle" transform="rotate(-90 1185.500 590.500)" textLength="77" lengthAdjust="spacingAndGlyphs">TP3101TP3102TP3103TP3104TP3105TP3106</text>
<circle cx="638.5" cy="651" r="10.2" fill="#ffff00"/>
<text x="638.5" y="655.3" font-size="12.5" fill="#f0a818" text-anchor="middle">1</text>
<circle cx="856.6" cy="641.5" r="10" fill="#ffff00"/>
<text x="856.6" y="645.8" font-size="12.5" fill="#f0a818" text-anchor="middle">1</text>
<circle cx="1008.1" cy="644.9" r="10.1" fill="#ffff00"/>
<text x="1008.1" y="649.2" font-size="12.5" fill="#f0a818" text-anchor="middle">1</text>
<circle cx="1169.1" cy="639.6" r="9.8" fill="#ffff00"/>
<text x="1169.1" y="643.9" font-size="12.5" fill="#f0a818" text-anchor="middle">1</text>
<ellipse cx="666.800" cy="646" rx="6.300" ry="4.600" fill="#ffff00"/>
<text x="666.8" y="647.1" font-size="2.9" fill="#221" text-anchor="middle" font-weight="bold">NAN0001</text>
<rect x="886.4" y="627" width="17.2" height="26.5" fill="#ffff00"/>
<rect x="884.2" y="629" width="21.6" height="3.6" fill="#ffff00" rx="1.2"/>
<rect x="884.2" y="636" width="21.6" height="3.6" fill="#ffff00" rx="1.2"/>
<rect x="884.2" y="643" width="21.6" height="3.6" fill="#ffff00" rx="1.2"/>
<rect x="884.2" y="649" width="21.6" height="3.6" fill="#ffff00" rx="1.2"/>
<rect x="892" y="627" width="6" height="5.6" fill="#fff"/>
<path d="M886.2 628.5 V625.6 H903.8 V628.5 M886.2 651.5 V654.4 H903.8 V651.5" fill="none" stroke="#e81414" stroke-width="1.5"/>
<path d="M886.4 631 V650 M903.6 631 V650" fill="none" stroke="#e81414" stroke-width="1.2" stroke-dasharray="1.300 3.700"/>
<path d="M900.6 656 H905.4 V652.500" fill="none" stroke="#e81414" stroke-width="1.2"/>
<text x="895" y="642.6" font-size="3.6" fill="#443" text-anchor="middle" font-weight="bold">Q3101</text>
<rect x="944" y="627" width="17.6" height="26.5" fill="#ffff00"/>
<rect x="941.8" y="629" width="22" height="3.6" fill="#ffff00" rx="1.2"/>
<rect x="941.8" y="636" width="22" height="3.6" fill="#ffff00" rx="1.2"/>
<rect x="941.8" y="643" width="22" height="3.6" fill="#ffff00" rx="1.2"/>
<rect x="941.8" y="649" width="22" height="3.6" fill="#ffff00" rx="1.2"/>
<rect x="949.8" y="627" width="6" height="5.6" fill="#fff"/>
<path d="M943.8 628.5 V625.6 H961.8 V628.5 M943.8 651.5 V654.4 H961.8 V651.5" fill="none" stroke="#e81414" stroke-width="1.5"/>
<path d="M944 631 V650 M961.6 631 V650" fill="none" stroke="#e81414" stroke-width="1.2" stroke-dasharray="1.300 3.700"/>
<path d="M958.6 656 H963.4 V652.500" fill="none" stroke="#e81414" stroke-width="1.2"/>
<text x="952.8" y="642.6" font-size="3.6" fill="#443" text-anchor="middle" font-weight="bold">Q310H</text>
<rect x="907.6" y="624.4" width="11.2" height="21.2" fill="#ffff00" stroke="#eea070" stroke-width="0.5"/>
<rect x="908.4" y="632.5" width="9.6" height="5.1" fill="#fff"/>
<text x="913.2" y="636.5" font-size="4.2" fill="#3a3200" text-anchor="middle" transform="rotate(-90 913.2 636.5)" font-weight="bold">C276</text>
<rect x="927.7" y="623.5" width="8.8" height="29.5" fill="#ffff00"/>
<rect x="927" y="635" width="10.5" height="11" fill="#fff"/>
<path d="M925.800 629.500 V646.500 M938.400 629.500 V646.500 M925.800 634.300 H938.400" fill="none" stroke="#e81414" stroke-width="1.5"/>
<text x="932.5" y="641" font-size="3.4" fill="#446" text-anchor="middle" transform="rotate(-90 932.5 641)" font-weight="bold">U300</text>
<rect x="966.4" y="624.6" width="15.3" height="30.2" fill="#ffff00" stroke="#eea070" stroke-width="0.5"/>
<rect x="967.2" y="636.1" width="13.7" height="7.2" fill="#fff"/>
<text x="974" y="641.2" font-size="4.2" fill="#3a3200" text-anchor="middle" transform="rotate(-90 974 641.2)" font-weight="bold">R319</text>
<rect x="969" y="494.2" width="6.8" height="9.3" fill="#ffff00"/>
<rect x="961" y="555.7" width="8" height="30.8" fill="#ffff00"/>
<rect x="972.9" y="575.8" width="6.5" height="10.4" fill="#ffff00"/>
<rect x="968" y="598.6" width="9.5" height="9.4" fill="#ffff00"/>
<rect x="933.5" y="610.1" width="24.1" height="8.6" fill="#ffff00" rx="3"/>
<text x="1104.5" y="527" font-size="3.2" fill="#222" text-anchor="middle" transform="rotate(-90 1104.5 527)" font-weight="bold">NC</text>
<text x="1104.5" y="536.5" font-size="3.2" fill="#222" text-anchor="middle" font-weight="bold">H6NC</text>
<rect x="1102.5" y="522" width="3" height="5" fill="#ffff00" fill-opacity=".7"/>
<text x="1062.5" y="534" font-size="3.1" fill="#222" text-anchor="middle" transform="rotate(-90 1062.5 534)" font-weight="bold">H011</text>
<text x="635" y="346.3" font-size="8.8" fill="#6e6e6e" text-anchor="start" letter-spacing="-.6">SH1003</text>
<text x="643" y="414.2" font-size="8.8" fill="#6e6e6e" text-anchor="start" letter-spacing="-.6">SH1005</text>
<text x="861.5" y="401.6" font-size="8.8" fill="#6e6e6e" text-anchor="start" letter-spacing="-.6">SH1004</text>
<text x="1009.5" y="398.6" font-size="8.8" fill="#6e6e6e" text-anchor="start" letter-spacing="-.6">SH1001</text>
<text x="762.5" y="604.6" font-size="8.8" fill="#6e6e6e" text-anchor="start" letter-spacing="-.25">J6504</text>
<text x="693.3" y="537" font-size="8.8" fill="#6e6e6e" text-anchor="middle" transform="rotate(-90 693.3 537)" letter-spacing="-.3">J6503</text>
<text x="644.5" y="629.3" font-size="6.3" fill="#ff80b0" text-anchor="start">H619_V1.1</text>
</svg>
</div>
</div>
<div class="abs" style="left:1506px;top:161px;width:14px;height:674px;background:#fff;border-left:1px solid #d8d8d8"></div>
<div class="abs" style="left:1506px;top:161px;width:14px;height:18px;background:#fff;border-bottom:1px solid #c8c8c8"></div>
<svg class="abs" style="left:1508px;top:167px" width="9" height="6"><path d="M.7 5.300 L4.500 1.200 L8.300 5.300" fill="none" stroke="#404040" stroke-width="1.300"/></svg>
<div class="abs" style="left:1506px;top:818px;width:14px;height:17px;background:#fff;border-top:1px solid #c8c8c8"></div>
<svg class="abs" style="left:1508px;top:824px" width="9" height="6"><path d="M.7 .7 L4.500 4.800 L8.300 .7" fill="none" stroke="#404040" stroke-width="1.300"/></svg>
<div class="abs" style="left:1506px;top:500px;width:14px;height:318px;background:#dcdcdc;border:1px solid #c0c0c0"></div>
<div class="abs" style="left:1509px;top:657px;width:7px;height:1px;background:#505050;box-shadow:0 2px 0 #505050,0 4px 0 #505050"></div>

<div class="abs" style="left:0;top:835px;width:1521px;height:2px;background:#e8eef4"></div>
<div class="abs" style="left:0;top:837px;width:1521px;height:18px;background:#44648c"></div>
<div class="abs" style="left:0;top:855px;width:1521px;height:4px;background:#6bc8ea"></div>
<div class="abs mono" style="left:0;top:843px;color:#fff;line-height:14px">Version:1.0.0.52</div>
<div class="abs mono" style="right:3px;top:843px;color:#fff;line-height:14px">Current [H619_Main_PCB_V1.1_Placement]</div>

</div>
</body></html>
